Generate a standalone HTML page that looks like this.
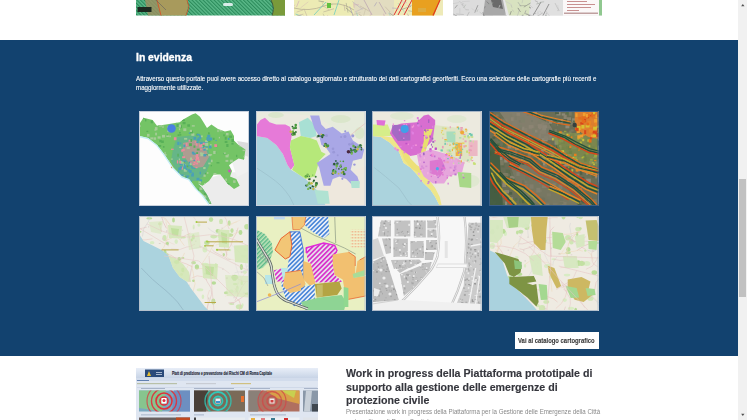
<!DOCTYPE html>
<html><head><meta charset="utf-8">
<style>
html,body{margin:0;padding:0;}
body{width:747px;height:420px;overflow:hidden;position:relative;background:#fff;font-family:"Liberation Sans",sans-serif;}
.abs{position:absolute;}
#blue{left:0;top:39.5px;width:738px;height:316px;background:#12426f;}
#sb{left:737.5px;top:0;width:9.5px;height:420px;background:#f1f1f1;}
#sbthumb{left:739px;top:178.5px;width:7px;height:118px;background:#c1c1c1;}
.t{white-space:nowrap;position:absolute;}
#h2{left:136px;top:50.7px;color:#fff;font-weight:bold;font-size:11.2px;-webkit-text-stroke:0.35px #fff;transform-origin:0 0;transform:scaleX(0.927);}
.p{left:136px;color:#fff;font-size:7.1px;-webkit-text-stroke:0.12px #fff;transform-origin:0 0;transform:scaleX(0.874);}
.thumb{position:absolute;width:109.6px;height:95px;background:#fff;overflow:hidden;}
.thumb svg{display:block;width:100%;height:100%;filter:blur(0.3px);}
#btn{left:514.5px;top:331.5px;width:84.5px;height:17.5px;background:#fff;}
#btntxt{left:518.2px;top:336.6px;color:#3a3a3a;font-weight:bold;font-size:6.6px;-webkit-text-stroke:0.1px #3a3a3a;transform-origin:0 0;transform:scaleX(0.894);}
#news h3{margin:0}
.nh{left:346px;color:#35363d;font-weight:bold;font-size:10.9px;-webkit-text-stroke:0.15px #35363d;transform-origin:0 0;transform:scaleX(0.977);}
.ns{left:346px;color:#888;font-size:6.8px;transform-origin:0 0;transform:scaleX(0.904);}
</style></head><body>
<!-- top images -->
<svg class="abs" style="left:136px;top:0" width="149" height="16" viewBox="0 0 149 16" preserveAspectRatio="none">
<defs><pattern id="tg" width="2.6" height="2.6" patternUnits="userSpaceOnUse" patternTransform="rotate(-45)"><rect width="2.6" height="2.6" fill="#5ab888"/><rect width="1.1" height="2.6" fill="#2a8a5a"/></pattern></defs>
<rect width="149" height="15.5" fill="url(#tg)"/>
<path d="M9,0 L22,0 L26,15.5 L12,15.5 Z" fill="#a09060" opacity="0.8"/>
<path d="M21,0 L51,0 L52,6 L50,15.5 L25,15.5 Z" fill="#a89a5c"/>
<path d="M21,0 L25,15.5 M51,0 L53,7 L50,15.5" stroke="#e04a20" stroke-width="0.8" fill="none"/>
<path d="M20,0 L30,10" stroke="#606060" stroke-width="0.6"/>
<path d="M135,0 L149,0 L149,15.5 L136,15.5 L138,8 Z" fill="#7a9a3a"/>
<path d="M135,0 Q139,8 136,15.5" stroke="#303030" stroke-width="0.6" fill="none"/>
<rect x="1.5" y="7" width="14" height="5" fill="#1c2a20"/>
<rect x="87" y="3" width="10" height="3" rx="1.5" fill="#d8ece8"/>
</svg>
<svg class="abs" style="left:294px;top:0" width="149" height="16" viewBox="0 0 149 16" preserveAspectRatio="none">
<rect width="149" height="15.5" fill="#eeeab8"/>
<path d="M0,0 L60,0 L60,15.5 L0,15.5 Z" fill="#ecebb4"/>
<path d="M60,0 L100,0 L100,15.5 L60,15.5 Z" fill="#e2dcc0"/>
<g fill="none" stroke-width="0.7">
<path d="M0,8 Q15,12 30,6 T60,10" stroke="#b0a890"/>
<path d="M20,15 L32,2 M40,15 L45,0" stroke="#60c8c0"/>
<path d="M70,0 L78,15 M85,2 L92,14" stroke="#b8a0b0"/>
<path d="M100,15 L108,0 M104,15 L112,0 M110,15 L118,0" stroke="#e03030" stroke-width="1"/>
</g>
<g opacity="0.9"><path d="M27.9,1.7 L29.6,6.9" stroke="#b8b098" stroke-width="0.4"/><path d="M64.8,4.6 L60.2,4.8" stroke="#d0a8b8" stroke-width="0.6"/><path d="M32.6,2.8 L38.5,4.8" stroke="#b8b098" stroke-width="0.7"/><path d="M95.2,12.8 L101.0,16.9" stroke="#9a9a88" stroke-width="0.7"/><path d="M113.4,13.6 L118.2,25.0" stroke="#c0b0a0" stroke-width="0.7"/><path d="M59.7,2.8 L60.1,7.7" stroke="#d0a8b8" stroke-width="0.7"/><path d="M0.9,4.7 L-3.4,10.4" stroke="#d0a8b8" stroke-width="0.5"/><path d="M50.0,4.6 L51.0,10.9" stroke="#c0b0a0" stroke-width="0.7"/><path d="M5.1,0.7 L2.5,7.0" stroke="#d0a8b8" stroke-width="0.7"/><path d="M82.7,2.3 L80.3,6.3" stroke="#a8a0b8" stroke-width="0.7"/><path d="M52.1,2.9 L54.0,12.6" stroke="#9a9a88" stroke-width="0.6"/><path d="M106.7,1.6 L112.9,2.8" stroke="#d0a8b8" stroke-width="0.6"/><path d="M28.0,5.3 L35.3,9.8" stroke="#b8b098" stroke-width="0.5"/><path d="M9.7,15.4 L16.5,23.8" stroke="#c0b0a0" stroke-width="0.4"/><path d="M34.1,15.5 L27.9,20.7" stroke="#d0a8b8" stroke-width="0.7"/><path d="M9.2,9.9 L2.6,12.1" stroke="#c0b0a0" stroke-width="0.6"/><path d="M113.5,5.3 L117.9,5.4" stroke="#a8a0b8" stroke-width="0.5"/><path d="M94.9,16.0 L93.0,24.1" stroke="#a8a0b8" stroke-width="0.6"/><path d="M24.5,0.9 L30.1,1.9" stroke="#9a9a88" stroke-width="0.8"/><path d="M71.6,8.7 L69.7,15.7" stroke="#b8b098" stroke-width="0.4"/><path d="M62.5,12.4 L66.4,25.7" stroke="#70c8c0" stroke-width="0.5"/><path d="M51.8,7.9 L58.3,13.2" stroke="#9a9a88" stroke-width="0.8"/><path d="M98.1,8.0 L104.6,8.6" stroke="#a8a0b8" stroke-width="0.6"/><path d="M91.1,6.7 L96.1,12.0" stroke="#c0b0a0" stroke-width="0.6"/><path d="M116.9,6.4 L106.9,9.7" stroke="#9a9a88" stroke-width="0.7"/><path d="M58.3,1.5 L68.4,9.3" stroke="#a8a0b8" stroke-width="0.5"/><path d="M77.5,12.8 L72.3,23.7" stroke="#d0a8b8" stroke-width="0.5"/><path d="M94.6,12.8 L98.4,19.7" stroke="#70c8c0" stroke-width="0.4"/><path d="M114.6,15.4 L112.3,19.2" stroke="#d0a8b8" stroke-width="0.5"/><path d="M114.3,10.7 L119.9,11.7" stroke="#9a9a88" stroke-width="0.6"/><path d="M55.7,6.5 L59.8,17.7" stroke="#a8a0b8" stroke-width="0.8"/><path d="M1.5,14.0 L12.9,18.3" stroke="#70c8c0" stroke-width="0.8"/><path d="M65.0,14.1 L73.6,20.4" stroke="#c0b0a0" stroke-width="0.7"/><path d="M66.4,12.5 L58.3,14.8" stroke="#b8b098" stroke-width="0.4"/><path d="M70.1,7.8 L61.0,12.0" stroke="#a8a0b8" stroke-width="0.4"/><path d="M9.4,14.1 L2.7,16.1" stroke="#c0b0a0" stroke-width="0.7"/><path d="M10.0,8.7 L14.4,19.7" stroke="#c0b0a0" stroke-width="0.6"/><path d="M89.5,13.7 L91.0,18.2" stroke="#d0a8b8" stroke-width="0.7"/><path d="M43.2,16.0 L46.1,26.7" stroke="#70c8c0" stroke-width="0.4"/><path d="M104.0,3.1 L111.2,13.2" stroke="#70c8c0" stroke-width="0.4"/><path d="M65.9,5.9 L75.5,11.4" stroke="#c0b0a0" stroke-width="0.6"/><path d="M40.0,8.7 L29.3,12.0" stroke="#b8b098" stroke-width="0.7"/><path d="M14.3,1.8 L6.4,8.0" stroke="#d0a8b8" stroke-width="0.4"/><path d="M29.0,13.6 L34.0,24.1" stroke="#9a9a88" stroke-width="0.4"/><path d="M6.2,14.5 L4.4,27.5" stroke="#d0a8b8" stroke-width="0.5"/></g><rect x="33" y="3" width="4" height="5" fill="#60c040"/>
<path d="M118,0 L146,0 L140,15.5 L118,15.5 Z" fill="#e8a020"/>
<path d="M146,0 L139,15.5" stroke="#e03a20" stroke-width="1.2"/>
<rect x="124" y="8" width="8" height="4" fill="#d8b050" opacity="0.7"/>
</svg>
<svg class="abs" style="left:453px;top:0" width="149" height="16" viewBox="0 0 149 16" preserveAspectRatio="none">
<rect width="149" height="15.5" fill="#e6e6e6"/>
<path d="M0,0 H40 V15.5 H0 Z" fill="#dcdcdc"/>
<path d="M32,0 L50,0 L53,15.5 L30,15.5 Z" fill="#a8a8a8"/>
<path d="M38,0 L48,0 L50,9 L40,7 Z" fill="#6a6a6a"/>
<path d="M52,0 L78,0 L76,15.5 L56,15.5 Z" fill="#d8e2c0"/>
<path d="M78,0 L110,0 L110,15.5 L76,15.5 Z" fill="#e0e0e0"/>
<path d="M80,15.5 L88,2 M90,15.5 L96,4" stroke="#707070" stroke-width="0.7"/><g opacity="0.8"><path d="M93.7,12.6 L92.1,17.0" stroke="#909090" stroke-width="0.5"/><path d="M64.5,15.8 L66.7,19.8" stroke="#a0a8a0" stroke-width="0.5"/><path d="M87.4,2.8 L83.3,4.1" stroke="#a0a8a0" stroke-width="0.8"/><path d="M72.9,14.1 L78.6,15.5" stroke="#909090" stroke-width="0.6"/><path d="M40.2,2.8 L34.9,4.8" stroke="#a0a8a0" stroke-width="0.9"/><path d="M89.6,12.8 L83.3,17.2" stroke="#909090" stroke-width="0.5"/><path d="M106.6,10.6 L104.1,10.6" stroke="#b0b0b0" stroke-width="0.5"/><path d="M51.7,14.2 L56.9,18.5" stroke="#c8c8c8" stroke-width="0.8"/><path d="M74.3,14.1 L77.9,17.4" stroke="#909090" stroke-width="0.6"/><path d="M24.9,5.2 L21.8,12.6" stroke="#707070" stroke-width="0.7"/><path d="M104.7,5.0 L105.8,10.4" stroke="#c8c8c8" stroke-width="0.5"/><path d="M58.3,11.1 L56.9,15.0" stroke="#707070" stroke-width="0.7"/><path d="M16.9,1.1 L9.0,1.7" stroke="#c8c8c8" stroke-width="0.7"/><path d="M33.7,1.5 L36.0,3.9" stroke="#707070" stroke-width="0.8"/><path d="M84.0,2.4 L86.8,5.0" stroke="#b0b0b0" stroke-width="0.5"/><path d="M85.4,10.9 L84.2,18.6" stroke="#c8c8c8" stroke-width="0.4"/><path d="M26.5,12.0 L32.6,16.7" stroke="#b0b0b0" stroke-width="0.5"/><path d="M6.6,15.9 L11.1,21.7" stroke="#909090" stroke-width="0.8"/><path d="M70.8,15.2 L64.9,17.6" stroke="#a0a8a0" stroke-width="0.6"/><path d="M0.3,14.1 L4.2,16.2" stroke="#909090" stroke-width="0.8"/><path d="M52.3,1.1 L58.6,4.7" stroke="#c8c8c8" stroke-width="0.7"/><path d="M58.0,4.8 L59.0,7.7" stroke="#b0b0b0" stroke-width="0.6"/><path d="M3.0,14.0 L10.8,14.5" stroke="#909090" stroke-width="0.4"/><path d="M12.5,9.7 L15.9,9.9" stroke="#b0b0b0" stroke-width="0.6"/><path d="M77.6,3.0 L70.8,7.1" stroke="#707070" stroke-width="0.6"/><path d="M18.6,8.5 L22.7,11.2" stroke="#c8c8c8" stroke-width="0.6"/><path d="M69.9,14.4 L69.2,16.5" stroke="#909090" stroke-width="0.5"/><path d="M92.7,10.6 L96.9,16.7" stroke="#c8c8c8" stroke-width="0.8"/><path d="M9.0,3.8 L10.4,6.0" stroke="#b0b0b0" stroke-width="0.7"/><path d="M56.9,15.8 L58.0,18.0" stroke="#b0b0b0" stroke-width="0.6"/><path d="M58.9,9.6 L61.2,11.8" stroke="#b0b0b0" stroke-width="0.6"/><path d="M65.0,2.2 L67.8,6.4" stroke="#a0a8a0" stroke-width="0.8"/><path d="M7.7,3.6 L12.8,9.5" stroke="#b0b0b0" stroke-width="0.4"/><path d="M75.3,3.4 L79.9,7.9" stroke="#c8c8c8" stroke-width="0.8"/><path d="M32.2,6.2 L31.5,8.3" stroke="#707070" stroke-width="0.6"/><path d="M6.9,8.2 L6.8,13.5" stroke="#c8c8c8" stroke-width="0.8"/><path d="M76.1,7.0 L77.9,8.1" stroke="#707070" stroke-width="0.9"/><path d="M29.8,12.1 L31.5,17.6" stroke="#707070" stroke-width="0.6"/><path d="M67.0,4.1 L66.9,6.3" stroke="#c8c8c8" stroke-width="0.7"/><path d="M73.0,10.3 L71.6,13.9" stroke="#909090" stroke-width="0.7"/><path d="M75.7,15.0 L78.0,17.3" stroke="#707070" stroke-width="0.8"/><path d="M69.7,0.1 L69.0,3.3" stroke="#b0b0b0" stroke-width="0.5"/><path d="M91.1,1.8 L87.3,2.2" stroke="#a0a8a0" stroke-width="0.7"/><path d="M16.3,11.9 L12.4,18.9" stroke="#b0b0b0" stroke-width="0.8"/><path d="M86.5,10.8 L90.3,14.9" stroke="#c8c8c8" stroke-width="0.8"/><path d="M83.2,13.5 L80.2,13.6" stroke="#909090" stroke-width="0.4"/><path d="M5.8,2.6 L-1.7,4.0" stroke="#c8c8c8" stroke-width="0.8"/><path d="M72.2,13.5 L75.2,14.5" stroke="#909090" stroke-width="0.6"/><path d="M64.9,7.9 L67.4,11.8" stroke="#707070" stroke-width="0.8"/><path d="M81.9,0.6 L84.9,2.1" stroke="#909090" stroke-width="0.6"/><path d="M93.4,15.0 L91.2,18.7" stroke="#a0a8a0" stroke-width="0.8"/><path d="M102.0,3.1 L105.6,10.1" stroke="#909090" stroke-width="0.4"/><path d="M12.7,4.7 L10.5,8.0" stroke="#a0a8a0" stroke-width="0.6"/><path d="M4.5,4.9 L1.7,8.3" stroke="#909090" stroke-width="0.9"/><path d="M66.7,5.6 L72.9,5.7" stroke="#707070" stroke-width="0.4"/><path d="M84.6,11.7 L85.3,14.3" stroke="#c8c8c8" stroke-width="0.7"/><path d="M5.9,1.3 L11.2,4.2" stroke="#b0b0b0" stroke-width="0.5"/><path d="M66.4,9.6 L64.5,15.6" stroke="#b0b0b0" stroke-width="0.6"/><path d="M25.0,9.4 L23.9,12.0" stroke="#a0a8a0" stroke-width="0.5"/><path d="M47.0,5.0 L45.8,7.8" stroke="#c8c8c8" stroke-width="0.9"/></g>
<rect x="110" y="0" width="37" height="15.5" fill="#fbf8f8"/>
<g fill="#c89090"><rect x="114" y="1" width="20" height="1"/><rect x="114" y="4" width="28" height="1"/><rect x="114" y="7" width="24" height="1"/><rect x="114" y="10" width="12" height="1"/></g>
<rect x="111" y="12.5" width="34" height="1.5" fill="#c0a0a0"/>
<rect x="146" y="0" width="3" height="15.5" fill="#90c890"/>
</svg>
<div id="blue" class="abs"></div>
<div id="h2" class="t">In evidenza</div>
<div class="t p" style="top:74.8px">Attraverso questo portale puoi avere accesso diretto al catalogo aggiornato e strutturato dei dati cartografici georiferiti. Ecco una selezione delle cartografie più recenti e</div>
<div class="t p" style="top:84.2px">maggiormente utilizzate.</div>

<div class="thumb" style="left:138.7px;top:110.7px;width:110px"><svg viewBox="0 0 110 95" preserveAspectRatio="none">
<defs><clipPath id="t1c"><path d="M0,13.6 L4.5,6.8 L13.6,9 L18,14.7 L27,13.6 L40.7,11.3 L45,7.9 L53,3.4 L56.6,2.3 L61,5.7 L64.5,11.3 L68,17 L72.4,13.6 L79,18 L86,20.4 L91.7,19.2 L95,25 L95,29.4 L99.6,34 L106.4,38.5 L105,48.7 L99.6,47.5 L94,51 L90,54.3 L93,60 L91,65.6 L97.3,68 L100.7,74.7 L95,78 L88.3,72.4 L81.5,63.4 L74.7,63.4 L70,70 L63.4,74.7 L58.8,72.4 L63.4,77 L68,83.7 L72.4,92.8 L70,93 L63.4,83.7 L56.6,77 L49.8,68 L43,65.6 L34,56.6 L29.4,49.8 L24.9,43 L18,34 L9,27 L0,24.9 Z"/><path d="M58.8,72.4 L63.4,77 L68,83.7 L72.4,92.8 L70,93 Z"/></clipPath></defs>
<rect width="110" height="95" fill="#fdfdfd"/>
<path d="M56,72 L86,62 L110,60 L110,95 L72,95 Z" fill="#ececec"/>
<path d="M92,48 L110,44 L110,60 L98,66 Z" fill="#f0f0f0"/>
<path d="M0,15 L6,16 L6,25 L0,25 Z" fill="#d8d2d8"/>
<path d="M98,30 L110,32 L110,46 L104,44 Z" fill="#dcdcdc"/>
<path d="M0,13.6 L4.5,6.8 L13.6,9 L18,14.7 L27,13.6 L40.7,11.3 L45,7.9 L53,3.4 L56.6,2.3 L61,5.7 L64.5,11.3 L68,17 L72.4,13.6 L79,18 L86,20.4 L91.7,19.2 L95,25 L95,29.4 L99.6,34 L106.4,38.5 L105,48.7 L99.6,47.5 L94,51 L90,54.3 L93,60 L91,65.6 L97.3,68 L100.7,74.7 L95,78 L88.3,72.4 L81.5,63.4 L74.7,63.4 L70,70 L63.4,74.7 L58.8,72.4 L63.4,77 L68,83.7 L72.4,92.8 L70,93 L63.4,83.7 L56.6,77 L49.8,68 L43,65.6 L34,56.6 L29.4,49.8 L24.9,43 L18,34 L9,27 L0,24.9 Z" fill="#74c466"/>
<path d="M58.8,72.4 L63.4,77 L68,83.7 L72.4,92.8 L70,93 Z" fill="#6ab872"/>
<g clip-path="url(#t1c)">
<path d="M38,26 L56,24 L68,32 L72,50 L66,64 L58,70 L50,70 L42,64 L36,57 L32,50 L34,38 Z" fill="#58a8a8" opacity="0.5"/>
<path d="M44,32 L56,29 L66,36 L70,46 L64,56 L56,57 L50,52 L44,44 Z" fill="#dc8c98" opacity="0.6"/>
<rect x="6.4" y="48.2" width="2.1" height="1.3" fill="#a6cc98"/><rect x="31.9" y="13.7" width="1.8" height="2.8" fill="#a6cc98"/><rect x="41.0" y="52.0" width="1.3" height="1.6" fill="#ec8a9c"/><rect x="74.8" y="40.6" width="2.4" height="2.1" fill="#58b058"/><rect x="52.2" y="63.1" width="2.6" height="2.5" fill="#4aa0b8"/><rect x="42.4" y="63.5" width="2.1" height="1.5" fill="#4aa0b8"/><rect x="43.2" y="37.9" width="2.5" height="1.3" fill="#ec8a9c"/><rect x="7.4" y="19.8" width="1.9" height="1.3" fill="#58b058"/><rect x="0.0" y="14.4" width="1.9" height="1.3" fill="#a6cc98"/><rect x="96.2" y="58.3" width="1.7" height="1.9" fill="#58b058"/><rect x="29.1" y="78.7" width="1.2" height="3.1" fill="#58b058"/><rect x="39.1" y="2.8" width="1.8" height="1.7" fill="#a6cc98"/><rect x="40.1" y="20.9" width="1.6" height="1.6" fill="#58b058"/><rect x="18.7" y="12.1" width="3.0" height="2.8" fill="#58b058"/><rect x="26.5" y="55.7" width="2.0" height="1.5" fill="#58b058"/><rect x="61.2" y="31.0" width="2.3" height="2.8" fill="#4aa0b8"/><rect x="48.8" y="58.2" width="2.2" height="2.6" fill="#4aa0b8"/><rect x="49.8" y="50.7" width="3.1" height="2.6" fill="#4aa0b8"/><rect x="8.0" y="22.9" width="2.5" height="2.8" fill="#a6cc98"/><rect x="56.7" y="32.2" width="1.8" height="2.6" fill="#ec8a9c"/><rect x="86.7" y="92.3" width="1.7" height="1.3" fill="#a6cc98"/><rect x="85.7" y="25.7" width="2.0" height="3.0" fill="#58b058"/><rect x="90.1" y="24.6" width="3.0" height="2.3" fill="#58b058"/><rect x="77.0" y="8.5" width="2.6" height="2.1" fill="#a6cc98"/><rect x="26.2" y="10.4" width="1.3" height="1.6" fill="#58b058"/><rect x="31.9" y="47.5" width="1.9" height="1.2" fill="#a6cc98"/><rect x="38.2" y="5.2" width="1.3" height="2.7" fill="#58b058"/><rect x="28.1" y="15.5" width="2.9" height="2.9" fill="#a6cc98"/><rect x="73.8" y="26.8" width="1.8" height="2.1" fill="#58b058"/><rect x="52.2" y="47.8" width="2.2" height="1.2" fill="#ec8a9c"/><rect x="67.9" y="61.1" width="1.5" height="1.7" fill="#a6cc98"/><rect x="49.6" y="28.7" width="1.9" height="1.8" fill="#ec8a9c"/><rect x="64.8" y="34.3" width="1.8" height="1.3" fill="#4aa0b8"/><rect x="60.4" y="68.4" width="2.7" height="2.1" fill="#4aa0b8"/><rect x="5.4" y="88.0" width="2.1" height="1.9" fill="#58b058"/><rect x="61.3" y="37.5" width="1.5" height="1.6" fill="#ec8a9c"/><rect x="15.4" y="18.3" width="1.9" height="1.4" fill="#a6cc98"/><rect x="45.5" y="49.8" width="1.9" height="1.3" fill="#4aa0b8"/><rect x="30.5" y="91.9" width="2.2" height="2.5" fill="#58b058"/><rect x="27.3" y="10.4" width="2.2" height="2.6" fill="#58b058"/><rect x="76.8" y="10.7" width="2.2" height="2.4" fill="#a6cc98"/><rect x="52.3" y="22.3" width="3.1" height="2.6" fill="#a6cc98"/><rect x="74.2" y="39.9" width="2.5" height="3.1" fill="#a6cc98"/><rect x="46.3" y="64.8" width="2.8" height="2.7" fill="#4aa0b8"/><rect x="104.7" y="47.1" width="1.6" height="2.0" fill="#58b058"/><rect x="73.2" y="90.1" width="2.0" height="1.6" fill="#58b058"/><rect x="107.2" y="13.5" width="1.3" height="2.0" fill="#a6cc98"/><rect x="41.1" y="31.5" width="1.2" height="1.8" fill="#4aa0b8"/><rect x="38.7" y="90.8" width="3.1" height="1.6" fill="#58b058"/><rect x="41.0" y="87.4" width="1.9" height="3.0" fill="#58b058"/><rect x="84.3" y="3.9" width="1.3" height="3.0" fill="#a6cc98"/><rect x="34.8" y="26.2" width="2.7" height="3.0" fill="#ec8a9c"/><rect x="69.7" y="89.6" width="1.7" height="2.2" fill="#a6cc98"/><rect x="66.8" y="31.1" width="1.9" height="2.8" fill="#4aa0b8"/><rect x="27.2" y="6.1" width="2.3" height="1.9" fill="#a6cc98"/><rect x="29.1" y="8.0" width="2.2" height="2.6" fill="#a6cc98"/><rect x="93.2" y="63.1" width="2.9" height="1.8" fill="#58b058"/><rect x="62.4" y="35.4" width="1.6" height="1.7" fill="#a6cc98"/><rect x="63.6" y="31.0" width="3.2" height="2.2" fill="#4aa0b8"/><rect x="4.4" y="27.9" width="1.6" height="3.1" fill="#a6cc98"/><rect x="85.6" y="89.8" width="2.4" height="2.4" fill="#a6cc98"/><rect x="23.9" y="35.0" width="1.6" height="1.7" fill="#58b058"/><rect x="65.9" y="61.9" width="1.2" height="1.9" fill="#58b058"/><rect x="60.5" y="60.7" width="1.5" height="2.6" fill="#4aa0b8"/><rect x="45.1" y="26.9" width="3.1" height="1.8" fill="#a6cc98"/><rect x="62.3" y="33.9" width="2.9" height="3.2" fill="#4aa0b8"/><rect x="97.1" y="43.8" width="1.2" height="2.3" fill="#58b058"/><rect x="70.5" y="86.4" width="2.4" height="1.9" fill="#a6cc98"/><rect x="57.3" y="87.9" width="2.2" height="2.8" fill="#a6cc98"/><rect x="106.4" y="18.7" width="3.1" height="3.2" fill="#58b058"/><rect x="44.0" y="49.2" width="1.4" height="1.7" fill="#4aa0b8"/><rect x="79.7" y="85.2" width="2.3" height="2.7" fill="#a6cc98"/><rect x="4.2" y="79.6" width="2.4" height="2.3" fill="#a6cc98"/><rect x="69.0" y="29.1" width="2.4" height="2.1" fill="#58b058"/><rect x="4.5" y="60.5" width="2.7" height="2.8" fill="#a6cc98"/><rect x="41.6" y="90.3" width="2.9" height="3.2" fill="#58b058"/><rect x="80.5" y="77.4" width="3.2" height="2.2" fill="#58b058"/><rect x="105.2" y="87.0" width="2.8" height="3.1" fill="#58b058"/><rect x="55.7" y="30.3" width="1.6" height="1.5" fill="#ec8a9c"/><rect x="18.6" y="74.6" width="2.3" height="2.5" fill="#a6cc98"/><rect x="63.8" y="83.8" width="3.2" height="2.5" fill="#a6cc98"/><rect x="84.1" y="42.0" width="2.7" height="1.3" fill="#58b058"/><rect x="34.4" y="0.2" width="1.5" height="2.4" fill="#a6cc98"/><rect x="64.2" y="56.0" width="2.4" height="2.1" fill="#a6cc98"/><rect x="61.9" y="33.3" width="2.1" height="3.1" fill="#a6cc98"/><rect x="49.8" y="21.5" width="1.7" height="1.3" fill="#4aa0b8"/><rect x="60.9" y="41.4" width="2.2" height="1.7" fill="#a6cc98"/><rect x="23.3" y="59.1" width="3.0" height="1.5" fill="#a6cc98"/><rect x="37.9" y="13.5" width="1.3" height="2.6" fill="#a6cc98"/><rect x="69.5" y="27.3" width="1.4" height="2.7" fill="#4aa0b8"/><rect x="77.5" y="51.1" width="2.9" height="1.4" fill="#58b058"/><rect x="90.2" y="16.2" width="1.6" height="2.7" fill="#a6cc98"/><rect x="54.1" y="75.7" width="2.2" height="1.9" fill="#58b058"/><rect x="9.5" y="84.4" width="1.6" height="1.7" fill="#a6cc98"/><rect x="71.1" y="33.1" width="1.5" height="2.9" fill="#a6cc98"/><rect x="72.8" y="70.5" width="2.1" height="2.7" fill="#58b058"/><rect x="97.4" y="22.6" width="1.8" height="2.6" fill="#58b058"/><rect x="92.8" y="14.7" width="1.7" height="1.9" fill="#58b058"/><rect x="11.2" y="91.4" width="2.0" height="3.2" fill="#a6cc98"/><rect x="21.6" y="60.6" width="1.6" height="2.0" fill="#a6cc98"/><rect x="47.3" y="54.5" width="2.0" height="1.7" fill="#58b058"/><rect x="70.6" y="43.1" width="2.5" height="1.4" fill="#a6cc98"/><rect x="50.1" y="59.0" width="2.6" height="3.1" fill="#4aa0b8"/><rect x="4.2" y="51.6" width="2.8" height="3.1" fill="#58b058"/><rect x="76.8" y="33.5" width="1.6" height="2.7" fill="#58b058"/><rect x="51.5" y="28.0" width="1.5" height="2.9" fill="#58b058"/><rect x="52.8" y="40.7" width="2.5" height="1.9" fill="#4aa0b8"/><rect x="102.2" y="81.2" width="2.9" height="3.0" fill="#a6cc98"/><rect x="69.6" y="1.4" width="3.1" height="2.5" fill="#a6cc98"/><rect x="27.5" y="9.6" width="1.7" height="2.8" fill="#58b058"/><rect x="61.1" y="25.1" width="1.5" height="2.2" fill="#4aa0b8"/><rect x="6.4" y="44.4" width="2.2" height="2.2" fill="#58b058"/><rect x="59.3" y="82.0" width="2.9" height="2.1" fill="#a6cc98"/><rect x="69.8" y="74.5" width="2.6" height="3.0" fill="#a6cc98"/><rect x="50.4" y="72.5" width="1.6" height="1.3" fill="#a6cc98"/><rect x="61.8" y="24.5" width="2.0" height="1.8" fill="#a6cc98"/><rect x="6.0" y="53.9" width="1.4" height="2.8" fill="#a6cc98"/><rect x="23.4" y="14.4" width="1.2" height="2.6" fill="#a6cc98"/><rect x="13.4" y="91.8" width="2.9" height="1.5" fill="#a6cc98"/><rect x="80.7" y="17.8" width="2.7" height="2.6" fill="#a6cc98"/><rect x="94.1" y="69.3" width="2.5" height="2.6" fill="#a6cc98"/><rect x="106.1" y="68.1" width="1.2" height="2.5" fill="#a6cc98"/><rect x="63.2" y="41.7" width="1.5" height="2.8" fill="#a6cc98"/><rect x="66.1" y="29.3" width="3.0" height="2.0" fill="#a6cc98"/><rect x="88.8" y="26.9" width="1.7" height="2.0" fill="#4aa0b8"/><rect x="100.5" y="33.0" width="2.3" height="2.8" fill="#a6cc98"/><rect x="51.2" y="19.6" width="2.7" height="2.8" fill="#58b058"/><rect x="52.4" y="56.0" width="1.6" height="1.6" fill="#4aa0b8"/><rect x="44.3" y="49.1" width="1.3" height="3.2" fill="#ec8a9c"/><rect x="37.9" y="49.3" width="1.3" height="3.2" fill="#ec8a9c"/><rect x="106.0" y="24.1" width="1.6" height="1.6" fill="#a6cc98"/><rect x="109.1" y="21.1" width="1.7" height="1.9" fill="#a6cc98"/><rect x="71.1" y="93.6" width="1.5" height="2.7" fill="#a6cc98"/><rect x="65.1" y="72.0" width="1.8" height="1.7" fill="#a6cc98"/><rect x="13.7" y="45.7" width="1.7" height="1.5" fill="#58b058"/><rect x="69.1" y="43.0" width="2.8" height="2.2" fill="#a6cc98"/><rect x="92.4" y="31.8" width="2.2" height="1.8" fill="#58b058"/><rect x="37.5" y="13.3" width="2.9" height="2.3" fill="#4aa0b8"/><rect x="24.0" y="54.3" width="1.6" height="2.7" fill="#a6cc98"/><rect x="78.3" y="18.7" width="1.4" height="2.4" fill="#a6cc98"/><rect x="54.5" y="26.0" width="2.4" height="2.6" fill="#4aa0b8"/><rect x="54.4" y="48.8" width="2.3" height="1.2" fill="#4aa0b8"/><rect x="106.4" y="21.3" width="1.4" height="1.7" fill="#58b058"/><rect x="89.9" y="2.9" width="2.6" height="1.6" fill="#a6cc98"/><rect x="57.5" y="66.8" width="2.9" height="2.6" fill="#4aa0b8"/><rect x="55.1" y="26.6" width="2.0" height="1.5" fill="#4aa0b8"/><rect x="65.1" y="81.8" width="2.3" height="2.7" fill="#58b058"/><rect x="57.8" y="37.6" width="2.8" height="1.9" fill="#58b058"/><rect x="89.7" y="80.5" width="2.2" height="3.1" fill="#a6cc98"/><rect x="57.2" y="41.2" width="1.8" height="1.8" fill="#58b058"/><rect x="51.3" y="50.7" width="1.4" height="1.5" fill="#ec8a9c"/><rect x="50.7" y="52.1" width="2.1" height="1.8" fill="#a6cc98"/><rect x="42.1" y="55.6" width="1.9" height="2.9" fill="#ec8a9c"/><rect x="84.9" y="15.1" width="2.9" height="2.1" fill="#a6cc98"/><rect x="105.5" y="70.2" width="1.9" height="1.9" fill="#58b058"/><rect x="14.0" y="82.7" width="2.7" height="2.4" fill="#a6cc98"/><rect x="66.8" y="36.1" width="2.1" height="2.6" fill="#a6cc98"/><rect x="20.3" y="28.9" width="2.4" height="2.4" fill="#58b058"/><rect x="39.3" y="56.5" width="3.1" height="2.6" fill="#4aa0b8"/><rect x="44.1" y="53.3" width="3.0" height="3.1" fill="#a6cc98"/><rect x="53.5" y="41.8" width="3.2" height="1.9" fill="#4aa0b8"/><rect x="58.3" y="77.5" width="1.8" height="3.2" fill="#58b058"/><rect x="90.9" y="48.7" width="3.0" height="2.6" fill="#a6cc98"/><rect x="56.3" y="48.0" width="1.6" height="2.5" fill="#ec8a9c"/><rect x="64.5" y="63.5" width="2.2" height="2.3" fill="#a6cc98"/><rect x="11.7" y="9.5" width="2.2" height="2.8" fill="#58b058"/><rect x="67.4" y="76.6" width="1.2" height="2.7" fill="#a6cc98"/><rect x="18.6" y="25.3" width="3.0" height="2.4" fill="#a6cc98"/><rect x="38.4" y="42.7" width="1.3" height="3.0" fill="#58b058"/><rect x="68.2" y="23.7" width="3.1" height="2.9" fill="#4aa0b8"/><rect x="42.9" y="68.3" width="1.8" height="3.0" fill="#a6cc98"/><rect x="19.1" y="34.0" width="3.1" height="1.8" fill="#58b058"/><rect x="42.4" y="38.3" width="1.4" height="2.9" fill="#ec8a9c"/><rect x="38.6" y="23.3" width="1.8" height="1.7" fill="#58b058"/><rect x="17.1" y="67.1" width="1.7" height="2.9" fill="#a6cc98"/><rect x="25.0" y="43.0" width="2.6" height="1.7" fill="#a6cc98"/><rect x="27.1" y="57.8" width="2.9" height="1.4" fill="#58b058"/><rect x="56.4" y="51.5" width="2.7" height="2.0" fill="#ec8a9c"/><rect x="42.9" y="8.2" width="2.9" height="1.8" fill="#58b058"/><rect x="39.8" y="47.5" width="1.3" height="1.8" fill="#a6cc98"/><rect x="14.5" y="26.3" width="2.6" height="2.5" fill="#a6cc98"/><rect x="38.7" y="59.7" width="1.4" height="3.0" fill="#4aa0b8"/><rect x="80.7" y="67.7" width="1.3" height="1.5" fill="#a6cc98"/><rect x="75.3" y="33.2" width="2.9" height="2.8" fill="#ec8a9c"/><rect x="100.6" y="71.2" width="2.6" height="2.0" fill="#a6cc98"/><rect x="56.3" y="88.2" width="2.7" height="1.3" fill="#58b058"/><rect x="59.8" y="23.7" width="1.9" height="2.0" fill="#4aa0b8"/><rect x="22.2" y="29.5" width="2.6" height="2.5" fill="#58b058"/><rect x="32.9" y="84.0" width="2.3" height="1.9" fill="#58b058"/><rect x="39.9" y="16.0" width="1.2" height="3.2" fill="#a6cc98"/><rect x="107.8" y="53.5" width="2.2" height="2.1" fill="#a6cc98"/><rect x="20.9" y="51.6" width="3.0" height="2.5" fill="#4aa0b8"/><rect x="27.7" y="23.4" width="1.3" height="2.7" fill="#58b058"/><rect x="92.4" y="28.1" width="2.5" height="2.9" fill="#58b058"/><rect x="40.5" y="52.4" width="2.9" height="1.7" fill="#4aa0b8"/><rect x="8.8" y="65.4" width="2.1" height="3.1" fill="#58b058"/><rect x="21.0" y="68.7" width="2.9" height="2.9" fill="#4aa0b8"/><rect x="90.9" y="85.9" width="1.8" height="2.1" fill="#58b058"/><rect x="62.0" y="33.1" width="1.4" height="1.8" fill="#ec8a9c"/><rect x="68.2" y="77.1" width="2.6" height="2.4" fill="#a6cc98"/><rect x="52.9" y="61.5" width="1.9" height="3.0" fill="#4aa0b8"/><rect x="40.9" y="55.2" width="2.3" height="2.3" fill="#4aa0b8"/><rect x="43.6" y="10.9" width="3.0" height="2.3" fill="#58b058"/><rect x="53.8" y="52.6" width="2.3" height="1.4" fill="#ec8a9c"/><rect x="56.5" y="55.9" width="2.0" height="1.3" fill="#ec8a9c"/><rect x="78.6" y="71.9" width="3.2" height="2.6" fill="#a6cc98"/><rect x="104.3" y="68.6" width="2.4" height="1.4" fill="#a6cc98"/><rect x="60.4" y="76.3" width="3.1" height="2.6" fill="#a6cc98"/><rect x="92.2" y="55.2" width="1.2" height="1.4" fill="#a6cc98"/><rect x="1.5" y="32.5" width="2.2" height="2.9" fill="#58b058"/><rect x="88.0" y="3.4" width="2.8" height="2.6" fill="#58b058"/><rect x="43.2" y="45.2" width="2.9" height="2.0" fill="#ec8a9c"/><rect x="96.0" y="58.0" width="1.9" height="1.6" fill="#a6cc98"/><rect x="98.3" y="56.0" width="1.5" height="1.9" fill="#a6cc98"/><rect x="51.5" y="54.8" width="1.9" height="1.2" fill="#4aa0b8"/><rect x="63.7" y="31.7" width="2.1" height="3.2" fill="#ec8a9c"/><rect x="105.3" y="94.3" width="2.3" height="2.7" fill="#a6cc98"/><rect x="69.8" y="34.5" width="2.8" height="2.9" fill="#4aa0b8"/><rect x="40.4" y="23.1" width="1.9" height="1.5" fill="#58b058"/><rect x="49.0" y="54.0" width="1.5" height="1.3" fill="#4aa0b8"/><rect x="101.3" y="55.4" width="1.6" height="2.4" fill="#a6cc98"/><rect x="47.1" y="82.5" width="2.2" height="3.0" fill="#a6cc98"/><rect x="30.3" y="24.5" width="1.5" height="1.7" fill="#a6cc98"/><rect x="105.9" y="57.1" width="2.8" height="3.0" fill="#a6cc98"/><rect x="37.5" y="13.0" width="2.3" height="3.0" fill="#58b058"/><rect x="44.6" y="64.5" width="1.3" height="2.0" fill="#a6cc98"/><rect x="54.4" y="56.8" width="2.1" height="1.2" fill="#4aa0b8"/><rect x="36.2" y="8.9" width="1.5" height="2.7" fill="#58b058"/><rect x="9.9" y="2.7" width="1.3" height="2.2" fill="#58b058"/><rect x="40.2" y="14.2" width="2.7" height="3.0" fill="#58b058"/><rect x="11.9" y="69.7" width="2.5" height="2.0" fill="#a6cc98"/><rect x="69.0" y="21.3" width="1.7" height="2.1" fill="#58b058"/><rect x="23.8" y="54.1" width="2.9" height="2.9" fill="#a6cc98"/><rect x="65.7" y="43.0" width="3.0" height="1.6" fill="#58b058"/><rect x="109.4" y="28.3" width="1.4" height="3.1" fill="#a6cc98"/><rect x="1.0" y="86.6" width="2.7" height="1.4" fill="#58b058"/><rect x="18.6" y="64.9" width="1.9" height="3.0" fill="#a6cc98"/><rect x="25.5" y="40.9" width="1.2" height="3.2" fill="#a6cc98"/><rect x="34.8" y="83.5" width="2.2" height="1.5" fill="#58b058"/><rect x="44.9" y="52.9" width="1.2" height="2.6" fill="#4aa0b8"/><rect x="42.4" y="38.9" width="3.2" height="1.2" fill="#ec8a9c"/><rect x="67.2" y="35.8" width="1.6" height="1.4" fill="#4aa0b8"/><rect x="43.3" y="50.0" width="2.6" height="1.8" fill="#58b058"/><rect x="69.2" y="51.6" width="2.4" height="1.7" fill="#a6cc98"/><rect x="57.4" y="45.3" width="1.5" height="3.1" fill="#ec8a9c"/><rect x="58.2" y="49.8" width="2.8" height="1.7" fill="#a6cc98"/><rect x="91.5" y="77.7" width="1.5" height="1.7" fill="#58b058"/><rect x="57.3" y="43.0" width="2.0" height="3.2" fill="#ec8a9c"/><rect x="87.8" y="72.1" width="2.6" height="1.9" fill="#58b058"/><rect x="57.3" y="22.6" width="1.9" height="2.0" fill="#58b058"/><rect x="41.0" y="63.2" width="1.3" height="2.7" fill="#4aa0b8"/><rect x="41.7" y="50.0" width="3.0" height="2.7" fill="#a6cc98"/><rect x="84.6" y="73.1" width="1.6" height="1.4" fill="#a6cc98"/><rect x="89.9" y="9.7" width="2.7" height="2.3" fill="#a6cc98"/><rect x="89.9" y="82.8" width="1.9" height="2.2" fill="#58b058"/><rect x="28.3" y="19.2" width="2.3" height="1.9" fill="#a6cc98"/><rect x="51.1" y="46.5" width="1.9" height="2.8" fill="#a6cc98"/><rect x="45.0" y="53.7" width="1.7" height="2.8" fill="#4aa0b8"/><rect x="48.9" y="83.4" width="2.1" height="2.5" fill="#a6cc98"/><rect x="5.4" y="81.9" width="2.4" height="1.6" fill="#a6cc98"/><rect x="35.7" y="79.9" width="2.8" height="3.2" fill="#58b058"/><rect x="47.3" y="64.5" width="2.9" height="1.4" fill="#4aa0b8"/><rect x="57.9" y="27.6" width="2.7" height="2.2" fill="#4aa0b8"/><rect x="7.6" y="53.1" width="2.3" height="2.8" fill="#a6cc98"/><rect x="65.5" y="43.8" width="2.2" height="1.4" fill="#ec8a9c"/><rect x="52.8" y="14.2" width="3.0" height="1.4" fill="#a6cc98"/><rect x="54.6" y="50.9" width="2.1" height="1.5" fill="#ec8a9c"/><rect x="58.9" y="48.1" width="1.6" height="2.0" fill="#ec8a9c"/><rect x="25.2" y="71.3" width="1.7" height="1.3" fill="#58b058"/><rect x="43.3" y="49.2" width="3.0" height="1.4" fill="#4aa0b8"/><rect x="86.2" y="67.5" width="1.7" height="2.4" fill="#a6cc98"/><rect x="80.7" y="64.5" width="1.9" height="1.5" fill="#58b058"/><rect x="74.0" y="70.8" width="2.9" height="3.1" fill="#58b058"/><rect x="46.1" y="57.5" width="1.9" height="1.6" fill="#4aa0b8"/><rect x="4.6" y="78.2" width="1.7" height="3.1" fill="#58b058"/><rect x="17.8" y="50.1" width="1.6" height="3.1" fill="#ec8a9c"/><rect x="40.0" y="92.7" width="2.9" height="2.6" fill="#a6cc98"/><rect x="61.3" y="42.5" width="3.0" height="2.7" fill="#a6cc98"/><rect x="87.3" y="33.0" width="2.2" height="3.0" fill="#58b058"/><rect x="17.8" y="70.1" width="1.8" height="1.3" fill="#58b058"/><rect x="85.7" y="29.9" width="2.7" height="2.1" fill="#58b058"/><rect x="28.6" y="73.3" width="2.9" height="2.3" fill="#a6cc98"/><rect x="14.7" y="32.2" width="2.0" height="2.2" fill="#a6cc98"/><rect x="44.4" y="54.5" width="2.9" height="2.8" fill="#4aa0b8"/><rect x="71.4" y="83.5" width="2.6" height="2.6" fill="#58b058"/><rect x="67.4" y="26.1" width="2.4" height="2.8" fill="#4aa0b8"/><rect x="0.4" y="59.8" width="1.8" height="1.3" fill="#58b058"/><rect x="4.4" y="78.6" width="1.6" height="2.5" fill="#a6cc98"/><rect x="3.4" y="73.9" width="2.2" height="2.0" fill="#a6cc98"/><rect x="64.3" y="38.0" width="2.4" height="1.7" fill="#4aa0b8"/><rect x="7.9" y="45.4" width="2.1" height="2.6" fill="#58b058"/><rect x="33.6" y="4.2" width="1.9" height="3.0" fill="#58b058"/><rect x="88.5" y="43.2" width="1.4" height="1.5" fill="#a6cc98"/><rect x="90.4" y="12.2" width="2.3" height="2.2" fill="#a6cc98"/><rect x="23.0" y="23.9" width="3.0" height="2.6" fill="#a6cc98"/><rect x="92.6" y="12.7" width="1.6" height="2.4" fill="#a6cc98"/><rect x="86.5" y="44.1" width="3.0" height="2.3" fill="#a6cc98"/><rect x="88.3" y="3.6" width="1.7" height="3.1" fill="#a6cc98"/><rect x="20.6" y="76.7" width="2.2" height="1.4" fill="#58b058"/><rect x="65.4" y="76.0" width="1.3" height="2.3" fill="#a6cc98"/><rect x="32.0" y="37.7" width="2.7" height="1.2" fill="#ec8a9c"/><rect x="60.1" y="33.5" width="2.7" height="2.9" fill="#ec8a9c"/><rect x="33.3" y="72.4" width="2.4" height="3.2" fill="#58b058"/><rect x="84.6" y="0.7" width="1.4" height="2.6" fill="#a6cc98"/><rect x="44.8" y="58.0" width="3.0" height="2.7" fill="#a6cc98"/><rect x="38.3" y="30.8" width="2.1" height="3.2" fill="#4aa0b8"/><rect x="34.5" y="59.6" width="2.3" height="3.1" fill="#a6cc98"/><rect x="78.7" y="94.0" width="2.1" height="2.6" fill="#58b058"/><rect x="27.3" y="24.4" width="2.6" height="1.6" fill="#a6cc98"/><rect x="76.4" y="28.9" width="1.3" height="1.2" fill="#4aa0b8"/><rect x="39.8" y="13.5" width="2.2" height="3.1" fill="#a6cc98"/><rect x="45.0" y="65.5" width="2.7" height="1.4" fill="#58b058"/><rect x="30.5" y="0.9" width="3.0" height="1.5" fill="#58b058"/><rect x="19.9" y="13.6" width="3.2" height="2.0" fill="#a6cc98"/><rect x="71.7" y="54.1" width="1.3" height="1.2" fill="#58b058"/><rect x="40.0" y="68.7" width="2.8" height="1.7" fill="#a6cc98"/><rect x="40.3" y="49.7" width="1.7" height="2.8" fill="#ec8a9c"/><rect x="51.9" y="82.6" width="2.5" height="2.9" fill="#a6cc98"/><rect x="57.7" y="22.8" width="2.9" height="1.6" fill="#4aa0b8"/><rect x="50.7" y="69.5" width="2.1" height="1.8" fill="#4aa0b8"/><rect x="65.8" y="85.7" width="1.6" height="1.3" fill="#a6cc98"/><rect x="48.3" y="13.3" width="2.7" height="2.4" fill="#58b058"/><rect x="37.7" y="63.5" width="1.9" height="1.5" fill="#4aa0b8"/><rect x="13.3" y="91.2" width="1.5" height="2.2" fill="#58b058"/><rect x="64.0" y="84.2" width="1.7" height="1.5" fill="#a6cc98"/><rect x="64.4" y="43.0" width="3.0" height="2.5" fill="#4aa0b8"/><rect x="103.6" y="38.7" width="3.0" height="1.4" fill="#a6cc98"/><rect x="71.9" y="48.7" width="1.7" height="2.5" fill="#a6cc98"/><rect x="105.9" y="18.3" width="3.0" height="2.3" fill="#a6cc98"/><rect x="29.3" y="3.4" width="2.0" height="2.0" fill="#58b058"/><rect x="63.5" y="33.8" width="2.1" height="1.6" fill="#58b058"/><rect x="79.8" y="25.9" width="1.2" height="1.5" fill="#a6cc98"/><rect x="57.5" y="30.4" width="2.2" height="1.7" fill="#4aa0b8"/><rect x="6.0" y="8.0" width="1.4" height="2.4" fill="#58b058"/><rect x="42.4" y="68.1" width="2.8" height="2.8" fill="#a6cc98"/><rect x="10.4" y="55.7" width="2.6" height="2.8" fill="#58b058"/><rect x="87.0" y="22.0" width="2.5" height="2.3" fill="#a6cc98"/><rect x="34.7" y="68.5" width="2.4" height="1.4" fill="#4aa0b8"/><rect x="5.4" y="48.8" width="3.1" height="3.0" fill="#58b058"/><rect x="50.8" y="18.8" width="2.2" height="2.2" fill="#a6cc98"/><rect x="85.3" y="10.1" width="2.0" height="2.2" fill="#a6cc98"/><rect x="27.8" y="63.5" width="1.8" height="2.2" fill="#58b058"/><rect x="70.0" y="26.5" width="3.2" height="3.0" fill="#4aa0b8"/><rect x="84.8" y="41.5" width="2.0" height="1.4" fill="#a6cc98"/><rect x="84.5" y="12.8" width="1.3" height="1.5" fill="#a6cc98"/><rect x="58.5" y="79.1" width="1.5" height="2.7" fill="#58b058"/><rect x="46.8" y="32.1" width="1.7" height="3.1" fill="#ec8a9c"/><rect x="40.2" y="35.6" width="2.0" height="1.4" fill="#a6cc98"/><rect x="41.9" y="79.8" width="2.3" height="1.9" fill="#58b058"/><rect x="93.3" y="83.5" width="3.1" height="2.7" fill="#58b058"/><rect x="74.5" y="62.0" width="2.9" height="2.3" fill="#a6cc98"/><rect x="50.1" y="32.2" width="2.8" height="2.9" fill="#58b058"/><rect x="11.0" y="31.1" width="2.8" height="1.7" fill="#a6cc98"/><rect x="96.1" y="54.5" width="2.4" height="2.9" fill="#a6cc98"/><rect x="57.0" y="46.0" width="3.0" height="2.5" fill="#ec8a9c"/><rect x="105.5" y="66.1" width="3.0" height="1.3" fill="#58b058"/><rect x="47.7" y="36.2" width="3.1" height="1.6" fill="#a6cc98"/><rect x="101.6" y="19.7" width="2.2" height="3.0" fill="#a6cc98"/><rect x="102.6" y="53.2" width="2.5" height="2.8" fill="#58b058"/><rect x="46.6" y="57.2" width="1.8" height="2.0" fill="#4aa0b8"/><rect x="56.5" y="44.5" width="1.2" height="1.9" fill="#ec8a9c"/><rect x="28.1" y="49.1" width="2.4" height="3.0" fill="#a6cc98"/><rect x="84.3" y="23.3" width="1.5" height="2.0" fill="#58b058"/><rect x="68.0" y="28.8" width="1.6" height="1.4" fill="#4aa0b8"/><rect x="15.9" y="16.1" width="2.6" height="3.1" fill="#a6cc98"/><rect x="44.4" y="33.6" width="1.9" height="2.6" fill="#4aa0b8"/><rect x="80.9" y="90.2" width="1.9" height="2.9" fill="#58b058"/><rect x="44.3" y="17.3" width="3.0" height="2.8" fill="#a6cc98"/><rect x="54.5" y="34.5" width="1.9" height="2.3" fill="#58b058"/><rect x="59.3" y="26.2" width="2.8" height="1.5" fill="#4aa0b8"/><rect x="75.9" y="2.1" width="1.3" height="2.8" fill="#58b058"/><rect x="16.2" y="21.7" width="1.7" height="2.7" fill="#a6cc98"/><rect x="60.6" y="87.6" width="3.1" height="2.1" fill="#a6cc98"/><rect x="4.2" y="5.3" width="1.2" height="2.6" fill="#58b058"/><rect x="69.3" y="10.7" width="1.6" height="2.4" fill="#58b058"/><rect x="109.4" y="67.1" width="1.6" height="1.5" fill="#58b058"/><rect x="38.6" y="70.0" width="2.3" height="2.6" fill="#4aa0b8"/><rect x="66.1" y="32.0" width="3.1" height="2.9" fill="#a6cc98"/><rect x="100.6" y="53.3" width="1.6" height="2.0" fill="#58b058"/><rect x="86.5" y="48.9" width="2.8" height="2.0" fill="#a6cc98"/><rect x="30.3" y="87.7" width="3.1" height="2.7" fill="#a6cc98"/><rect x="11.3" y="26.3" width="2.9" height="2.1" fill="#a6cc98"/><rect x="104.5" y="44.9" width="2.7" height="1.5" fill="#a6cc98"/><rect x="59.5" y="70.3" width="2.5" height="2.0" fill="#a6cc98"/><rect x="27.4" y="77.4" width="2.2" height="1.4" fill="#a6cc98"/><rect x="93.7" y="84.9" width="2.1" height="2.1" fill="#a6cc98"/><rect x="102.6" y="17.6" width="2.8" height="1.4" fill="#58b058"/>
</g>
<circle cx="32.5" cy="17.5" r="4.3" fill="#4a80e0"/>
<circle cx="90.5" cy="60" r="1.4" fill="#d050c0"/>
<circle cx="33" cy="56" r="1.2" fill="#d88a30"/>
<path d="M0,25.5 L9,27.6 L18,34.6 L24.9,43.6 L29.4,50.4 L34,57.2 L43,66.2 L49.8,68.6 L56.6,77.6 L63.4,84.3 L70,93.5" fill="none" stroke="#c4eef8" stroke-width="1.3"/>
<rect x="0.5" y="0.5" width="109" height="94" fill="none" stroke="#c8d0dc" stroke-width="1"/>
</svg></div>
<div class="thumb" style="left:256px;top:110.7px"><svg viewBox="0 0 110 95" preserveAspectRatio="none">
<rect width="110" height="95" fill="#ebeadf"/>
<path d="M0,0 H110 V30 L80,18 L60,5 Z" fill="#e6ebdc"/>
<path d="M70,70 L110,55 V95 H60 Z" fill="#eee8dd"/>
<g fill="#d8e6c8" opacity="0.8"><ellipse cx="20" cy="4" rx="8" ry="3"/><ellipse cx="85" cy="8" rx="10" ry="4"/><ellipse cx="104" cy="22" rx="5" ry="6"/></g>
<path d="M90,28 L110,12" stroke="#e8b0b0" stroke-width="0.5"/>
<path d="M0,25 L11.3,27 L20.4,34 L27,43 L31.7,54.3 L35,58.8 L43,63.4 L49.8,68 L56.6,74.7 L63.4,81.5 L68,90.5 L70,95 L0,95 Z" fill="#abd3dd"/>
<path d="M0,56.6 Q7,61 13.6,65.6 Q20,70 25,74.7 Q30,80 34,86 L38.5,95" fill="none" stroke="#98bcc8" stroke-width="0.6"/>
<path d="M0,14.7 L4.5,9 L9,6.8 L13.6,11.3 L20.4,13.6 L29.4,13.6 L34,15.8 L36.2,22.6 L35,29.4 L34,36.2 L36.2,45 L38.5,54.3 L35,58.8 L31.7,54.3 L27,43 L20.4,34 L11.3,27 L0,25 Z" fill="#e67ad8"/>
<path d="M43,11.3 L52,6.8 L58.8,13.6 L61,25 L54.3,27 L45,25 Z" fill="#a8e0d4"/>
<path d="M35,29.4 L45,25 L54.3,27 L61,29.4 L65.6,40.7 L70,43 L63.4,49.8 L61,58.8 L58.8,65.6 L49.8,68 L43,63.4 L36.2,58.8 L38.5,54.3 L36.2,45 L34,36.2 Z" fill="#b6e87a"/>
<path d="M54.3,4.5 L63.4,4.5 L65.6,13.6 L70,18 L77,15.8 L86,22.6 L92.8,20.4 L97.3,29.4 L104,34 L108.6,38.5 L106.4,47.5 L97.3,49.8 L95,58.8 L101.8,65.6 L104,72.4 L97.3,74.7 L90.5,68 L83.7,65.6 L77,68 L74.7,74.7 L68,74.7 L65.6,65.6 L63.4,56.6 L61,52 L68,47.5 L74.7,43 L70,36.2 L65.6,34 L63.4,25 L58.8,18 Z" fill="#a9a7e6"/>
<circle cx="96.8" cy="32.8" r="1.5" fill="#9a98d8"/><circle cx="78.0" cy="41.2" r="1.4" fill="#9a98d8"/><circle cx="70.7" cy="24.6" r="1.5" fill="#9a98d8"/><circle cx="77.3" cy="37.8" r="1.3" fill="#9a98d8"/><circle cx="89.6" cy="20.3" r="1.1" fill="#9a98d8"/><circle cx="82.0" cy="44.3" r="1.0" fill="#9a98d8"/><circle cx="86.7" cy="67.8" r="1.1" fill="#9a98d8"/><circle cx="85.4" cy="26.0" r="1.0" fill="#9a98d8"/><circle cx="89.3" cy="25.6" r="1.5" fill="#9a98d8"/><circle cx="97.1" cy="24.8" r="1.6" fill="#9a98d8"/><circle cx="80.0" cy="58.6" r="1.4" fill="#9a98d8"/><circle cx="77.5" cy="53.8" r="1.3" fill="#9a98d8"/><circle cx="93.8" cy="33.3" r="1.4" fill="#9a98d8"/><circle cx="98.8" cy="53.6" r="1.2" fill="#9a98d8"/>
<path d="M58.8,79 L72.4,80 L74,92.8 L62,92.8 Z" fill="#b0e2d2"/>
<path d="M95,70 L104,70 L104,77 L96,77 Z" fill="#b0e2d2"/>
<circle cx="62.7" cy="25.0" r="1.3" fill="#2a5a30"/><circle cx="64.3" cy="25.2" r="0.7" fill="#3a6a58"/><circle cx="66.9" cy="23.7" r="0.8" fill="#4a9a40"/><circle cx="66.0" cy="25.0" r="1.0" fill="#3a6a58"/><circle cx="65.5" cy="23.3" r="0.8" fill="#c8b848"/><circle cx="67.5" cy="24.3" r="1.2" fill="#3a7a38"/><circle cx="61.4" cy="25.9" r="0.7" fill="#3a6a58"/><circle cx="66.5" cy="26.2" r="1.0" fill="#2a5a30"/><circle cx="70.5" cy="35.7" r="1.3" fill="#c8b848"/><circle cx="68.5" cy="35.0" r="1.0" fill="#3a6a58"/><circle cx="72.0" cy="35.7" r="0.7" fill="#3a7a38"/><circle cx="69.0" cy="32.9" r="1.0" fill="#c8b848"/><circle cx="69.9" cy="33.1" r="1.3" fill="#3a6a58"/><circle cx="69.5" cy="34.1" r="1.1" fill="#68b048"/><circle cx="71.7" cy="34.8" r="1.3" fill="#3a7a38"/><circle cx="72.3" cy="34.7" r="1.2" fill="#4a9a40"/><circle cx="98.6" cy="38.9" r="1.1" fill="#3a6a58"/><circle cx="102.9" cy="35.9" r="1.4" fill="#7ab858"/><circle cx="97.9" cy="35.1" r="1.3" fill="#68b048"/><circle cx="105.9" cy="34.8" r="0.7" fill="#7ab858"/><circle cx="104.9" cy="34.2" r="1.2" fill="#68b048"/><circle cx="104.6" cy="34.4" r="1.2" fill="#3a6a58"/><circle cx="99.2" cy="39.3" r="1.3" fill="#3a6a58"/><circle cx="105.8" cy="38.5" r="0.9" fill="#3a7a38"/><circle cx="95.8" cy="39.4" r="1.4" fill="#3a7a38"/><circle cx="105.7" cy="36.6" r="0.8" fill="#2a5a30"/><circle cx="95.5" cy="41.8" r="1.0" fill="#2a5a30"/><circle cx="96.5" cy="41.8" r="1.0" fill="#68b048"/><circle cx="100.7" cy="39.8" r="1.2" fill="#3a6a58"/><circle cx="96.1" cy="42.8" r="1.1" fill="#7ab858"/><circle cx="99.7" cy="40.5" r="1.4" fill="#4a9a40"/><circle cx="99.8" cy="36.3" r="1.1" fill="#2a5a30"/><circle cx="95.1" cy="37.7" r="0.9" fill="#3a6a58"/><circle cx="99.1" cy="39.3" r="0.7" fill="#4a9a40"/><circle cx="101.9" cy="38.2" r="1.3" fill="#c8b848"/><circle cx="85.2" cy="53.6" r="0.7" fill="#68b048"/><circle cx="77.8" cy="59.0" r="0.9" fill="#2a5a30"/><circle cx="83.2" cy="57.9" r="0.8" fill="#2a5a30"/><circle cx="79.5" cy="60.1" r="1.1" fill="#7ab858"/><circle cx="81.1" cy="54.9" r="1.3" fill="#7ab858"/><circle cx="90.1" cy="59.1" r="0.9" fill="#4a9a40"/><circle cx="80.0" cy="60.7" r="0.9" fill="#4a9a40"/><circle cx="86.2" cy="58.6" r="0.8" fill="#3a7a38"/><circle cx="81.3" cy="54.3" r="0.9" fill="#7ab858"/><circle cx="87.9" cy="62.9" r="0.9" fill="#3a7a38"/><circle cx="85.8" cy="61.8" r="0.9" fill="#68b048"/><circle cx="87.6" cy="50.3" r="0.9" fill="#4a9a40"/><circle cx="88.3" cy="57.6" r="0.9" fill="#7ab858"/><circle cx="87.9" cy="58.5" r="1.1" fill="#7ab858"/><circle cx="85.0" cy="55.5" r="1.3" fill="#3a6a58"/><circle cx="80.7" cy="54.5" r="0.9" fill="#68b048"/><circle cx="84.7" cy="50.3" r="0.8" fill="#68b048"/><circle cx="77.1" cy="62.6" r="1.4" fill="#3a6a58"/><circle cx="82.9" cy="62.7" r="0.9" fill="#c8b848"/><circle cx="87.1" cy="61.2" r="1.2" fill="#c8b848"/><circle cx="90.0" cy="57.2" r="1.3" fill="#4a9a40"/><circle cx="88.6" cy="63.0" r="1.3" fill="#3a7a38"/><circle cx="77.6" cy="62.1" r="1.1" fill="#c8b848"/><circle cx="79.7" cy="61.8" r="1.1" fill="#68b048"/><circle cx="77.2" cy="59.9" r="1.1" fill="#4a9a40"/><circle cx="80.2" cy="50.1" r="1.0" fill="#3a6a58"/><circle cx="89.7" cy="58.1" r="0.8" fill="#2a5a30"/><circle cx="90.1" cy="57.2" r="1.2" fill="#7ab858"/><circle cx="81.7" cy="52.5" r="1.3" fill="#3a6a58"/><circle cx="78.6" cy="53.1" r="1.3" fill="#2a5a30"/><circle cx="87.9" cy="61.0" r="1.0" fill="#3a7a38"/><circle cx="84.7" cy="55.2" r="0.9" fill="#7ab858"/><circle cx="80.6" cy="57.0" r="0.7" fill="#68b048"/><circle cx="53.4" cy="76.2" r="0.7" fill="#7ab858"/><circle cx="51.2" cy="65.3" r="1.0" fill="#3a7a38"/><circle cx="50.2" cy="74.5" r="1.1" fill="#3a6a58"/><circle cx="53.3" cy="68.3" r="1.0" fill="#2a5a30"/><circle cx="54.2" cy="68.1" r="0.8" fill="#2a5a30"/><circle cx="53.5" cy="65.3" r="0.7" fill="#3a6a58"/><circle cx="57.9" cy="75.8" r="0.8" fill="#3a6a58"/><circle cx="54.0" cy="72.8" r="1.1" fill="#7ab858"/><circle cx="56.9" cy="64.1" r="0.7" fill="#68b048"/><circle cx="56.8" cy="75.3" r="1.0" fill="#2a5a30"/><circle cx="57.6" cy="70.6" r="0.9" fill="#4a9a40"/><circle cx="52.8" cy="72.6" r="1.0" fill="#7ab858"/><circle cx="54.6" cy="77.1" r="1.0" fill="#2a5a30"/><circle cx="59.9" cy="75.7" r="0.8" fill="#2a5a30"/><circle cx="57.5" cy="78.0" r="1.2" fill="#c8b848"/><circle cx="59.7" cy="75.8" r="0.8" fill="#c8b848"/><circle cx="53.4" cy="71.7" r="1.1" fill="#7ab858"/><circle cx="49.9" cy="65.6" r="1.0" fill="#7ab858"/><circle cx="55.7" cy="72.2" r="1.3" fill="#c8b848"/><circle cx="51.8" cy="63.8" r="1.3" fill="#7ab858"/><circle cx="50.1" cy="65.2" r="1.3" fill="#68b048"/><circle cx="60.5" cy="72.4" r="0.8" fill="#7ab858"/><circle cx="61.0" cy="72.2" r="1.2" fill="#3a6a58"/><circle cx="51.0" cy="75.1" r="0.7" fill="#3a6a58"/><circle cx="53.4" cy="72.2" r="0.8" fill="#7ab858"/><circle cx="61.0" cy="73.5" r="1.1" fill="#68b048"/><circle cx="58.2" cy="69.5" r="1.1" fill="#2a5a30"/><circle cx="60.3" cy="72.1" r="1.0" fill="#3a7a38"/><circle cx="52.4" cy="77.9" r="1.2" fill="#7ab858"/><circle cx="51.6" cy="74.2" r="1.1" fill="#7ab858"/><circle cx="60.1" cy="74.1" r="1.2" fill="#4a9a40"/><circle cx="59.9" cy="65.7" r="1.0" fill="#3a7a38"/><circle cx="37.2" cy="21.6" r="1.1" fill="#68b048"/><circle cx="39.7" cy="15.2" r="0.8" fill="#7ab858"/><circle cx="37.9" cy="17.2" r="1.3" fill="#4a9a40"/><circle cx="37.6" cy="22.5" r="1.2" fill="#c8b848"/><circle cx="36.8" cy="23.3" r="1.4" fill="#3a6a58"/><circle cx="40.0" cy="17.1" r="1.0" fill="#2a5a30"/><circle cx="36.6" cy="15.6" r="0.9" fill="#2a5a30"/><circle cx="37.2" cy="23.4" r="1.4" fill="#68b048"/><circle cx="37.2" cy="20.4" r="1.1" fill="#68b048"/><circle cx="40.0" cy="21.0" r="1.0" fill="#3a7a38"/><circle cx="38.8" cy="23.4" r="1.2" fill="#68b048"/><circle cx="39.9" cy="14.1" r="1.3" fill="#4a9a40"/><circle cx="38.3" cy="22.5" r="1.4" fill="#3a7a38"/><circle cx="39.7" cy="16.4" r="1.2" fill="#4a9a40"/><circle cx="34.9" cy="20.7" r="1.3" fill="#c8b848"/>
<circle cx="92.8" cy="40.7" r="1.8" fill="#4a2840"/>
<rect x="0.5" y="0.5" width="109" height="94" fill="none" stroke="#c8d0dc" stroke-width="1"/>
</svg></div>
<div class="thumb" style="left:372.2px;top:110.7px"><svg viewBox="0 0 110 95" preserveAspectRatio="none">
<rect width="110" height="95" fill="#eceadf"/>
<g fill="#dce8cc" opacity="0.7"><ellipse cx="30" cy="5" rx="12" ry="4"/><ellipse cx="85" cy="8" rx="10" ry="4"/><ellipse cx="100" cy="70" rx="8" ry="6"/></g>
<path d="M0,25 L9,26 L18,31.7 L27,40.7 L31.7,52 L38.5,56.6 L45,63.4 L52,72.4 L58.8,79 L63.4,86 L68,95 L0,95 Z" fill="#abd3dd"/>
<path d="M2.3,56.6 Q8,61 13.6,65.6 Q20,71 27,77 Q32,84 36.2,90.5 L40.7,95" fill="none" stroke="#98bcc8" stroke-width="0.6"/>
<path d="M0,25 L9,26 L18,31.7 L27,40.7 L31.7,52 L38.5,56.6 L45,63.4 L52,72.4 L58.8,79 L63.4,86 L68,95 L70,95 L68,86 L63.4,77 L56.6,67.9 L52,58.8 L45,54.3 L38.5,47.5 L34,36.2 L22.6,27 L11.3,25 Z" fill="#eee68a"/>
<path d="M22.6,27 L34,36.2 L38.5,47.5 L45,54.3 L52,58.8 L48,62 L40,58 L32,48 L28,36 Z" fill="#ece078"/>
<path d="M0,13.6 L15.8,13.6 L20.4,25 L11.3,25 L0,25 Z" fill="#d6ee8a"/>
<path d="M4.5,9 L13.6,9.5 L12.5,14.7 L5,14 Z" fill="#e070d8"/>
<path d="M20.4,15.8 L29.4,12.4 L45,11.3 L52,4.5 L56.6,3.4 L63.4,9 L63.4,18 L68,22.6 L61,29.4 L54.3,36.2 L49.8,43 L38.5,45 L29.4,38.5 L22.6,29.4 L18,22.6 Z" fill="#d86ed0"/>
<path d="M20.4,14 L38.5,13.6 L38.5,29.4 L26,30 L20,22 Z" fill="#a46ac4"/>
<path d="M52,18 L61,18 L57,30 L53,43 L49,42 L52,30 Z" fill="#e8e070"/>
<path d="M63,14 L95,18 L102,40 L98,52 L86,47.5 L74.7,43 L60,36 Z" fill="#dfe4c4"/>
<path d="M45,43 L58.8,38.5 L74.7,43 L86,47.5 L92.8,52 L90.5,61 L77,65.6 L72.4,72.4 L61,72.4 L52,65.6 L47.5,56.6 Z" fill="#e6a6dc"/>
<path d="M58,50 L70,48 L74,58 L68,66 L58,62 Z" fill="#dc78d0"/>
<path d="M83.7,31.7 L90.5,31.7 L90.5,45 L84,45 Z" fill="#f0b048"/>
<path d="M74.7,20.4 L83.7,20.4 L83.7,31.7 L75,31 Z" fill="#a8dcbc"/>
<path d="M97,29.4 L106,29.4 L106,45 L97,45 Z" fill="#ecb8c4"/>
<path d="M86,61 L99.6,62 L99.6,77 L88,76 Z" fill="#a8d888"/>
<rect x="83.4" y="35.7" width="2.5" height="1.7" fill="#70c8b0"/><rect x="97.1" y="22.0" width="2.3" height="1.8" fill="#70c8b0"/><rect x="95.0" y="18.5" width="1.5" height="1.1" fill="#d0e0a0"/><rect x="98.3" y="38.5" width="2.0" height="1.6" fill="#e8a0b8"/><rect x="90.2" y="37.8" width="1.3" height="1.0" fill="#70c8b0"/><rect x="70.1" y="16.3" width="2.4" height="2.0" fill="#d0e0a0"/><rect x="83.8" y="31.3" width="2.3" height="1.8" fill="#e8d060"/><rect x="78.0" y="15.2" width="1.1" height="2.0" fill="#e8a0b8"/><rect x="101.9" y="51.8" width="2.3" height="2.1" fill="#c8e078"/><rect x="93.8" y="34.0" width="1.0" height="1.9" fill="#f0b040"/><rect x="81.6" y="46.3" width="1.6" height="2.5" fill="#d0e0a0"/><rect x="91.3" y="22.9" width="2.5" height="1.1" fill="#e8a0b8"/><rect x="101.3" y="29.7" width="1.1" height="2.0" fill="#d0e0a0"/><rect x="90.9" y="27.5" width="1.5" height="1.0" fill="#e8a0b8"/><rect x="93.8" y="19.4" width="1.4" height="1.2" fill="#f0b040"/><rect x="83.8" y="33.0" width="2.1" height="1.3" fill="#70c8b0"/><rect x="74.5" y="42.1" width="1.2" height="2.0" fill="#f0b040"/><rect x="81.4" y="51.6" width="1.0" height="2.4" fill="#d0e0a0"/><rect x="88.2" y="51.9" width="1.0" height="1.3" fill="#d0e0a0"/><rect x="88.5" y="36.3" width="1.1" height="1.2" fill="#e8a0b8"/><rect x="76.8" y="43.6" width="1.5" height="1.5" fill="#f0b040"/><rect x="70.5" y="22.7" width="2.0" height="1.0" fill="#c8e078"/><rect x="80.6" y="31.8" width="2.5" height="1.8" fill="#70c8b0"/><rect x="72.6" y="29.3" width="2.0" height="1.5" fill="#98d8a8"/><rect x="95.8" y="24.2" width="1.3" height="2.2" fill="#70c8b0"/><rect x="74.7" y="50.2" width="2.4" height="2.0" fill="#e8a0b8"/><rect x="69.6" y="19.0" width="1.8" height="1.4" fill="#e8d060"/><rect x="92.0" y="24.5" width="2.3" height="2.0" fill="#c8e078"/><rect x="85.7" y="49.4" width="2.6" height="1.2" fill="#e8a0b8"/><rect x="87.0" y="46.5" width="2.0" height="1.4" fill="#98d8a8"/><rect x="93.5" y="17.6" width="1.7" height="1.4" fill="#f0b040"/><rect x="74.0" y="28.6" width="1.9" height="1.2" fill="#c8e078"/><rect x="72.7" y="31.7" width="1.5" height="2.2" fill="#70c8b0"/><rect x="87.9" y="20.2" width="1.1" height="1.0" fill="#c8e078"/><rect x="91.8" y="50.6" width="1.0" height="2.0" fill="#e8a0b8"/><rect x="70.3" y="26.5" width="1.2" height="1.1" fill="#e8a0b8"/><rect x="86.6" y="42.3" width="2.4" height="2.2" fill="#e8d060"/><rect x="72.4" y="50.6" width="1.5" height="1.1" fill="#e8a0b8"/><rect x="98.6" y="47.2" width="1.7" height="2.3" fill="#d0e0a0"/><rect x="85.0" y="15.5" width="2.1" height="1.6" fill="#f0b040"/><rect x="88.7" y="18.0" width="2.0" height="2.6" fill="#e8a0b8"/><rect x="92.8" y="29.4" width="2.2" height="1.9" fill="#e8a0b8"/><rect x="83.7" y="35.0" width="1.8" height="1.8" fill="#c8e078"/><rect x="88.4" y="32.8" width="1.4" height="2.1" fill="#e8a0b8"/><rect x="94.5" y="39.4" width="1.8" height="2.4" fill="#c8e078"/><rect x="78.2" y="40.1" width="1.3" height="1.3" fill="#c8e078"/><rect x="90.4" y="31.4" width="2.4" height="1.5" fill="#e8d060"/><rect x="76.5" y="38.5" width="2.3" height="2.2" fill="#98d8a8"/><rect x="97.9" y="29.2" width="1.9" height="1.5" fill="#98d8a8"/><rect x="72.6" y="28.0" width="2.4" height="1.1" fill="#f0b040"/><rect x="100.3" y="25.2" width="1.3" height="1.7" fill="#c8e078"/><rect x="99.5" y="45.7" width="1.6" height="1.8" fill="#e8d060"/><rect x="78.7" y="46.0" width="2.6" height="1.7" fill="#f0b040"/><rect x="96.2" y="25.3" width="2.0" height="2.1" fill="#c8e078"/><rect x="87.4" y="26.4" width="2.3" height="1.0" fill="#98d8a8"/><rect x="81.8" y="22.0" width="2.2" height="1.4" fill="#d0e0a0"/><rect x="72.8" y="16.7" width="2.0" height="1.7" fill="#e8d060"/><rect x="86.2" y="38.7" width="1.6" height="1.1" fill="#98d8a8"/><rect x="74.8" y="32.6" width="1.3" height="1.0" fill="#e8a0b8"/><rect x="86.2" y="16.3" width="1.4" height="2.2" fill="#70c8b0"/><rect x="91.7" y="34.3" width="2.0" height="2.2" fill="#e8a0b8"/><rect x="96.9" y="40.9" width="1.4" height="1.7" fill="#e8d060"/><rect x="81.2" y="31.7" width="1.3" height="2.4" fill="#f0b040"/><rect x="80.8" y="36.0" width="2.4" height="2.3" fill="#c8e078"/><rect x="83.8" y="39.1" width="1.3" height="2.2" fill="#d0e0a0"/><rect x="95.1" y="49.2" width="1.2" height="1.4" fill="#e8a0b8"/><rect x="101.3" y="51.2" width="1.9" height="2.3" fill="#c8e078"/><rect x="76.9" y="41.6" width="1.0" height="1.8" fill="#f0b040"/><rect x="83.0" y="35.4" width="2.2" height="1.8" fill="#f0b040"/><rect x="75.4" y="47.1" width="1.7" height="1.1" fill="#70c8b0"/><rect x="79.4" y="44.2" width="1.2" height="1.2" fill="#70c8b0"/><rect x="98.6" y="34.2" width="2.1" height="1.7" fill="#e8a0b8"/><rect x="87.7" y="40.5" width="2.2" height="1.7" fill="#70c8b0"/><rect x="77.9" y="42.0" width="2.0" height="1.8" fill="#d0e0a0"/><rect x="98.8" y="24.5" width="2.1" height="2.5" fill="#d0e0a0"/><rect x="98.6" y="22.7" width="2.4" height="2.5" fill="#70c8b0"/><rect x="77.3" y="33.4" width="1.7" height="1.2" fill="#f0b040"/><rect x="88.6" y="16.0" width="2.6" height="1.8" fill="#e8a0b8"/><rect x="86.5" y="51.6" width="1.2" height="1.1" fill="#98d8a8"/><rect x="70.2" y="34.9" width="1.7" height="2.5" fill="#e8a0b8"/><rect x="77.2" y="32.5" width="1.2" height="1.7" fill="#d0e0a0"/><rect x="99.8" y="49.0" width="1.8" height="1.2" fill="#e8a0b8"/><rect x="89.0" y="49.2" width="1.2" height="2.2" fill="#f0b040"/><rect x="69.2" y="20.8" width="1.0" height="1.5" fill="#e8d060"/><rect x="80.1" y="37.9" width="1.2" height="2.2" fill="#f0b040"/><rect x="97.0" y="38.1" width="2.1" height="2.1" fill="#e8a0b8"/><rect x="68.8" y="38.4" width="2.3" height="2.0" fill="#70c8b0"/><rect x="74.9" y="38.4" width="2.0" height="1.8" fill="#d0e0a0"/><rect x="86.5" y="36.7" width="1.2" height="2.5" fill="#e8d060"/><rect x="95.6" y="48.4" width="1.5" height="1.5" fill="#98d8a8"/><rect x="55.3" y="71.9" width="2.2" height="1.2" fill="#d890d8"/><rect x="51.2" y="42.8" width="1.5" height="1.6" fill="#c070d0"/><rect x="70.5" y="62.6" width="1.3" height="1.9" fill="#e070d0"/><rect x="49.5" y="58.2" width="1.5" height="2.1" fill="#f0b0e0"/><rect x="50.4" y="56.2" width="2.1" height="1.7" fill="#d890d8"/><rect x="82.7" y="55.4" width="1.0" height="2.1" fill="#c070d0"/><rect x="51.9" y="45.9" width="1.3" height="2.2" fill="#f0b0e0"/><rect x="88.6" y="43.0" width="1.1" height="2.3" fill="#c070d0"/><rect x="48.6" y="43.1" width="1.5" height="1.6" fill="#f0b0e0"/><rect x="65.2" y="59.2" width="1.0" height="2.0" fill="#d890d8"/><rect x="53.5" y="54.5" width="2.0" height="1.6" fill="#d890d8"/><rect x="73.4" y="43.0" width="2.1" height="1.5" fill="#e070d0"/><rect x="82.7" y="62.5" width="2.2" height="1.9" fill="#c070d0"/><rect x="71.8" y="46.1" width="1.8" height="1.5" fill="#f0b0e0"/><rect x="58.1" y="43.7" width="2.0" height="1.2" fill="#c070d0"/><rect x="51.3" y="50.6" width="1.8" height="1.5" fill="#c070d0"/><rect x="81.0" y="53.0" width="2.0" height="1.1" fill="#f0b0e0"/><rect x="59.2" y="43.2" width="2.2" height="2.4" fill="#e070d0"/><rect x="55.9" y="70.2" width="1.9" height="1.5" fill="#c070d0"/><rect x="71.8" y="57.1" width="1.5" height="2.4" fill="#d890d8"/><rect x="78.0" y="64.4" width="2.4" height="1.0" fill="#e070d0"/><rect x="79.7" y="48.2" width="1.6" height="1.1" fill="#d890d8"/><rect x="75.5" y="40.3" width="1.4" height="1.4" fill="#f0b0e0"/><rect x="70.9" y="56.3" width="2.4" height="1.8" fill="#e070d0"/><rect x="75.0" y="65.9" width="1.1" height="1.8" fill="#e070d0"/><rect x="63.2" y="70.0" width="1.5" height="2.4" fill="#c070d0"/><rect x="70.5" y="59.1" width="1.6" height="1.7" fill="#f0b0e0"/><rect x="69.8" y="59.1" width="1.5" height="1.4" fill="#f0b0e0"/><rect x="71.4" y="49.1" width="2.0" height="1.4" fill="#e070d0"/><rect x="81.3" y="58.7" width="1.9" height="1.6" fill="#c070d0"/><rect x="47.5" y="50.1" width="1.6" height="1.8" fill="#f0b0e0"/><rect x="48.5" y="69.0" width="1.6" height="1.7" fill="#d890d8"/><rect x="47.1" y="43.2" width="2.1" height="2.3" fill="#d890d8"/><rect x="91.0" y="66.1" width="1.8" height="1.2" fill="#c070d0"/><rect x="66.4" y="46.5" width="1.1" height="1.7" fill="#e070d0"/><rect x="62.1" y="44.5" width="1.6" height="1.8" fill="#c070d0"/><rect x="62.1" y="63.8" width="2.1" height="1.2" fill="#f0b0e0"/><rect x="79.5" y="47.6" width="1.2" height="2.2" fill="#f0b0e0"/><rect x="57.9" y="59.5" width="2.0" height="2.0" fill="#d890d8"/><rect x="74.8" y="64.1" width="1.3" height="1.3" fill="#d890d8"/><rect x="86.3" y="41.3" width="1.1" height="1.4" fill="#c070d0"/><rect x="46.3" y="41.2" width="1.3" height="1.4" fill="#e070d0"/><rect x="87.9" y="45.1" width="1.3" height="2.4" fill="#c070d0"/><rect x="67.5" y="46.7" width="1.5" height="2.0" fill="#e070d0"/><rect x="82.7" y="54.3" width="2.2" height="2.2" fill="#d890d8"/><rect x="65.9" y="63.9" width="1.5" height="1.2" fill="#d890d8"/><rect x="75.7" y="71.7" width="1.5" height="1.8" fill="#d890d8"/><rect x="65.1" y="51.8" width="1.1" height="2.2" fill="#e070d0"/><rect x="70.6" y="53.8" width="1.8" height="2.1" fill="#c070d0"/><rect x="59.0" y="64.8" width="1.1" height="1.3" fill="#e070d0"/><rect x="77.7" y="55.8" width="2.1" height="1.5" fill="#d890d8"/><rect x="55.3" y="61.0" width="1.5" height="2.3" fill="#f0b0e0"/><rect x="78.3" y="58.2" width="2.3" height="2.3" fill="#f0b0e0"/><rect x="65.6" y="65.7" width="1.4" height="1.4" fill="#c070d0"/><rect x="90.5" y="63.4" width="1.7" height="1.1" fill="#f0b0e0"/><rect x="46.1" y="61.7" width="1.8" height="2.1" fill="#f0b0e0"/><rect x="82.5" y="57.3" width="2.2" height="1.8" fill="#d890d8"/><rect x="49.2" y="54.5" width="2.2" height="2.1" fill="#d890d8"/><rect x="69.2" y="57.4" width="1.8" height="2.4" fill="#c070d0"/><rect x="48.0" y="57.5" width="2.1" height="1.1" fill="#e070d0"/><rect x="32.0" y="9.2" width="1.4" height="1.0" fill="#e080e0"/><rect x="24.3" y="37.7" width="1.6" height="2.0" fill="#f090d8"/><rect x="53.7" y="25.9" width="2.1" height="1.6" fill="#a068c0"/><rect x="55.5" y="18.3" width="1.2" height="1.7" fill="#c050c8"/><rect x="51.2" y="41.6" width="1.6" height="2.2" fill="#a068c0"/><rect x="57.6" y="37.2" width="2.2" height="2.2" fill="#c050c8"/><rect x="43.0" y="33.4" width="2.1" height="1.6" fill="#f090d8"/><rect x="60.3" y="14.8" width="1.2" height="1.9" fill="#e080e0"/><rect x="34.1" y="20.6" width="1.7" height="1.4" fill="#c050c8"/><rect x="40.7" y="34.2" width="1.4" height="1.2" fill="#e080e0"/><rect x="60.1" y="35.1" width="1.0" height="1.7" fill="#c050c8"/><rect x="33.8" y="12.9" width="1.5" height="1.8" fill="#f090d8"/><rect x="46.2" y="14.0" width="1.3" height="1.4" fill="#e080e0"/><rect x="60.1" y="42.5" width="1.9" height="2.3" fill="#f090d8"/><rect x="57.5" y="24.4" width="1.6" height="2.3" fill="#c050c8"/><rect x="41.2" y="13.8" width="1.1" height="2.3" fill="#f090d8"/><rect x="62.9" y="36.8" width="2.1" height="2.1" fill="#c050c8"/><rect x="48.9" y="14.5" width="1.0" height="1.7" fill="#a068c0"/><rect x="39.8" y="14.9" width="1.6" height="2.2" fill="#f090d8"/><rect x="26.9" y="17.9" width="1.4" height="2.2" fill="#e080e0"/><rect x="48.0" y="44.7" width="1.4" height="1.7" fill="#e080e0"/><rect x="45.2" y="12.1" width="1.3" height="2.3" fill="#e080e0"/><rect x="56.2" y="8.3" width="1.4" height="2.0" fill="#c050c8"/><rect x="59.1" y="32.7" width="1.1" height="2.0" fill="#a068c0"/><rect x="20.8" y="12.5" width="1.3" height="2.0" fill="#f090d8"/><rect x="29.2" y="26.7" width="1.7" height="1.2" fill="#a068c0"/><rect x="33.9" y="21.2" width="1.8" height="2.4" fill="#c050c8"/><rect x="35.8" y="32.5" width="1.1" height="1.6" fill="#f090d8"/><rect x="52.9" y="36.4" width="1.2" height="1.6" fill="#f090d8"/><rect x="51.3" y="24.0" width="1.4" height="1.2" fill="#c050c8"/><rect x="57.7" y="38.8" width="2.0" height="2.3" fill="#e080e0"/><rect x="32.8" y="20.0" width="1.8" height="1.4" fill="#a068c0"/><rect x="53.2" y="27.2" width="1.1" height="1.3" fill="#f090d8"/><rect x="52.2" y="18.2" width="2.3" height="1.8" fill="#a068c0"/><rect x="39.7" y="20.3" width="1.1" height="1.9" fill="#e080e0"/><rect x="49.8" y="33.3" width="1.3" height="1.6" fill="#f090d8"/><rect x="46.1" y="8.6" width="1.3" height="1.2" fill="#c050c8"/><rect x="39.1" y="35.8" width="1.5" height="2.2" fill="#e080e0"/><rect x="48.5" y="35.7" width="2.1" height="1.5" fill="#a068c0"/><rect x="60.5" y="29.9" width="2.0" height="1.9" fill="#a068c0"/><rect x="63.2" y="36.6" width="1.9" height="1.9" fill="#c050c8"/><rect x="31.5" y="12.6" width="1.4" height="1.6" fill="#f090d8"/><rect x="29.0" y="18.3" width="1.4" height="1.1" fill="#e080e0"/><rect x="31.2" y="26.6" width="1.4" height="1.3" fill="#e080e0"/><rect x="45.3" y="12.9" width="2.3" height="2.4" fill="#e080e0"/><rect x="45.0" y="6.1" width="1.9" height="2.1" fill="#e080e0"/><rect x="30.8" y="28.1" width="2.0" height="1.5" fill="#a068c0"/><rect x="31.7" y="40.3" width="1.6" height="2.0" fill="#e080e0"/><rect x="59.8" y="26.7" width="1.8" height="1.8" fill="#a068c0"/><rect x="27.4" y="34.8" width="2.3" height="1.5" fill="#e080e0"/><rect x="25.4" y="38.0" width="1.4" height="2.3" fill="#e080e0"/><rect x="53.4" y="19.5" width="1.2" height="1.8" fill="#c050c8"/><rect x="40.0" y="21.1" width="2.1" height="2.3" fill="#e080e0"/><rect x="33.5" y="31.8" width="2.0" height="1.5" fill="#c050c8"/><rect x="27.0" y="21.5" width="1.0" height="1.7" fill="#c050c8"/><rect x="45.1" y="11.9" width="1.7" height="1.4" fill="#a068c0"/><rect x="22.4" y="36.4" width="2.0" height="2.1" fill="#f090d8"/><rect x="62.2" y="29.0" width="1.7" height="1.6" fill="#f090d8"/><rect x="53.1" y="24.4" width="2.4" height="2.2" fill="#f090d8"/><rect x="56.3" y="9.7" width="1.2" height="2.3" fill="#a068c0"/>
<circle cx="90.5" cy="21.5" r="2" fill="#f0a838"/>
<circle cx="32.8" cy="18.1" r="4" fill="#40a0e8"/>
<circle cx="65.6" cy="57.7" r="1.6" fill="#50a8e8"/>
<rect x="0.5" y="0.5" width="109" height="94" fill="none" stroke="#a8b6c6" stroke-width="1"/>
</svg></div>
<div class="thumb" style="left:489px;top:110.7px"><svg viewBox="0 0 110 95" preserveAspectRatio="none">
<rect width="110" height="95" fill="#6a6e56"/>
<rect x="68.5" y="70.5" width="4.1" height="4.5" fill="#58704c"/><rect x="71.7" y="50.4" width="3.4" height="4.8" fill="#58704c"/><rect x="71.4" y="85.6" width="3.1" height="4.6" fill="#5e6a4e"/><rect x="41.9" y="9.7" width="2.0" height="2.7" fill="#7a7a62"/><rect x="30.7" y="87.1" width="3.2" height="4.3" fill="#58704c"/><rect x="7.9" y="58.7" width="2.4" height="2.0" fill="#4e6048"/><rect x="95.9" y="19.9" width="4.9" height="2.5" fill="#7a7a62"/><rect x="18.3" y="29.8" width="3.6" height="4.0" fill="#7a7a62"/><rect x="22.5" y="89.4" width="2.6" height="4.9" fill="#8c8a78"/><rect x="42.2" y="2.0" width="2.5" height="2.4" fill="#4e6048"/><rect x="7.2" y="28.6" width="3.8" height="3.8" fill="#6a725a"/><rect x="77.8" y="6.3" width="4.5" height="3.4" fill="#8a8470"/><rect x="34.7" y="45.7" width="2.5" height="2.8" fill="#8c8a78"/><rect x="103.3" y="90.2" width="4.5" height="2.1" fill="#8a8470"/><rect x="86.7" y="34.8" width="4.5" height="3.4" fill="#6a725a"/><rect x="77.9" y="59.3" width="2.4" height="2.7" fill="#7a7a62"/><rect x="90.1" y="43.9" width="3.1" height="3.6" fill="#6a725a"/><rect x="85.3" y="10.3" width="4.3" height="3.1" fill="#8c8a78"/><rect x="32.5" y="41.1" width="2.6" height="3.5" fill="#5e6a4e"/><rect x="39.9" y="14.1" width="4.8" height="3.6" fill="#8a8470"/><rect x="34.4" y="30.1" width="4.4" height="3.9" fill="#7a7a62"/><rect x="79.3" y="29.4" width="2.5" height="2.1" fill="#4e6048"/><rect x="108.5" y="50.7" width="2.1" height="4.2" fill="#4e6048"/><rect x="37.8" y="23.8" width="3.3" height="2.2" fill="#8c8a78"/><rect x="100.8" y="3.1" width="3.0" height="2.6" fill="#4e6048"/><rect x="107.9" y="53.6" width="3.9" height="4.4" fill="#7a7a62"/><rect x="11.7" y="41.3" width="2.2" height="3.3" fill="#7a7a62"/><rect x="15.5" y="87.6" width="4.6" height="4.9" fill="#6a725a"/><rect x="49.9" y="46.4" width="3.0" height="2.8" fill="#8c8a78"/><rect x="51.7" y="85.7" width="3.1" height="5.0" fill="#5e6a4e"/><rect x="105.6" y="59.6" width="4.6" height="2.5" fill="#4e6048"/><rect x="54.1" y="48.9" width="4.6" height="3.1" fill="#6a725a"/><rect x="86.5" y="73.6" width="3.8" height="2.1" fill="#8c8a78"/><rect x="33.6" y="53.1" width="2.8" height="3.5" fill="#8c8a78"/><rect x="84.7" y="65.6" width="4.9" height="3.0" fill="#8a8470"/><rect x="19.7" y="80.9" width="3.6" height="2.8" fill="#4e6048"/><rect x="73.9" y="44.0" width="3.5" height="4.0" fill="#58704c"/><rect x="39.2" y="26.0" width="4.2" height="4.5" fill="#8a8470"/><rect x="38.5" y="80.1" width="4.6" height="3.3" fill="#58704c"/><rect x="40.1" y="31.8" width="3.6" height="2.5" fill="#7a7a62"/><rect x="92.0" y="89.1" width="2.8" height="2.2" fill="#4e6048"/><rect x="73.8" y="39.6" width="4.3" height="3.7" fill="#6a725a"/><rect x="73.2" y="40.0" width="3.7" height="4.6" fill="#6a725a"/><rect x="29.8" y="94.6" width="2.5" height="3.3" fill="#7a7a62"/><rect x="71.5" y="20.8" width="2.5" height="4.2" fill="#8c8a78"/><rect x="108.5" y="93.1" width="2.2" height="2.4" fill="#7a7a62"/><rect x="34.9" y="17.2" width="3.6" height="3.2" fill="#7a7a62"/><rect x="38.6" y="62.9" width="3.8" height="2.7" fill="#5e6a4e"/><rect x="99.4" y="0.1" width="4.9" height="4.6" fill="#4e6048"/><rect x="95.3" y="65.4" width="3.1" height="2.1" fill="#6a725a"/><rect x="67.5" y="9.0" width="3.5" height="4.9" fill="#6a725a"/><rect x="32.3" y="33.4" width="3.3" height="4.4" fill="#7a7a62"/><rect x="70.7" y="35.1" width="2.5" height="3.1" fill="#7a7a62"/><rect x="52.5" y="18.9" width="3.8" height="3.1" fill="#7a7a62"/><rect x="98.3" y="0.1" width="3.0" height="4.7" fill="#5e6a4e"/><rect x="59.3" y="30.9" width="3.1" height="3.3" fill="#6a725a"/><rect x="24.9" y="27.7" width="3.1" height="4.9" fill="#8c8a78"/><rect x="100.5" y="56.6" width="4.2" height="2.9" fill="#8a8470"/><rect x="27.6" y="1.9" width="3.5" height="2.9" fill="#8a8470"/><rect x="52.5" y="11.6" width="4.9" height="2.7" fill="#6a725a"/><rect x="4.4" y="13.0" width="2.0" height="3.6" fill="#4e6048"/><rect x="30.1" y="88.8" width="2.1" height="3.5" fill="#58704c"/><rect x="92.8" y="68.5" width="2.9" height="3.8" fill="#8a8470"/><rect x="52.2" y="61.3" width="4.6" height="4.7" fill="#6a725a"/><rect x="1.8" y="12.0" width="3.6" height="3.0" fill="#8a8470"/><rect x="32.7" y="50.3" width="3.0" height="4.0" fill="#4e6048"/><rect x="89.4" y="12.6" width="2.8" height="3.4" fill="#5e6a4e"/><rect x="100.8" y="84.4" width="2.6" height="3.3" fill="#6a725a"/><rect x="88.8" y="56.5" width="4.1" height="3.9" fill="#8c8a78"/><rect x="53.0" y="86.6" width="3.4" height="4.0" fill="#4e6048"/><rect x="79.2" y="85.4" width="4.5" height="2.2" fill="#4e6048"/><rect x="92.0" y="66.0" width="3.7" height="3.9" fill="#4e6048"/><rect x="52.0" y="29.5" width="3.4" height="3.6" fill="#7a7a62"/><rect x="54.7" y="31.4" width="3.3" height="3.6" fill="#7a7a62"/><rect x="5.3" y="69.6" width="4.5" height="4.4" fill="#8a8470"/><rect x="73.0" y="2.4" width="3.3" height="2.2" fill="#8c8a78"/><rect x="44.6" y="46.2" width="4.5" height="2.7" fill="#5e6a4e"/><rect x="71.0" y="90.5" width="4.7" height="5.0" fill="#8c8a78"/><rect x="77.6" y="41.6" width="3.8" height="3.2" fill="#7a7a62"/><rect x="17.7" y="59.1" width="3.7" height="4.0" fill="#5e6a4e"/><rect x="82.0" y="26.6" width="3.7" height="4.2" fill="#6a725a"/><rect x="96.6" y="12.8" width="2.3" height="4.1" fill="#4e6048"/><rect x="53.8" y="33.6" width="3.1" height="2.2" fill="#8c8a78"/><rect x="76.7" y="14.4" width="4.0" height="2.9" fill="#8c8a78"/><rect x="103.6" y="52.2" width="2.8" height="3.7" fill="#7a7a62"/><rect x="28.0" y="71.3" width="4.9" height="4.4" fill="#6a725a"/><rect x="95.0" y="43.1" width="2.5" height="4.1" fill="#4e6048"/><rect x="72.1" y="8.1" width="2.1" height="4.6" fill="#8c8a78"/><rect x="55.7" y="43.1" width="4.6" height="3.4" fill="#4e6048"/><rect x="35.6" y="75.7" width="3.6" height="3.2" fill="#5e6a4e"/><rect x="93.3" y="89.7" width="4.0" height="2.7" fill="#4e6048"/><rect x="12.8" y="92.4" width="3.5" height="2.6" fill="#8c8a78"/><rect x="77.2" y="35.7" width="2.7" height="3.0" fill="#58704c"/><rect x="67.5" y="33.1" width="3.1" height="4.2" fill="#4e6048"/><rect x="39.4" y="28.1" width="3.3" height="4.6" fill="#8c8a78"/><rect x="56.9" y="56.3" width="2.6" height="2.5" fill="#6a725a"/><rect x="7.0" y="3.5" width="2.6" height="2.1" fill="#7a7a62"/><rect x="97.8" y="45.7" width="3.0" height="3.3" fill="#58704c"/><rect x="33.1" y="88.8" width="3.0" height="3.4" fill="#4e6048"/><rect x="21.1" y="62.1" width="3.1" height="3.2" fill="#5e6a4e"/><rect x="96.8" y="14.5" width="2.3" height="4.5" fill="#8a8470"/><rect x="82.5" y="63.8" width="3.4" height="2.1" fill="#5e6a4e"/><rect x="101.7" y="35.1" width="4.1" height="4.0" fill="#5e6a4e"/><rect x="51.9" y="89.8" width="4.4" height="3.0" fill="#5e6a4e"/><rect x="49.9" y="22.8" width="2.1" height="4.1" fill="#7a7a62"/><rect x="63.2" y="62.4" width="3.2" height="4.9" fill="#6a725a"/><rect x="40.1" y="29.6" width="3.1" height="2.2" fill="#4e6048"/><rect x="109.3" y="44.5" width="2.7" height="4.0" fill="#58704c"/><rect x="103.5" y="61.4" width="4.2" height="2.8" fill="#4e6048"/><rect x="50.8" y="43.0" width="3.2" height="2.1" fill="#8c8a78"/><rect x="60.3" y="94.0" width="3.7" height="4.8" fill="#6a725a"/><rect x="78.8" y="22.5" width="3.5" height="4.8" fill="#58704c"/><rect x="5.9" y="23.1" width="3.5" height="4.3" fill="#5e6a4e"/><rect x="5.3" y="79.2" width="2.9" height="2.2" fill="#4e6048"/><rect x="4.1" y="92.3" width="4.1" height="3.9" fill="#7a7a62"/><rect x="20.7" y="22.2" width="4.4" height="2.3" fill="#8a8470"/><rect x="108.4" y="15.4" width="4.6" height="2.6" fill="#5e6a4e"/><rect x="1.9" y="51.3" width="3.3" height="4.3" fill="#4e6048"/><rect x="57.5" y="12.6" width="4.7" height="2.9" fill="#5e6a4e"/><rect x="49.4" y="78.5" width="3.7" height="2.4" fill="#7a7a62"/><rect x="53.2" y="74.1" width="4.5" height="2.9" fill="#8a8470"/><rect x="14.3" y="7.8" width="4.1" height="4.4" fill="#7a7a62"/><rect x="106.5" y="63.3" width="2.2" height="4.1" fill="#8a8470"/><rect x="5.3" y="19.0" width="4.6" height="4.7" fill="#8a8470"/><rect x="7.9" y="73.1" width="4.3" height="3.7" fill="#4e6048"/><rect x="98.6" y="62.1" width="2.4" height="2.1" fill="#58704c"/><rect x="15.8" y="65.3" width="4.9" height="4.2" fill="#58704c"/><rect x="77.1" y="25.4" width="4.4" height="3.7" fill="#58704c"/><rect x="35.3" y="29.1" width="2.8" height="4.0" fill="#7a7a62"/><rect x="31.4" y="6.0" width="4.2" height="2.1" fill="#58704c"/><rect x="13.4" y="92.1" width="3.1" height="4.6" fill="#58704c"/><rect x="104.4" y="58.1" width="3.6" height="2.4" fill="#7a7a62"/><rect x="22.1" y="34.0" width="3.8" height="4.5" fill="#7a7a62"/><rect x="80.0" y="9.1" width="3.8" height="3.9" fill="#6a725a"/><rect x="15.8" y="72.6" width="4.4" height="2.4" fill="#4e6048"/><rect x="34.9" y="86.9" width="3.8" height="2.5" fill="#4e6048"/><rect x="5.3" y="63.5" width="3.6" height="4.9" fill="#7a7a62"/><rect x="65.6" y="9.8" width="4.6" height="4.1" fill="#58704c"/><rect x="22.8" y="0.1" width="2.7" height="4.1" fill="#6a725a"/><rect x="39.0" y="44.1" width="2.8" height="2.6" fill="#7a7a62"/><rect x="61.9" y="33.9" width="4.4" height="3.1" fill="#58704c"/><rect x="89.0" y="77.4" width="4.5" height="4.5" fill="#8c8a78"/><rect x="68.0" y="38.1" width="2.4" height="2.7" fill="#7a7a62"/><rect x="42.0" y="8.9" width="2.3" height="4.2" fill="#4e6048"/><rect x="99.0" y="18.9" width="4.3" height="3.4" fill="#58704c"/><rect x="51.7" y="50.7" width="4.4" height="3.1" fill="#5e6a4e"/><rect x="1.1" y="48.6" width="3.9" height="4.4" fill="#6a725a"/><rect x="2.4" y="64.4" width="2.9" height="3.1" fill="#6a725a"/><rect x="52.4" y="66.8" width="3.3" height="4.4" fill="#4e6048"/><rect x="63.7" y="88.8" width="4.0" height="3.6" fill="#6a725a"/><rect x="87.9" y="34.5" width="2.1" height="4.3" fill="#6a725a"/><rect x="22.7" y="27.2" width="2.3" height="3.1" fill="#5e6a4e"/><rect x="63.8" y="72.2" width="3.2" height="4.9" fill="#8c8a78"/><rect x="1.6" y="88.3" width="2.2" height="4.3" fill="#7a7a62"/><rect x="73.7" y="90.9" width="4.1" height="4.5" fill="#8a8470"/><rect x="81.2" y="58.0" width="3.4" height="2.3" fill="#7a7a62"/><rect x="13.3" y="32.5" width="3.6" height="3.2" fill="#58704c"/><rect x="0.3" y="37.1" width="4.3" height="3.6" fill="#7a7a62"/><rect x="22.8" y="64.4" width="3.2" height="2.3" fill="#8a8470"/><rect x="75.8" y="52.6" width="5.0" height="2.7" fill="#8c8a78"/><rect x="11.0" y="27.9" width="2.8" height="3.9" fill="#58704c"/><rect x="98.7" y="15.9" width="3.2" height="2.6" fill="#8c8a78"/><rect x="72.1" y="54.1" width="4.5" height="4.6" fill="#8c8a78"/><rect x="80.1" y="39.6" width="3.4" height="3.8" fill="#4e6048"/><rect x="26.9" y="39.7" width="3.8" height="4.9" fill="#5e6a4e"/><rect x="20.6" y="2.9" width="2.9" height="3.7" fill="#5e6a4e"/><rect x="62.0" y="41.2" width="3.8" height="3.9" fill="#8a8470"/><rect x="75.9" y="69.2" width="4.9" height="2.4" fill="#5e6a4e"/><rect x="57.1" y="6.9" width="4.6" height="3.9" fill="#7a7a62"/><rect x="101.9" y="21.8" width="3.8" height="4.4" fill="#8c8a78"/><rect x="92.4" y="0.2" width="2.5" height="2.3" fill="#8c8a78"/><rect x="16.7" y="58.5" width="3.7" height="3.3" fill="#5e6a4e"/><rect x="35.5" y="73.1" width="4.1" height="4.8" fill="#7a7a62"/><rect x="105.3" y="59.4" width="2.3" height="2.3" fill="#58704c"/><rect x="7.1" y="19.6" width="2.5" height="4.7" fill="#8a8470"/><rect x="108.7" y="72.7" width="3.2" height="3.6" fill="#7a7a62"/><rect x="41.3" y="11.2" width="4.9" height="2.4" fill="#6a725a"/><rect x="0.4" y="36.2" width="4.8" height="2.2" fill="#8a8470"/><rect x="83.6" y="68.5" width="2.0" height="4.4" fill="#8a8470"/><rect x="109.9" y="71.3" width="4.8" height="3.1" fill="#7a7a62"/><rect x="32.0" y="47.4" width="4.3" height="2.3" fill="#8c8a78"/><rect x="12.1" y="38.8" width="2.2" height="3.3" fill="#58704c"/><rect x="24.2" y="93.7" width="4.0" height="2.2" fill="#8a8470"/><rect x="29.8" y="9.1" width="3.3" height="2.5" fill="#4e6048"/><rect x="92.8" y="81.3" width="2.3" height="3.1" fill="#7a7a62"/><rect x="89.2" y="0.5" width="2.4" height="4.4" fill="#58704c"/><rect x="2.3" y="53.4" width="4.6" height="2.2" fill="#4e6048"/><rect x="106.9" y="18.4" width="3.3" height="3.4" fill="#58704c"/><rect x="9.4" y="26.5" width="4.1" height="3.5" fill="#58704c"/><rect x="5.8" y="37.3" width="3.5" height="4.6" fill="#58704c"/><rect x="103.4" y="62.8" width="3.9" height="2.1" fill="#6a725a"/><rect x="2.6" y="73.1" width="4.4" height="4.5" fill="#4e6048"/><rect x="47.6" y="85.3" width="5.0" height="4.3" fill="#5e6a4e"/><rect x="98.1" y="14.1" width="2.6" height="4.5" fill="#58704c"/><rect x="8.4" y="35.1" width="3.3" height="2.8" fill="#4e6048"/><rect x="51.7" y="27.2" width="3.9" height="4.3" fill="#8c8a78"/><rect x="83.4" y="7.3" width="3.1" height="4.7" fill="#8c8a78"/><rect x="97.4" y="18.7" width="4.2" height="3.5" fill="#5e6a4e"/><rect x="34.9" y="43.5" width="2.7" height="4.8" fill="#4e6048"/><rect x="103.1" y="3.0" width="4.4" height="2.3" fill="#7a7a62"/><rect x="14.4" y="62.1" width="4.3" height="2.5" fill="#8a8470"/><rect x="57.0" y="92.6" width="3.7" height="2.9" fill="#8c8a78"/><rect x="11.6" y="37.9" width="3.1" height="3.4" fill="#8a8470"/><rect x="64.0" y="91.8" width="4.9" height="2.4" fill="#7a7a62"/><rect x="1.9" y="1.2" width="2.4" height="3.4" fill="#4e6048"/><rect x="77.6" y="0.8" width="2.6" height="2.7" fill="#58704c"/><rect x="78.8" y="22.4" width="2.2" height="3.5" fill="#8a8470"/><rect x="4.2" y="36.6" width="4.3" height="3.7" fill="#8a8470"/><rect x="48.4" y="9.7" width="4.8" height="3.1" fill="#5e6a4e"/><rect x="58.3" y="67.8" width="4.8" height="5.0" fill="#6a725a"/><rect x="33.2" y="15.8" width="2.2" height="3.3" fill="#8c8a78"/><rect x="81.0" y="50.2" width="2.3" height="3.5" fill="#4e6048"/><rect x="89.9" y="35.4" width="2.4" height="3.1" fill="#4e6048"/><rect x="54.4" y="53.8" width="3.7" height="2.1" fill="#7a7a62"/><rect x="81.6" y="11.1" width="3.1" height="3.0" fill="#7a7a62"/><rect x="89.7" y="46.0" width="4.2" height="2.8" fill="#7a7a62"/><rect x="91.2" y="59.4" width="2.5" height="4.4" fill="#4e6048"/><rect x="77.2" y="56.2" width="4.7" height="4.5" fill="#4e6048"/><rect x="65.3" y="53.7" width="3.1" height="2.4" fill="#8c8a78"/><rect x="50.1" y="65.9" width="3.5" height="4.6" fill="#6a725a"/><rect x="4.4" y="55.9" width="3.2" height="3.6" fill="#5e6a4e"/><rect x="48.7" y="54.8" width="4.8" height="2.3" fill="#6a725a"/><rect x="7.0" y="65.0" width="2.1" height="4.1" fill="#5e6a4e"/><rect x="33.4" y="49.8" width="4.2" height="2.2" fill="#6a725a"/><rect x="70.7" y="80.1" width="3.2" height="2.9" fill="#5e6a4e"/><rect x="49.9" y="28.4" width="3.0" height="4.0" fill="#58704c"/><rect x="54.8" y="36.2" width="2.6" height="2.8" fill="#8c8a78"/><rect x="104.1" y="19.5" width="2.5" height="5.0" fill="#5e6a4e"/><rect x="70.4" y="41.6" width="4.0" height="2.5" fill="#6a725a"/><rect x="15.3" y="46.7" width="3.5" height="4.8" fill="#8c8a78"/><rect x="37.8" y="1.6" width="2.8" height="3.5" fill="#4e6048"/><rect x="59.0" y="85.5" width="2.7" height="2.5" fill="#6a725a"/><rect x="60.7" y="23.9" width="2.9" height="2.3" fill="#8a8470"/><rect x="28.5" y="34.0" width="2.8" height="3.9" fill="#6a725a"/><rect x="70.5" y="90.8" width="4.1" height="2.3" fill="#5e6a4e"/><rect x="10.6" y="82.7" width="4.5" height="3.7" fill="#8a8470"/><rect x="5.5" y="92.4" width="2.5" height="3.0" fill="#4e6048"/><rect x="84.2" y="9.5" width="3.0" height="2.3" fill="#58704c"/><rect x="7.1" y="68.1" width="5.0" height="3.2" fill="#4e6048"/><rect x="7.3" y="6.5" width="4.8" height="4.4" fill="#5e6a4e"/><rect x="98.6" y="48.1" width="3.4" height="2.2" fill="#5e6a4e"/><rect x="46.4" y="89.2" width="2.9" height="2.3" fill="#6a725a"/><rect x="56.3" y="88.7" width="3.4" height="2.3" fill="#5e6a4e"/><rect x="84.6" y="10.9" width="2.3" height="4.0" fill="#6a725a"/><rect x="73.0" y="36.2" width="2.8" height="3.7" fill="#5e6a4e"/><rect x="107.0" y="40.6" width="4.6" height="4.9" fill="#7a7a62"/><rect x="14.7" y="62.3" width="4.8" height="3.0" fill="#7a7a62"/><rect x="89.2" y="50.3" width="2.9" height="4.6" fill="#7a7a62"/><rect x="70.5" y="29.1" width="4.8" height="3.7" fill="#6a725a"/><rect x="55.0" y="27.0" width="3.9" height="3.4" fill="#8c8a78"/><rect x="44.4" y="67.5" width="2.4" height="2.6" fill="#5e6a4e"/><rect x="76.4" y="69.3" width="3.3" height="2.7" fill="#5e6a4e"/><rect x="27.5" y="61.0" width="3.3" height="3.9" fill="#8c8a78"/><rect x="94.3" y="15.5" width="3.4" height="2.9" fill="#8c8a78"/><rect x="97.4" y="59.6" width="2.2" height="4.2" fill="#8c8a78"/><rect x="13.5" y="72.6" width="3.7" height="3.4" fill="#8a8470"/><rect x="92.7" y="83.1" width="4.8" height="2.8" fill="#6a725a"/><rect x="36.7" y="83.3" width="3.6" height="2.9" fill="#7a7a62"/><rect x="40.7" y="73.4" width="4.0" height="4.3" fill="#8a8470"/><rect x="80.1" y="0.1" width="2.9" height="4.6" fill="#7a7a62"/><rect x="72.7" y="40.0" width="3.8" height="3.4" fill="#58704c"/><rect x="100.6" y="49.8" width="4.1" height="3.8" fill="#8a8470"/><rect x="87.6" y="15.1" width="4.0" height="3.6" fill="#4e6048"/><rect x="53.1" y="44.2" width="2.1" height="3.6" fill="#8a8470"/><rect x="52.6" y="11.4" width="2.5" height="2.5" fill="#7a7a62"/><rect x="55.8" y="63.3" width="4.0" height="3.2" fill="#4e6048"/><rect x="70.9" y="21.8" width="4.8" height="2.6" fill="#8a8470"/><rect x="25.9" y="6.4" width="3.1" height="3.7" fill="#6a725a"/><rect x="24.5" y="8.9" width="3.8" height="4.3" fill="#6a725a"/><rect x="48.9" y="65.2" width="4.7" height="3.6" fill="#5e6a4e"/><rect x="0.3" y="40.4" width="2.0" height="4.3" fill="#4e6048"/><rect x="11.7" y="43.5" width="4.7" height="3.4" fill="#4e6048"/><rect x="31.8" y="7.1" width="4.4" height="4.3" fill="#58704c"/><rect x="68.6" y="79.3" width="3.8" height="4.7" fill="#6a725a"/><rect x="93.7" y="19.4" width="4.7" height="5.0" fill="#8c8a78"/><rect x="22.1" y="6.3" width="2.6" height="3.6" fill="#8a8470"/><rect x="97.6" y="16.4" width="2.0" height="3.3" fill="#4e6048"/><rect x="33.0" y="69.2" width="3.2" height="4.3" fill="#4e6048"/><rect x="12.6" y="36.5" width="2.7" height="3.2" fill="#7a7a62"/><rect x="49.6" y="38.8" width="2.8" height="3.6" fill="#5e6a4e"/><rect x="22.1" y="65.3" width="4.0" height="4.3" fill="#58704c"/><rect x="95.8" y="87.1" width="4.4" height="4.5" fill="#58704c"/><rect x="99.0" y="53.3" width="4.1" height="3.3" fill="#58704c"/><rect x="21.0" y="31.1" width="4.1" height="4.6" fill="#8a8470"/><rect x="5.1" y="78.0" width="2.5" height="3.9" fill="#58704c"/><rect x="77.9" y="41.1" width="2.4" height="2.9" fill="#58704c"/><rect x="0.8" y="14.1" width="4.8" height="4.2" fill="#4e6048"/><rect x="77.1" y="44.3" width="4.5" height="3.0" fill="#58704c"/><rect x="101.7" y="7.6" width="3.1" height="5.0" fill="#7a7a62"/><rect x="79.5" y="35.1" width="2.8" height="3.7" fill="#4e6048"/><rect x="97.5" y="31.3" width="3.2" height="3.2" fill="#6a725a"/><rect x="61.5" y="92.9" width="2.7" height="2.9" fill="#5e6a4e"/><rect x="89.8" y="6.7" width="3.5" height="2.2" fill="#6a725a"/><rect x="72.0" y="29.8" width="4.2" height="3.2" fill="#5e6a4e"/><rect x="35.3" y="81.4" width="2.1" height="3.9" fill="#58704c"/><rect x="85.7" y="88.1" width="4.3" height="4.6" fill="#5e6a4e"/><rect x="75.0" y="8.1" width="3.5" height="3.4" fill="#4e6048"/><rect x="48.7" y="14.4" width="3.8" height="3.7" fill="#8a8470"/><rect x="106.7" y="49.1" width="4.5" height="3.8" fill="#8a8470"/><rect x="8.0" y="35.8" width="2.3" height="3.0" fill="#4e6048"/><rect x="104.0" y="8.4" width="4.6" height="3.1" fill="#8a8470"/><rect x="11.4" y="30.9" width="4.6" height="3.0" fill="#58704c"/><rect x="75.5" y="43.0" width="4.8" height="3.8" fill="#58704c"/><rect x="97.8" y="29.4" width="4.5" height="3.5" fill="#4e6048"/><rect x="38.1" y="48.2" width="3.5" height="4.6" fill="#58704c"/><rect x="45.4" y="18.7" width="3.2" height="3.3" fill="#8c8a78"/><rect x="14.5" y="41.7" width="2.9" height="3.1" fill="#5e6a4e"/><rect x="66.4" y="56.1" width="2.0" height="2.4" fill="#7a7a62"/><rect x="33.6" y="53.9" width="4.3" height="4.7" fill="#6a725a"/><rect x="7.4" y="7.7" width="2.9" height="3.3" fill="#8c8a78"/><rect x="25.5" y="41.2" width="2.5" height="3.0" fill="#8a8470"/><rect x="76.3" y="48.5" width="3.2" height="3.4" fill="#58704c"/><rect x="50.9" y="3.7" width="3.4" height="3.0" fill="#8a8470"/><rect x="68.7" y="10.6" width="3.1" height="4.4" fill="#8a8470"/><rect x="103.7" y="89.3" width="3.2" height="3.3" fill="#4e6048"/><rect x="29.1" y="13.7" width="4.2" height="3.4" fill="#58704c"/><rect x="30.6" y="16.5" width="2.0" height="4.1" fill="#4e6048"/><rect x="34.7" y="18.5" width="3.3" height="3.8" fill="#7a7a62"/><rect x="50.0" y="27.2" width="2.6" height="2.6" fill="#5e6a4e"/><rect x="44.6" y="65.7" width="4.0" height="2.1" fill="#6a725a"/><rect x="12.5" y="52.7" width="3.0" height="3.8" fill="#5e6a4e"/><rect x="17.9" y="88.7" width="2.6" height="2.1" fill="#5e6a4e"/><rect x="52.3" y="19.5" width="5.0" height="3.0" fill="#7a7a62"/><rect x="34.6" y="35.0" width="2.1" height="2.4" fill="#5e6a4e"/><rect x="21.1" y="93.5" width="2.4" height="4.7" fill="#8a8470"/><rect x="69.8" y="73.4" width="3.8" height="4.8" fill="#8c8a78"/><rect x="38.6" y="32.0" width="2.5" height="2.8" fill="#4e6048"/><rect x="7.2" y="16.7" width="4.9" height="4.5" fill="#8c8a78"/><rect x="84.4" y="44.6" width="4.6" height="4.2" fill="#7a7a62"/><rect x="80.5" y="86.6" width="2.7" height="4.0" fill="#6a725a"/><rect x="10.7" y="46.0" width="2.8" height="3.4" fill="#8c8a78"/><rect x="13.2" y="7.7" width="3.0" height="2.7" fill="#7a7a62"/><rect x="67.6" y="0.6" width="4.2" height="3.8" fill="#8c8a78"/><rect x="35.4" y="37.3" width="2.8" height="2.6" fill="#8a8470"/><rect x="92.5" y="55.5" width="2.4" height="2.0" fill="#4e6048"/><rect x="64.3" y="21.7" width="3.7" height="2.3" fill="#5e6a4e"/><rect x="26.1" y="36.4" width="3.8" height="2.8" fill="#8c8a78"/><rect x="80.4" y="19.6" width="2.4" height="3.8" fill="#7a7a62"/><rect x="77.5" y="69.6" width="2.7" height="3.3" fill="#4e6048"/><rect x="33.7" y="24.1" width="2.6" height="3.4" fill="#6a725a"/><rect x="60.0" y="9.0" width="3.9" height="3.7" fill="#8c8a78"/><rect x="103.9" y="94.2" width="2.9" height="3.7" fill="#5e6a4e"/><rect x="66.6" y="62.3" width="3.1" height="4.5" fill="#8a8470"/><rect x="93.7" y="57.5" width="2.4" height="3.3" fill="#8a8470"/><rect x="61.6" y="18.5" width="3.8" height="4.5" fill="#5e6a4e"/><rect x="100.5" y="17.2" width="2.1" height="2.8" fill="#6a725a"/><rect x="17.8" y="38.0" width="2.2" height="3.1" fill="#8a8470"/><rect x="76.4" y="59.4" width="3.8" height="4.8" fill="#5e6a4e"/><rect x="88.7" y="36.0" width="2.8" height="3.4" fill="#58704c"/><rect x="53.4" y="14.2" width="4.7" height="5.0" fill="#8c8a78"/><rect x="103.3" y="5.9" width="3.8" height="2.1" fill="#4e6048"/><rect x="55.6" y="62.9" width="3.5" height="2.5" fill="#8a8470"/><rect x="47.5" y="76.8" width="4.0" height="4.8" fill="#8c8a78"/><rect x="77.9" y="67.4" width="4.8" height="3.7" fill="#8c8a78"/><rect x="86.4" y="62.7" width="4.3" height="2.7" fill="#8a8470"/><rect x="54.1" y="49.8" width="2.5" height="4.4" fill="#8c8a78"/><rect x="52.9" y="46.6" width="3.7" height="5.0" fill="#8c8a78"/><rect x="35.6" y="67.8" width="2.3" height="4.3" fill="#7a7a62"/><rect x="71.7" y="51.3" width="2.0" height="4.0" fill="#58704c"/><rect x="1.5" y="66.3" width="4.1" height="4.9" fill="#8c8a78"/><rect x="88.3" y="78.7" width="4.5" height="3.3" fill="#5e6a4e"/><rect x="20.2" y="11.3" width="3.0" height="4.3" fill="#5e6a4e"/><rect x="58.5" y="63.4" width="4.3" height="3.0" fill="#8c8a78"/><rect x="24.6" y="15.6" width="3.5" height="4.0" fill="#6a725a"/><rect x="61.8" y="4.7" width="3.0" height="3.5" fill="#6a725a"/><rect x="4.7" y="18.1" width="2.8" height="2.9" fill="#8a8470"/><rect x="89.3" y="22.9" width="2.2" height="3.5" fill="#8c8a78"/><rect x="101.3" y="22.2" width="2.8" height="3.1" fill="#4e6048"/><rect x="0.0" y="11.4" width="2.7" height="2.9" fill="#7a7a62"/><rect x="25.8" y="86.9" width="2.7" height="2.9" fill="#58704c"/><rect x="69.2" y="45.5" width="3.6" height="3.9" fill="#5e6a4e"/><rect x="4.8" y="63.4" width="2.3" height="3.3" fill="#58704c"/><rect x="84.3" y="51.6" width="2.7" height="3.0" fill="#58704c"/><rect x="20.3" y="41.0" width="3.3" height="2.0" fill="#8c8a78"/><rect x="28.5" y="93.9" width="3.2" height="2.3" fill="#8c8a78"/><rect x="10.6" y="29.8" width="3.4" height="4.7" fill="#6a725a"/><rect x="99.9" y="14.2" width="4.6" height="2.8" fill="#6a725a"/><rect x="48.1" y="91.5" width="3.4" height="2.9" fill="#5e6a4e"/><rect x="104.3" y="45.2" width="3.6" height="2.2" fill="#8a8470"/><rect x="109.1" y="10.4" width="2.7" height="5.0" fill="#6a725a"/><rect x="68.3" y="49.7" width="4.0" height="3.4" fill="#8c8a78"/><rect x="57.3" y="19.2" width="2.1" height="2.4" fill="#8c8a78"/><rect x="44.6" y="1.0" width="3.4" height="3.7" fill="#8c8a78"/><rect x="98.7" y="86.1" width="2.6" height="4.6" fill="#8a8470"/><rect x="53.1" y="6.5" width="3.8" height="4.9" fill="#5e6a4e"/><rect x="60.3" y="93.8" width="2.1" height="4.7" fill="#4e6048"/><rect x="103.0" y="63.1" width="2.7" height="3.6" fill="#5e6a4e"/><rect x="95.8" y="14.3" width="2.7" height="2.2" fill="#8a8470"/><rect x="57.4" y="17.2" width="4.8" height="4.9" fill="#4e6048"/><rect x="71.2" y="54.5" width="2.4" height="4.8" fill="#58704c"/><rect x="95.2" y="45.9" width="2.9" height="4.9" fill="#4e6048"/><rect x="35.5" y="87.8" width="3.8" height="4.9" fill="#58704c"/><rect x="26.8" y="49.0" width="4.0" height="4.7" fill="#8c8a78"/><rect x="74.9" y="3.7" width="3.1" height="4.4" fill="#8a8470"/><rect x="93.5" y="36.2" width="3.1" height="2.8" fill="#4e6048"/><rect x="45.3" y="90.0" width="2.5" height="4.1" fill="#6a725a"/><rect x="100.9" y="32.5" width="2.3" height="2.6" fill="#5e6a4e"/><rect x="81.3" y="71.5" width="4.7" height="4.0" fill="#6a725a"/><rect x="12.5" y="94.8" width="2.7" height="2.3" fill="#8a8470"/><rect x="4.0" y="90.4" width="3.0" height="3.2" fill="#7a7a62"/><rect x="30.7" y="74.2" width="3.0" height="2.7" fill="#4e6048"/><rect x="98.4" y="84.9" width="3.4" height="2.7" fill="#58704c"/><rect x="70.3" y="34.1" width="2.3" height="2.4" fill="#8a8470"/><rect x="36.1" y="66.3" width="4.0" height="3.4" fill="#58704c"/><rect x="104.2" y="41.7" width="2.8" height="3.9" fill="#58704c"/><rect x="99.2" y="2.5" width="4.1" height="2.6" fill="#58704c"/><rect x="45.8" y="14.9" width="4.1" height="3.7" fill="#5e6a4e"/><rect x="76.9" y="73.2" width="2.1" height="4.0" fill="#58704c"/><rect x="39.4" y="41.4" width="4.7" height="2.3" fill="#8c8a78"/><rect x="57.8" y="63.3" width="2.6" height="3.7" fill="#58704c"/><rect x="70.8" y="27.3" width="3.8" height="4.1" fill="#7a7a62"/><rect x="15.2" y="79.1" width="5.0" height="3.2" fill="#8a8470"/><rect x="50.0" y="68.2" width="3.0" height="4.9" fill="#8a8470"/><rect x="72.3" y="44.8" width="4.3" height="2.7" fill="#6a725a"/><rect x="86.3" y="75.8" width="3.7" height="3.8" fill="#5e6a4e"/><rect x="107.6" y="59.0" width="3.1" height="2.4" fill="#58704c"/><rect x="96.6" y="3.5" width="3.1" height="4.3" fill="#6a725a"/><rect x="63.3" y="11.6" width="4.4" height="3.9" fill="#6a725a"/><rect x="21.5" y="90.0" width="2.3" height="2.4" fill="#8c8a78"/><rect x="80.4" y="33.2" width="3.9" height="3.8" fill="#7a7a62"/><rect x="25.8" y="4.9" width="2.4" height="4.3" fill="#5e6a4e"/><rect x="23.7" y="63.5" width="2.2" height="4.2" fill="#8c8a78"/><rect x="11.0" y="49.3" width="3.8" height="5.0" fill="#7a7a62"/><rect x="25.1" y="69.5" width="3.5" height="3.5" fill="#4e6048"/><rect x="12.0" y="13.3" width="3.8" height="4.7" fill="#4e6048"/><rect x="66.4" y="47.5" width="2.4" height="4.6" fill="#8c8a78"/><rect x="69.4" y="12.7" width="3.2" height="2.1" fill="#5e6a4e"/><rect x="18.7" y="34.1" width="3.4" height="3.4" fill="#8c8a78"/><rect x="46.3" y="21.5" width="3.1" height="4.3" fill="#58704c"/><rect x="74.7" y="40.5" width="2.1" height="3.6" fill="#8c8a78"/><rect x="94.4" y="83.5" width="4.0" height="4.2" fill="#7a7a62"/><rect x="49.1" y="13.2" width="4.0" height="3.9" fill="#8a8470"/><rect x="109.0" y="32.2" width="2.2" height="2.2" fill="#4e6048"/><rect x="8.0" y="63.8" width="2.4" height="2.6" fill="#6a725a"/><rect x="104.5" y="47.4" width="4.5" height="3.1" fill="#58704c"/><rect x="65.9" y="18.1" width="2.3" height="4.0" fill="#7a7a62"/><rect x="107.3" y="29.5" width="4.2" height="4.7" fill="#5e6a4e"/><rect x="65.2" y="20.9" width="3.0" height="2.4" fill="#6a725a"/><rect x="66.3" y="1.1" width="3.9" height="2.1" fill="#4e6048"/><rect x="0.1" y="35.5" width="3.5" height="3.5" fill="#8a8470"/><rect x="49.7" y="7.4" width="3.0" height="3.7" fill="#58704c"/><rect x="58.0" y="75.0" width="2.2" height="2.1" fill="#6a725a"/><rect x="35.9" y="93.5" width="2.3" height="4.6" fill="#58704c"/><rect x="91.8" y="0.8" width="3.8" height="4.6" fill="#7a7a62"/><rect x="77.1" y="35.7" width="2.1" height="2.3" fill="#5e6a4e"/><rect x="21.5" y="30.4" width="3.1" height="4.8" fill="#7a7a62"/><rect x="51.0" y="20.0" width="4.9" height="2.5" fill="#7a7a62"/><rect x="21.7" y="69.3" width="3.9" height="2.0" fill="#4e6048"/><rect x="96.5" y="88.5" width="2.6" height="2.7" fill="#4e6048"/><rect x="60.0" y="40.6" width="2.4" height="4.7" fill="#7a7a62"/><rect x="28.8" y="32.6" width="4.1" height="2.8" fill="#5e6a4e"/><rect x="22.1" y="61.8" width="4.9" height="4.1" fill="#6a725a"/><rect x="20.3" y="41.0" width="3.5" height="4.4" fill="#7a7a62"/><rect x="6.0" y="92.2" width="3.6" height="5.0" fill="#6a725a"/><rect x="88.0" y="92.4" width="4.9" height="2.4" fill="#4e6048"/><rect x="13.8" y="70.1" width="2.8" height="4.6" fill="#8a8470"/><rect x="104.0" y="88.3" width="4.0" height="4.6" fill="#7a7a62"/><rect x="85.8" y="22.2" width="3.6" height="2.8" fill="#7a7a62"/><rect x="83.3" y="34.9" width="4.1" height="3.3" fill="#7a7a62"/><rect x="3.4" y="25.5" width="2.7" height="2.3" fill="#4e6048"/><rect x="97.5" y="67.7" width="4.7" height="4.9" fill="#8c8a78"/><rect x="75.8" y="65.2" width="2.4" height="3.0" fill="#6a725a"/><rect x="86.4" y="67.1" width="4.8" height="3.7" fill="#4e6048"/><rect x="65.8" y="29.2" width="3.8" height="4.5" fill="#8c8a78"/><rect x="23.4" y="40.5" width="4.9" height="2.1" fill="#8a8470"/><rect x="8.0" y="32.2" width="3.1" height="5.0" fill="#58704c"/><rect x="21.6" y="91.7" width="2.4" height="2.4" fill="#58704c"/><rect x="81.9" y="18.4" width="3.1" height="2.2" fill="#7a7a62"/><rect x="101.2" y="52.9" width="4.6" height="4.2" fill="#6a725a"/><rect x="80.4" y="25.4" width="2.4" height="2.9" fill="#4e6048"/><rect x="108.7" y="42.0" width="4.4" height="3.9" fill="#7a7a62"/><rect x="9.1" y="20.0" width="3.1" height="4.5" fill="#6a725a"/><rect x="55.4" y="25.3" width="3.4" height="3.3" fill="#7a7a62"/><rect x="101.7" y="57.8" width="4.1" height="2.2" fill="#8a8470"/><rect x="36.6" y="63.3" width="2.2" height="4.0" fill="#58704c"/><rect x="95.4" y="85.4" width="3.8" height="2.3" fill="#6a725a"/><rect x="97.0" y="28.1" width="3.6" height="3.5" fill="#5e6a4e"/><rect x="21.7" y="42.1" width="2.2" height="3.0" fill="#58704c"/><rect x="17.2" y="87.6" width="3.7" height="2.9" fill="#4e6048"/><rect x="51.8" y="38.6" width="3.0" height="3.9" fill="#8c8a78"/><rect x="97.6" y="14.2" width="2.8" height="3.9" fill="#8c8a78"/><rect x="20.0" y="86.2" width="4.0" height="2.8" fill="#8c8a78"/><rect x="54.0" y="42.9" width="4.9" height="3.2" fill="#7a7a62"/><rect x="58.0" y="82.3" width="4.2" height="3.1" fill="#7a7a62"/><rect x="21.5" y="73.8" width="4.6" height="4.9" fill="#7a7a62"/><rect x="68.6" y="92.9" width="4.7" height="4.0" fill="#6a725a"/><rect x="14.5" y="42.0" width="4.5" height="4.7" fill="#8c8a78"/><rect x="78.9" y="43.2" width="4.0" height="2.2" fill="#8a8470"/><rect x="77.1" y="93.9" width="4.5" height="4.8" fill="#58704c"/><rect x="21.2" y="64.9" width="3.5" height="2.2" fill="#8a8470"/><rect x="16.0" y="90.5" width="2.2" height="4.4" fill="#8c8a78"/><rect x="9.8" y="7.8" width="3.3" height="3.4" fill="#8a8470"/><rect x="25.6" y="72.5" width="4.0" height="3.4" fill="#58704c"/><rect x="89.8" y="6.6" width="3.4" height="3.0" fill="#58704c"/><rect x="51.6" y="91.4" width="4.4" height="2.1" fill="#58704c"/><rect x="93.0" y="26.0" width="4.8" height="2.2" fill="#6a725a"/><rect x="68.8" y="36.2" width="2.3" height="3.7" fill="#4e6048"/><rect x="66.2" y="78.0" width="2.7" height="4.4" fill="#4e6048"/><rect x="43.1" y="17.3" width="3.0" height="4.6" fill="#58704c"/><rect x="101.1" y="19.1" width="4.0" height="5.0" fill="#6a725a"/>
<path d="M10,0 L34,0 L60,12 L70,30 L50,28 L20,14 Z" fill="#8c8474" opacity="0.75"/>
<path d="M20,50 L50,58 L75,72 L90,95 L50,95 L30,80 Z" fill="#7e7a68" opacity="0.7"/>
<path d="M62,20 L110,24 L110,56 L90,52 L70,40 Z" fill="#8a9a48" opacity="0.55"/>
<path d="M0,30 L10,34 L14,95 L0,95 Z" fill="#3e5a3e" opacity="0.85"/>
<rect x="91.1" y="30.5" width="2.0" height="2.3" fill="#b8b838"/><rect x="92.2" y="19.4" width="1.8" height="1.9" fill="#8a9a3a"/><rect x="75.2" y="19.8" width="2.5" height="1.1" fill="#98a840"/><rect x="83.4" y="45.8" width="2.6" height="1.9" fill="#c8c040"/><rect x="63.2" y="27.0" width="1.8" height="2.4" fill="#c8c040"/><rect x="99.0" y="54.3" width="2.8" height="2.3" fill="#b8b838"/><rect x="97.1" y="41.9" width="2.7" height="1.9" fill="#8a9a3a"/><rect x="61.3" y="35.4" width="2.3" height="2.1" fill="#c8c040"/><rect x="69.2" y="55.4" width="1.7" height="1.4" fill="#b8b838"/><rect x="94.0" y="55.0" width="1.7" height="1.5" fill="#c8c040"/><rect x="79.8" y="28.7" width="2.1" height="1.0" fill="#b8b838"/><rect x="90.0" y="53.6" width="2.0" height="1.2" fill="#c8c040"/><rect x="70.1" y="28.8" width="2.1" height="1.9" fill="#8a9a3a"/><rect x="87.0" y="58.3" width="2.6" height="2.3" fill="#e8801e"/><rect x="76.6" y="43.5" width="2.1" height="2.1" fill="#c8c040"/><rect x="103.9" y="23.0" width="2.0" height="2.1" fill="#e8801e"/><rect x="88.6" y="27.0" width="2.1" height="2.0" fill="#98a840"/><rect x="79.2" y="55.6" width="1.6" height="1.7" fill="#8a9a3a"/><rect x="101.9" y="60.0" width="2.3" height="1.9" fill="#8a9a3a"/><rect x="85.3" y="42.7" width="2.6" height="2.3" fill="#e8801e"/><rect x="85.7" y="45.7" width="2.5" height="2.5" fill="#98a840"/><rect x="72.6" y="54.6" width="1.5" height="2.4" fill="#e8801e"/><rect x="78.1" y="23.5" width="2.8" height="1.6" fill="#e8801e"/><rect x="90.1" y="36.6" width="2.6" height="1.6" fill="#e8801e"/><rect x="91.9" y="27.0" width="1.9" height="1.6" fill="#98a840"/><rect x="61.5" y="49.4" width="1.8" height="2.0" fill="#c8c040"/><rect x="73.0" y="23.6" width="2.8" height="2.3" fill="#98a840"/><rect x="93.7" y="45.0" width="2.0" height="1.8" fill="#98a840"/><rect x="96.9" y="54.9" width="2.9" height="2.4" fill="#c8c040"/><rect x="61.3" y="47.8" width="1.5" height="2.0" fill="#b8b838"/><rect x="77.7" y="22.7" width="1.8" height="1.5" fill="#c8c040"/><rect x="80.8" y="34.8" width="1.8" height="2.3" fill="#e8801e"/><rect x="92.9" y="46.0" width="1.8" height="1.4" fill="#b8b838"/><rect x="92.0" y="52.4" width="1.7" height="2.4" fill="#98a840"/><rect x="89.4" y="38.6" width="1.7" height="1.0" fill="#e8801e"/><rect x="62.8" y="45.3" width="1.5" height="1.0" fill="#c8c040"/><rect x="61.8" y="48.5" width="2.0" height="1.2" fill="#b8b838"/><rect x="93.6" y="36.9" width="2.9" height="2.1" fill="#8a9a3a"/><rect x="86.9" y="58.0" width="1.8" height="1.2" fill="#98a840"/><rect x="67.3" y="22.4" width="2.5" height="1.7" fill="#8a9a3a"/><rect x="86.8" y="48.2" width="2.2" height="2.3" fill="#b8b838"/><rect x="104.6" y="52.5" width="1.6" height="1.5" fill="#c8c040"/><rect x="108.3" y="52.6" width="1.8" height="1.8" fill="#8a9a3a"/><rect x="73.2" y="51.5" width="2.2" height="1.4" fill="#98a840"/><rect x="70.2" y="20.3" width="2.8" height="2.0" fill="#e8801e"/><rect x="72.6" y="39.2" width="2.8" height="2.3" fill="#c8c040"/><rect x="106.2" y="43.3" width="2.5" height="1.8" fill="#b8b838"/><rect x="105.5" y="48.9" width="2.2" height="1.2" fill="#e8801e"/><rect x="101.5" y="47.8" width="2.6" height="1.8" fill="#98a840"/><rect x="76.3" y="25.3" width="2.6" height="1.4" fill="#98a840"/><rect x="103.3" y="55.9" width="2.4" height="1.2" fill="#8a9a3a"/><rect x="92.8" y="56.1" width="2.7" height="1.8" fill="#e8801e"/><rect x="70.6" y="50.7" width="2.2" height="2.3" fill="#c8c040"/><rect x="99.9" y="34.3" width="1.8" height="1.6" fill="#b8b838"/><rect x="69.9" y="21.4" width="1.9" height="1.6" fill="#b8b838"/><rect x="93.6" y="57.2" width="2.8" height="1.0" fill="#b8b838"/><rect x="93.5" y="27.8" width="2.1" height="2.4" fill="#c8c040"/><rect x="87.3" y="53.7" width="2.1" height="2.5" fill="#8a9a3a"/><rect x="106.7" y="36.5" width="1.8" height="2.2" fill="#8a9a3a"/><rect x="80.6" y="47.3" width="2.2" height="1.9" fill="#b8b838"/><rect x="105.4" y="44.1" width="2.8" height="2.1" fill="#98a840"/><rect x="82.9" y="58.2" width="1.6" height="2.4" fill="#b8b838"/><rect x="61.4" y="58.7" width="2.7" height="1.5" fill="#8a9a3a"/><rect x="74.3" y="25.4" width="1.8" height="1.2" fill="#b8b838"/><rect x="98.7" y="28.3" width="2.8" height="2.5" fill="#b8b838"/><rect x="82.0" y="25.4" width="1.7" height="1.8" fill="#e8801e"/><rect x="102.2" y="23.2" width="2.6" height="2.2" fill="#c8c040"/><rect x="74.3" y="25.2" width="2.3" height="2.2" fill="#b8b838"/><rect x="67.0" y="53.6" width="2.0" height="2.1" fill="#e8801e"/><rect x="103.2" y="51.2" width="2.5" height="1.1" fill="#b8b838"/>
<polyline points="1.4,1.8 15.3,10.9 32.9,20.3 51.2,28.8 64.4,35.6 76.3,42.7 92.0,51.9 110.6,58.0" fill="none" stroke="#e46c1c" stroke-width="1.0836912507188157" stroke-linejoin="round" stroke-linecap="round" opacity="1"/>
<polyline points="1.0,3.4 14.4,12.4 32.2,21.3 50.4,31.0 64.3,37.5 75.4,44.3 91.2,53.4 110.4,59.8" fill="none" stroke="#24503a" stroke-width="1.3979879615967299" stroke-linejoin="round" stroke-linecap="round" opacity="1"/>
<polyline points="-0.7,4.7 13.6,14.2 31.2,23.4 49.3,32.5 62.6,39.0 74.8,46.0 90.3,54.8 110.1,61.3" fill="none" stroke="#d8461a" stroke-width="1.566249827933858" stroke-linejoin="round" stroke-linecap="round" opacity="1"/>
<polyline points="-1.0,6.2 12.0,15.7 30.3,24.4 48.8,33.8 62.2,40.4 73.6,47.2 89.8,56.7 109.0,63.6" fill="none" stroke="#c4a82c" stroke-width="1.0996569851170737" stroke-linejoin="round" stroke-linecap="round" opacity="1"/>
<polyline points="-2.4,8.2 11.4,16.9 29.6,26.4 47.6,35.3 61.5,42.4 72.6,49.1 89.1,58.5 108.3,65.3" fill="none" stroke="#e88426" stroke-width="1.108473589105987" stroke-linejoin="round" stroke-linecap="round" opacity="1"/>
<polyline points="1.7,11.2 19.6,22.1 37.8,31.4 56.0,42.9 69.6,52.0 82.8,61.1 101.3,72.3 110.9,76.4" fill="none" stroke="#d8461a" stroke-width="1.5055294496270468" stroke-linejoin="round" stroke-linecap="round" opacity="1"/>
<polyline points="0.9,12.4 18.6,24.2 36.8,32.8 54.7,44.5 68.3,53.4 81.9,62.5 99.7,73.5 110.3,77.7" fill="none" stroke="#24503a" stroke-width="1.3857307443923021" stroke-linejoin="round" stroke-linecap="round" opacity="1"/>
<polyline points="-0.7,13.7 17.4,25.2 35.7,34.7 54.3,45.4 67.8,54.6 80.9,63.6 99.2,75.1 109.5,79.3" fill="none" stroke="#c4a82c" stroke-width="1.3775985077985575" stroke-linejoin="round" stroke-linecap="round" opacity="1"/>
<polyline points="-1.1,15.5 16.8,26.8 35.1,36.3 53.0,47.6 66.5,56.1 80.3,65.5 98.1,76.9 109.2,81.0" fill="none" stroke="#24503a" stroke-width="1.5412355178692212" stroke-linejoin="round" stroke-linecap="round" opacity="1"/>
<polyline points="-2.5,17.5 15.7,28.5 34.4,37.5 51.8,48.7 65.7,57.4 78.9,67.0 97.3,78.3 108.1,82.9" fill="none" stroke="#e88426" stroke-width="1.4632354406535009" stroke-linejoin="round" stroke-linecap="round" opacity="1"/>
<polyline points="7.8,35.3 23.6,40.0 42.1,47.0 53.2,56.2 69.1,62.7 87.6,74.2 103.4,88.7 107.8,93.3" fill="none" stroke="#e46c1c" stroke-width="1.2518539248337044" stroke-linejoin="round" stroke-linecap="round" opacity="1"/>
<polyline points="6.8,37.3 23.0,41.5 41.3,48.3 52.4,57.9 68.7,64.3 86.6,76.3 102.5,89.3 106.7,94.5" fill="none" stroke="#24503a" stroke-width="1.2068422279791702" stroke-linejoin="round" stroke-linecap="round" opacity="1"/>
<polyline points="6.8,39.4 22.5,43.3 40.4,50.2 51.7,59.4 68.0,66.3 85.7,77.6 101.4,90.7 105.7,95.2" fill="none" stroke="#24503a" stroke-width="1.127353661389748" stroke-linejoin="round" stroke-linecap="round" opacity="1"/>
<polyline points="6.1,40.8 21.5,45.2 39.9,51.9 50.7,60.8 66.9,67.7 84.5,78.9 100.0,92.4 104.2,96.8" fill="none" stroke="#e88426" stroke-width="1.2088863114522996" stroke-linejoin="round" stroke-linecap="round" opacity="1"/>
<polyline points="5.8,42.3 21.3,47.0 38.3,53.2 49.9,62.6 66.2,69.6 83.8,80.7 98.7,93.3 102.6,98.1" fill="none" stroke="#d8461a" stroke-width="1.1137828126009623" stroke-linejoin="round" stroke-linecap="round" opacity="1"/>
<polyline points="1.9,52.0 9.0,59.0 15.0,65.5 23.8,69.7 35.5,74.6 47.4,84.0 56.3,92.5" fill="none" stroke="#e46c1c" stroke-width="1.2823855039555645" stroke-linejoin="round" stroke-linecap="round" opacity="1"/>
<polyline points="0.5,53.6 7.6,60.3 14.6,67.1 23.2,71.2 34.7,76.0 45.8,85.4 55.1,94.2" fill="none" stroke="#24503a" stroke-width="1.1185638197973355" stroke-linejoin="round" stroke-linecap="round" opacity="1"/>
<polyline points="-0.2,54.7 6.6,61.7 13.3,68.5 22.3,72.7 33.8,77.8 44.4,86.1 53.9,95.1" fill="none" stroke="#c4a82c" stroke-width="1.2631241237730408" stroke-linejoin="round" stroke-linecap="round" opacity="1"/>
<polyline points="2.8,62.3 6.8,70.7 13.7,79.7 20.1,85.8 26.9,92.9" fill="none" stroke="#c4a82c" stroke-width="1.5803765875715814" stroke-linejoin="round" stroke-linecap="round" opacity="1"/>
<polyline points="1.2,63.0 5.8,71.7 12.2,80.9 19.0,87.3 25.5,94.3" fill="none" stroke="#24503a" stroke-width="1.1754667673843258" stroke-linejoin="round" stroke-linecap="round" opacity="1"/>
<polyline points="-0.7,63.4 4.1,72.8 11.2,81.9 17.6,88.9 24.2,95.5" fill="none" stroke="#d8461a" stroke-width="1.5924095389001875" stroke-linejoin="round" stroke-linecap="round" opacity="1"/>
<polyline points="11.2,61.3 19.7,70.4 31.7,79.5 40.8,88.1 45.2,93.3" fill="none" stroke="#24503a" stroke-width="1.5192939233258258" stroke-linejoin="round" stroke-linecap="round" opacity="1"/>
<polyline points="10.2,62.6 18.6,71.7 30.2,80.9 39.4,89.5 44.1,94.1" fill="none" stroke="#24503a" stroke-width="1.419240605363223" stroke-linejoin="round" stroke-linecap="round" opacity="1"/>
<polyline points="8.2,63.4 17.6,73.2 28.7,81.7 37.9,91.1 42.8,95.5" fill="none" stroke="#c4a82c" stroke-width="1.5407147265579553" stroke-linejoin="round" stroke-linecap="round" opacity="1"/>
<polyline points="35.2,-2.4 52.6,4.2 68.9,8.0 81.8,10.9" fill="none" stroke="#e88426" stroke-width="1.0232927623606956" stroke-linejoin="round" stroke-linecap="round" opacity="1"/>
<polyline points="34.7,-1.2 52.3,5.9 68.2,9.8 81.4,12.3" fill="none" stroke="#24503a" stroke-width="1.1361235599891428" stroke-linejoin="round" stroke-linecap="round" opacity="1"/>
<polyline points="33.5,0.6 52.2,7.1 68.0,12.2 80.9,14.1" fill="none" stroke="#e46c1c" stroke-width="1.0667443614199286" stroke-linejoin="round" stroke-linecap="round" opacity="1"/>
<polyline points="60.8,19.4 76.4,25.2 87.6,31.0 100.8,37.7 110.9,40.3" fill="none" stroke="#24503a" stroke-width="1.332764985258432" stroke-linejoin="round" stroke-linecap="round" opacity="1"/>
<polyline points="60.5,21.0 75.9,26.5 86.3,33.3 100.2,39.7 110.0,42.2" fill="none" stroke="#24503a" stroke-width="1.4526722145893687" stroke-linejoin="round" stroke-linecap="round" opacity="1"/>
<polyline points="60.1,22.3 74.9,28.3 86.1,34.3 99.5,41.2 109.8,43.6" fill="none" stroke="#d8461a" stroke-width="1.5173316610514616" stroke-linejoin="round" stroke-linecap="round" opacity="1"/>
<polyline points="58.5,44.3 75.7,48.0 90.6,55.0 110.8,59.9" fill="none" stroke="#c4a82c" stroke-width="1.07251383092197" stroke-linejoin="round" stroke-linecap="round" opacity="1"/>
<polyline points="58.6,45.7 75.2,49.8 90.7,57.1 110.6,61.9" fill="none" stroke="#24503a" stroke-width="1.2008348593930556" stroke-linejoin="round" stroke-linecap="round" opacity="1"/>
<polyline points="57.9,47.2 75.0,51.8 90.1,58.8 110.0,63.8" fill="none" stroke="#e88426" stroke-width="1.1748619653405383" stroke-linejoin="round" stroke-linecap="round" opacity="1"/>
<polyline points="7.5,21.8 21.3,31.8 34.9,37.5 50.6,41.1" fill="none" stroke="#c4a82c" stroke-width="1.4266953555243043" stroke-linejoin="round" stroke-linecap="round" opacity="1"/>
<polyline points="7.1,23.1 20.5,32.8 34.2,38.8 50.6,43.1" fill="none" stroke="#24503a" stroke-width="1.157577517245996" stroke-linejoin="round" stroke-linecap="round" opacity="1"/>
<polyline points="5.3,24.1 19.9,34.4 33.8,40.3 49.6,44.7" fill="none" stroke="#e88426" stroke-width="1.195065128609793" stroke-linejoin="round" stroke-linecap="round" opacity="1"/>
<polyline points="21.2,52.6 36.0,59.6 51.6,67.6 66.5,75.5 81.9,85.3" fill="none" stroke="#e88426" stroke-width="1.11001358752671" stroke-linejoin="round" stroke-linecap="round" opacity="1"/>
<polyline points="20.7,54.2 35.3,61.0 50.6,68.8 65.9,76.8 80.9,86.9" fill="none" stroke="#24503a" stroke-width="1.087904599381474" stroke-linejoin="round" stroke-linecap="round" opacity="1"/>
<polyline points="20.1,55.3 34.4,62.2 49.6,70.2 64.4,78.9 79.5,88.7" fill="none" stroke="#d8461a" stroke-width="1.1280236803404051" stroke-linejoin="round" stroke-linecap="round" opacity="1"/>
<polyline points="2.0,28.1 12.0,39.7 22.0,47.4 31.4,52.6" fill="none" stroke="#24503a" stroke-width="1.5670068564020723" stroke-linejoin="round" stroke-linecap="round" opacity="1"/>
<polyline points="1.1,28.9 10.8,40.9 20.8,49.3 30.7,54.1" fill="none" stroke="#24503a" stroke-width="1.1036695754845691" stroke-linejoin="round" stroke-linecap="round" opacity="1"/>
<polyline points="-0.6,30.5 9.9,42.5 19.9,50.4 29.6,55.8" fill="none" stroke="#d8461a" stroke-width="1.328998878636994" stroke-linejoin="round" stroke-linecap="round" opacity="1"/>
<polyline points="61.3,75.2 75.9,81.4 91.5,89.0" fill="none" stroke="#e88426" stroke-width="1.414296377051031" stroke-linejoin="round" stroke-linecap="round" opacity="1"/>
<polyline points="60.5,77.2 75.7,83.2 90.9,90.9" fill="none" stroke="#24503a" stroke-width="1.3806462590512187" stroke-linejoin="round" stroke-linecap="round" opacity="1"/>
<polyline points="60.0,78.2 74.4,84.4 89.9,92.2" fill="none" stroke="#c4a82c" stroke-width="1.2672652208878767" stroke-linejoin="round" stroke-linecap="round" opacity="1"/>
<path d="M86,0 L110,0 L110,28 L100,26 L90,20 L86,10 Z" fill="#e8802a" opacity="0.9"/>
<rect x="100.4" y="3.0" width="3.7" height="2.4" fill="#d8461a"/><rect x="104.5" y="15.7" width="4.0" height="3.1" fill="#d8c030"/><rect x="92.8" y="5.3" width="3.8" height="3.7" fill="#e46c1c"/><rect x="97.1" y="4.0" width="3.4" height="3.3" fill="#d8461a"/><rect x="108.3" y="17.4" width="2.7" height="3.5" fill="#d8461a"/><rect x="109.4" y="15.2" width="3.7" height="2.6" fill="#e88426"/><rect x="100.1" y="28.2" width="2.8" height="3.4" fill="#e46c1c"/><rect x="86.2" y="16.7" width="2.9" height="2.3" fill="#e46c1c"/><rect x="93.1" y="22.8" width="3.0" height="2.0" fill="#e88426"/><rect x="91.2" y="23.7" width="3.4" height="2.8" fill="#f0a030"/><rect x="103.4" y="20.0" width="2.8" height="2.2" fill="#d8461a"/><rect x="101.4" y="26.1" width="2.2" height="2.2" fill="#d8461a"/><rect x="100.4" y="1.4" width="2.0" height="2.4" fill="#e88426"/><rect x="99.3" y="3.1" width="2.4" height="3.1" fill="#e46c1c"/><rect x="89.7" y="5.9" width="3.0" height="2.6" fill="#e46c1c"/><rect x="103.7" y="2.1" width="3.3" height="2.2" fill="#d8461a"/><rect x="107.9" y="14.2" width="3.4" height="2.5" fill="#d8c030"/><rect x="87.9" y="18.9" width="3.3" height="3.2" fill="#f0a030"/><rect x="97.0" y="13.7" width="4.0" height="2.8" fill="#d8c030"/><rect x="98.9" y="9.9" width="3.5" height="3.8" fill="#e88426"/><rect x="106.9" y="3.4" width="2.4" height="3.9" fill="#f0a030"/><rect x="97.9" y="11.7" width="2.4" height="2.7" fill="#e46c1c"/><rect x="102.5" y="2.7" width="2.1" height="3.6" fill="#e46c1c"/><rect x="109.3" y="17.9" width="4.0" height="3.6" fill="#d8c030"/><rect x="95.5" y="7.9" width="2.0" height="3.2" fill="#d8461a"/><rect x="91.6" y="11.2" width="3.2" height="2.3" fill="#d8461a"/><rect x="93.1" y="9.0" width="3.8" height="3.0" fill="#e46c1c"/><rect x="90.9" y="15.8" width="2.4" height="3.6" fill="#e88426"/><rect x="92.7" y="14.0" width="3.1" height="3.6" fill="#d8c030"/><rect x="88.2" y="15.0" width="3.7" height="4.0" fill="#d8c030"/><rect x="86.8" y="2.2" width="2.1" height="3.7" fill="#f0a030"/><rect x="101.2" y="14.3" width="2.6" height="2.2" fill="#e88426"/><rect x="102.5" y="23.9" width="3.5" height="2.3" fill="#f0a030"/><rect x="100.2" y="17.9" width="4.0" height="3.8" fill="#e88426"/><rect x="85.4" y="12.6" width="3.4" height="2.6" fill="#e88426"/><rect x="105.5" y="7.9" width="3.3" height="3.9" fill="#f0a030"/><rect x="106.6" y="22.0" width="3.3" height="3.9" fill="#d8461a"/><rect x="108.6" y="3.4" width="2.8" height="2.9" fill="#e46c1c"/><rect x="106.0" y="11.6" width="3.8" height="3.0" fill="#e88426"/><rect x="104.3" y="1.0" width="2.4" height="2.5" fill="#d8c030"/><rect x="104.4" y="23.5" width="3.2" height="2.5" fill="#d8c030"/><rect x="104.5" y="20.2" width="3.8" height="2.2" fill="#d8461a"/><rect x="95.5" y="19.2" width="2.1" height="3.9" fill="#d8461a"/><rect x="94.3" y="1.8" width="2.6" height="3.4" fill="#f0a030"/><rect x="86.9" y="16.8" width="3.1" height="3.4" fill="#d8461a"/><rect x="88.6" y="24.3" width="3.2" height="3.4" fill="#f0a030"/><rect x="97.2" y="3.0" width="2.1" height="3.6" fill="#f0a030"/>
<circle cx="86" cy="14" r="2.2" fill="#34403e"/>
<rect x="0.5" y="0.5" width="109" height="94" fill="none" stroke="#3c5e86" stroke-width="1"/>
</svg></div>
<div class="thumb" style="left:138.7px;top:215.7px;width:110px"><svg viewBox="0 0 110 95" preserveAspectRatio="none">
<rect width="110" height="95" fill="#efede6"/>
<ellipse cx="18.1" cy="65.5" rx="2.2" ry="1.4" fill="#d8ecc4"/><ellipse cx="87.2" cy="76.7" rx="2.3" ry="1.5" fill="#c2e0a2"/><ellipse cx="0.3" cy="35.2" rx="1.2" ry="2.6" fill="#b8dc98"/><ellipse cx="25.5" cy="22.1" rx="2.1" ry="3.0" fill="#cfe6b4"/><ellipse cx="84.8" cy="38.6" rx="1.1" ry="1.7" fill="#b8dc98"/><ellipse cx="54.7" cy="11.0" rx="1.1" ry="2.5" fill="#d8ecc4"/><ellipse cx="9.7" cy="76.8" rx="2.1" ry="2.1" fill="#cfe6b4"/><ellipse cx="37.7" cy="46.0" rx="2.7" ry="1.9" fill="#c2e0a2"/><ellipse cx="90.2" cy="7.1" rx="1.5" ry="2.9" fill="#c2e0a2"/><ellipse cx="98.3" cy="71.7" rx="1.3" ry="2.0" fill="#cfe6b4"/><ellipse cx="91.0" cy="19.1" rx="3.2" ry="1.8" fill="#c2e0a2"/><ellipse cx="40.2" cy="42.9" rx="1.8" ry="2.0" fill="#b8dc98"/><ellipse cx="29.2" cy="79.2" rx="2.8" ry="3.0" fill="#c2e0a2"/><ellipse cx="54.6" cy="46.7" rx="2.4" ry="1.6" fill="#c2e0a2"/><ellipse cx="107.8" cy="10.7" rx="2.6" ry="2.7" fill="#c2e0a2"/><ellipse cx="36.6" cy="72.4" rx="1.6" ry="1.3" fill="#d8ecc4"/><ellipse cx="101.5" cy="16.5" rx="1.9" ry="2.4" fill="#b8dc98"/><ellipse cx="74.3" cy="85.4" rx="2.0" ry="3.0" fill="#c2e0a2"/><ellipse cx="105.8" cy="56.1" rx="2.2" ry="1.8" fill="#d8ecc4"/><ellipse cx="27.2" cy="83.2" rx="2.4" ry="1.9" fill="#c2e0a2"/><ellipse cx="44.8" cy="70.4" rx="3.1" ry="1.1" fill="#cfe6b4"/><ellipse cx="28.4" cy="27.5" rx="1.6" ry="1.8" fill="#b8dc98"/><ellipse cx="95.7" cy="61.3" rx="3.5" ry="2.5" fill="#c2e0a2"/><ellipse cx="52.7" cy="24.0" rx="1.1" ry="1.4" fill="#b8dc98"/><ellipse cx="92.2" cy="75.5" rx="2.5" ry="1.9" fill="#d8ecc4"/><ellipse cx="63.9" cy="80.7" rx="1.3" ry="2.2" fill="#d8ecc4"/><ellipse cx="15.3" cy="68.5" rx="2.7" ry="2.9" fill="#b8dc98"/><ellipse cx="2.6" cy="56.4" rx="3.1" ry="2.2" fill="#c2e0a2"/><ellipse cx="28.3" cy="38.5" rx="1.3" ry="1.2" fill="#c2e0a2"/><ellipse cx="10.3" cy="2.4" rx="3.0" ry="1.1" fill="#b8dc98"/><ellipse cx="13.1" cy="26.7" rx="2.3" ry="1.6" fill="#d8ecc4"/><ellipse cx="54.3" cy="20.9" rx="1.5" ry="2.7" fill="#c2e0a2"/><ellipse cx="22.2" cy="70.7" rx="2.5" ry="2.0" fill="#cfe6b4"/><ellipse cx="82.0" cy="5.4" rx="2.0" ry="2.7" fill="#cfe6b4"/><ellipse cx="43.8" cy="53.9" rx="1.6" ry="2.4" fill="#c2e0a2"/><ellipse cx="34.5" cy="4.0" rx="1.4" ry="2.5" fill="#b8dc98"/><ellipse cx="109.0" cy="77.7" rx="3.4" ry="1.2" fill="#b8dc98"/><ellipse cx="66.1" cy="48.3" rx="3.4" ry="1.6" fill="#d8ecc4"/><ellipse cx="76.9" cy="49.9" rx="1.2" ry="2.6" fill="#c2e0a2"/><ellipse cx="107.5" cy="33.7" rx="2.6" ry="1.8" fill="#d8ecc4"/><ellipse cx="95.5" cy="61.9" rx="2.3" ry="2.9" fill="#b8dc98"/><ellipse cx="74.8" cy="67.0" rx="2.3" ry="1.8" fill="#b8dc98"/><ellipse cx="44.2" cy="21.4" rx="2.7" ry="1.1" fill="#cfe6b4"/><ellipse cx="30.3" cy="56.0" rx="2.8" ry="1.9" fill="#b8dc98"/><ellipse cx="26.0" cy="36.6" rx="1.6" ry="2.8" fill="#b8dc98"/><ellipse cx="72.0" cy="3.6" rx="2.2" ry="2.4" fill="#c2e0a2"/><ellipse cx="98.0" cy="74.1" rx="1.6" ry="2.8" fill="#d8ecc4"/><ellipse cx="42.5" cy="58.4" rx="1.4" ry="1.4" fill="#cfe6b4"/><ellipse cx="96.3" cy="68.1" rx="2.4" ry="1.2" fill="#cfe6b4"/><ellipse cx="33.3" cy="89.6" rx="3.5" ry="3.0" fill="#b8dc98"/><ellipse cx="18.3" cy="41.2" rx="1.9" ry="2.2" fill="#d8ecc4"/><ellipse cx="20.8" cy="7.8" rx="1.8" ry="1.5" fill="#cfe6b4"/><ellipse cx="93.0" cy="14.6" rx="1.6" ry="2.4" fill="#c2e0a2"/><ellipse cx="78.8" cy="14.9" rx="2.2" ry="1.9" fill="#b8dc98"/><ellipse cx="67.9" cy="26.7" rx="2.7" ry="2.2" fill="#c2e0a2"/><ellipse cx="10.9" cy="92.6" rx="1.1" ry="2.6" fill="#c2e0a2"/><ellipse cx="102.8" cy="66.9" rx="1.2" ry="2.2" fill="#cfe6b4"/><ellipse cx="43.8" cy="41.9" rx="1.6" ry="1.0" fill="#b8dc98"/><ellipse cx="59.9" cy="9.0" rx="1.5" ry="1.7" fill="#d8ecc4"/><ellipse cx="0.3" cy="15.8" rx="2.3" ry="1.1" fill="#b8dc98"/><ellipse cx="20.6" cy="38.3" rx="1.6" ry="2.6" fill="#c2e0a2"/><ellipse cx="92.8" cy="87.9" rx="2.6" ry="1.1" fill="#cfe6b4"/><ellipse cx="47.9" cy="79.1" rx="1.4" ry="2.0" fill="#c2e0a2"/><ellipse cx="57.9" cy="50.9" rx="2.2" ry="2.6" fill="#b8dc98"/><ellipse cx="37.2" cy="25.6" rx="1.7" ry="2.3" fill="#d8ecc4"/><ellipse cx="1.0" cy="76.7" rx="1.5" ry="1.2" fill="#cfe6b4"/><ellipse cx="91.1" cy="34.2" rx="1.1" ry="1.1" fill="#d8ecc4"/><ellipse cx="54.5" cy="64.7" rx="1.4" ry="1.2" fill="#b8dc98"/><ellipse cx="102.4" cy="51.2" rx="1.5" ry="1.4" fill="#b8dc98"/><ellipse cx="104.9" cy="40.2" rx="3.1" ry="1.4" fill="#d8ecc4"/><ellipse cx="4.5" cy="33.5" rx="1.1" ry="1.7" fill="#c2e0a2"/><ellipse cx="52.6" cy="82.1" rx="3.0" ry="2.8" fill="#b8dc98"/><ellipse cx="74.7" cy="20.6" rx="3.4" ry="1.8" fill="#cfe6b4"/><ellipse cx="103.6" cy="89.0" rx="1.0" ry="1.7" fill="#d8ecc4"/><ellipse cx="67.5" cy="57.7" rx="2.6" ry="1.3" fill="#b8dc98"/><ellipse cx="102.4" cy="50.9" rx="1.5" ry="3.0" fill="#b8dc98"/><ellipse cx="61.0" cy="73.7" rx="3.3" ry="1.5" fill="#d8ecc4"/><ellipse cx="65.9" cy="33.4" rx="2.4" ry="3.0" fill="#d8ecc4"/><ellipse cx="100.3" cy="90.7" rx="3.5" ry="2.5" fill="#cfe6b4"/><ellipse cx="81.6" cy="20.2" rx="3.2" ry="2.0" fill="#d8ecc4"/><polyline points="13.5,22.8 6.1,23.9 1.6,23.8 -3.7,24.1 -8.3,24.4 -14.0,24.5" fill="none" stroke="#e8c4bc" stroke-width="0.5"/><polyline points="37.0,41.8 31.9,49.2 29.5,54.0 30.5,60.9" fill="none" stroke="#d4d4d4" stroke-width="0.4"/><polyline points="91.6,43.5 88.4,43.1 85.3,40.9 80.7,38.8 75.7,36.1 73.2,33.8" fill="none" stroke="#e0bcbc" stroke-width="0.5"/><polyline points="41.2,23.8 44.0,20.6 51.5,17.1" fill="none" stroke="#e8c4bc" stroke-width="0.5"/><polyline points="27.4,12.3 24.4,6.3 22.6,0.5 17.5,-5.2 15.4,-7.5" fill="none" stroke="#e0bcbc" stroke-width="0.6"/><polyline points="57.5,0.9 57.9,-6.3 57.7,-10.0 60.4,-16.4 59.2,-23.6" fill="none" stroke="#d4d4d4" stroke-width="0.5"/><polyline points="53.7,51.1 47.6,48.0 42.8,46.4 37.2,42.5 32.0,39.3 24.5,37.5" fill="none" stroke="#e8c4bc" stroke-width="0.6"/><polyline points="98.7,80.1 98.6,76.2 96.0,72.4" fill="none" stroke="#e0bcbc" stroke-width="0.4"/><polyline points="106.1,43.4 107.3,51.4 109.1,54.6" fill="none" stroke="#d4d4d4" stroke-width="0.5"/><polyline points="69.1,11.6 71.5,14.2 77.3,17.5 81.5,17.6" fill="none" stroke="#d4d4d4" stroke-width="0.5"/><polyline points="102.1,66.4 102.9,61.5 106.0,57.4 108.7,55.7 115.7,51.1 122.0,49.5" fill="none" stroke="#ecd4b4" stroke-width="0.3"/><polyline points="70.5,74.0 68.6,79.9 69.1,84.9 68.4,91.8 68.6,99.6 71.2,103.6" fill="none" stroke="#e8c4bc" stroke-width="0.4"/><polyline points="90.3,13.1 88.8,9.7 87.6,4.2 84.9,-0.3 84.3,-5.8" fill="none" stroke="#e8c4bc" stroke-width="0.5"/><polyline points="52.1,52.9 50.9,59.5 49.3,64.9 47.5,67.4" fill="none" stroke="#d4d4d4" stroke-width="0.4"/><polyline points="3.5,20.4 4.7,12.8 9.5,5.5 10.9,0.5 13.6,-2.6" fill="none" stroke="#d4d4d4" stroke-width="0.6"/><polyline points="20.0,35.0 21.6,42.9 25.7,48.7 27.8,55.4 25.7,63.4" fill="none" stroke="#ecd4b4" stroke-width="0.5"/><polyline points="33.5,53.2 35.5,50.8 41.7,44.9 45.6,36.9" fill="none" stroke="#ecd4b4" stroke-width="0.5"/><polyline points="95.9,84.9 99.1,78.4 103.2,70.6 106.6,66.2" fill="none" stroke="#e0bcbc" stroke-width="0.5"/><polyline points="57.1,4.6 55.0,1.6 52.8,-1.1" fill="none" stroke="#e0bcbc" stroke-width="0.3"/><polyline points="56.1,28.1 51.3,30.4 47.7,31.0 40.9,33.5 32.0,33.0" fill="none" stroke="#e0bcbc" stroke-width="0.4"/><polyline points="99.8,83.7 101.5,88.5 100.6,93.5 98.0,101.0 97.4,108.7" fill="none" stroke="#e8c4bc" stroke-width="0.6"/><polyline points="4.8,75.0 2.3,73.0 -4.1,69.9" fill="none" stroke="#ecd4b4" stroke-width="0.6"/><polyline points="93.2,59.1 100.3,63.7 104.6,65.3 110.0,65.3" fill="none" stroke="#e0bcbc" stroke-width="0.5"/><polyline points="80.2,23.2 74.6,28.3 70.7,36.1 66.0,43.1 62.1,49.2" fill="none" stroke="#ecd4b4" stroke-width="0.4"/><polyline points="67.7,93.3 70.0,86.3 72.6,78.3 72.0,72.0 67.9,65.3 67.0,62.3" fill="none" stroke="#e0bcbc" stroke-width="0.5"/><polyline points="79.4,0.2 81.4,-4.9 88.1,-9.6 93.8,-11.2 99.2,-14.6 107.4,-17.9" fill="none" stroke="#e0bcbc" stroke-width="0.3"/><polyline points="100.3,15.2 93.5,18.7 87.5,23.1 83.1,27.3 76.6,29.2" fill="none" stroke="#ecd4b4" stroke-width="0.4"/><polyline points="52.0,49.0 53.3,52.9 54.4,57.7 55.1,63.6 56.1,67.8 54.0,75.8" fill="none" stroke="#ecd4b4" stroke-width="0.5"/><polyline points="107.5,50.2 111.6,49.9 117.1,51.9" fill="none" stroke="#d4d4d4" stroke-width="0.5"/><polyline points="27.3,24.4 33.1,21.8 38.3,14.5" fill="none" stroke="#ecd4b4" stroke-width="0.5"/><polyline points="56.2,52.7 63.3,52.5 70.1,56.9 76.1,59.9" fill="none" stroke="#ecd4b4" stroke-width="0.4"/><polyline points="1.7,27.7 -4.9,29.8 -11.0,33.9 -16.0,35.9" fill="none" stroke="#e0bcbc" stroke-width="0.5"/><polyline points="98.3,5.7 92.4,7.6 88.0,8.9 81.7,14.3 78.2,15.3" fill="none" stroke="#ecd4b4" stroke-width="0.4"/><polyline points="63.9,29.9 60.9,31.2 53.1,32.7" fill="none" stroke="#d4d4d4" stroke-width="0.5"/><polyline points="18.5,37.7 24.8,31.4 27.9,23.4 29.4,16.8 27.9,9.1 26.7,5.6" fill="none" stroke="#ecd4b4" stroke-width="0.5"/><polyline points="91.2,9.4 95.6,6.5 101.4,4.0" fill="none" stroke="#f0dcc0" stroke-width="0.4"/><polyline points="89.3,87.0 95.4,86.4 102.1,82.0 106.5,78.8 111.1,75.1" fill="none" stroke="#e0bcbc" stroke-width="0.6"/><polyline points="88.1,39.1 85.7,32.1 84.6,27.7" fill="none" stroke="#e0bcbc" stroke-width="0.4"/><polyline points="87.5,40.5 87.7,35.5 92.4,28.5 93.5,23.4 97.5,17.0 99.1,11.6" fill="none" stroke="#e8c4bc" stroke-width="0.6"/><polyline points="7.7,11.2 -0.2,13.0 -5.2,14.7 -8.6,15.7 -12.6,15.1 -15.7,13.7" fill="none" stroke="#e0bcbc" stroke-width="0.5"/><polyline points="58.3,91.8 52.6,94.1 49.1,93.8 40.7,91.8 33.1,87.7 25.4,86.7" fill="none" stroke="#ecd4b4" stroke-width="0.4"/><polyline points="22.7,16.0 21.0,10.9 20.6,6.7" fill="none" stroke="#e8c4bc" stroke-width="0.6"/><polyline points="30.9,8.8 26.7,2.6 19.8,-0.4 14.1,-6.8 12.0,-11.9" fill="none" stroke="#e8c4bc" stroke-width="0.4"/><polyline points="52.6,62.1 58.0,59.8 63.3,60.6 67.8,64.2" fill="none" stroke="#e8c4bc" stroke-width="0.5"/><polyline points="29.7,59.7 37.0,60.3 43.1,58.0 45.5,55.8 49.6,48.9" fill="none" stroke="#f0dcc0" stroke-width="0.5"/><polyline points="24.8,2.4 30.4,7.7 32.7,12.2 36.3,19.0 40.5,23.1 45.3,29.7" fill="none" stroke="#ecd4b4" stroke-width="0.5"/><polyline points="37.1,0.1 40.0,-2.6 44.5,-6.4 49.2,-13.5 49.9,-18.0 47.3,-24.3" fill="none" stroke="#d4d4d4" stroke-width="0.4"/><polyline points="101.4,60.3 100.8,65.2 98.8,68.4 96.8,73.5 93.0,76.4" fill="none" stroke="#f0dcc0" stroke-width="0.4"/><polyline points="95.5,57.0 98.5,55.9 103.0,55.9 109.0,54.0 113.3,54.5" fill="none" stroke="#d4d4d4" stroke-width="0.4"/><polyline points="17.1,0.8 15.0,-2.5 13.1,-7.9" fill="none" stroke="#d4d4d4" stroke-width="0.3"/><polyline points="106.2,41.5 100.1,35.9 97.7,33.7 91.3,27.9" fill="none" stroke="#d4d4d4" stroke-width="0.4"/><polyline points="29.2,89.0 29.5,93.8 28.2,97.7" fill="none" stroke="#e0bcbc" stroke-width="0.4"/><polyline points="80.0,32.7 84.8,39.1 90.5,43.0 96.9,44.5 103.6,43.9 106.8,45.1" fill="none" stroke="#ecd4b4" stroke-width="0.3"/><polyline points="97.3,76.7 98.8,67.9 100.0,59.1 98.1,54.1 95.9,46.5" fill="none" stroke="#d4d4d4" stroke-width="0.3"/><polyline points="35.6,28.4 32.7,27.4 30.1,25.8 26.6,24.7 23.3,22.4" fill="none" stroke="#e8c4bc" stroke-width="0.3"/><polyline points="26.1,64.1 23.3,67.2 19.4,72.3 13.5,76.2 11.0,78.2 6.8,81.8" fill="none" stroke="#d4d4d4" stroke-width="0.4"/><polyline points="85.9,80.6 89.5,78.6 97.9,77.3 106.0,78.5 110.7,79.3" fill="none" stroke="#f0dcc0" stroke-width="0.4"/><polyline points="43.6,68.1 43.9,76.7 46.3,80.4 50.6,82.4 57.1,85.4 60.3,89.0" fill="none" stroke="#d4d4d4" stroke-width="0.4"/><polyline points="78.4,50.5 83.9,52.5 90.5,57.5" fill="none" stroke="#e0bcbc" stroke-width="0.3"/><polyline points="108.9,32.2 116.0,33.8 123.2,37.0" fill="none" stroke="#e0bcbc" stroke-width="0.3"/><rect x="43.2" y="13.7" width="0.9" height="1.0" fill="#dcd4cc"/><rect x="20.3" y="43.6" width="1.6" height="1.8" fill="#dcd4cc"/><rect x="56.0" y="24.6" width="1.5" height="1.0" fill="#dcd4cc"/><rect x="4.0" y="75.7" width="0.9" height="0.9" fill="#dcd4cc"/><rect x="86.9" y="61.3" width="1.9" height="1.8" fill="#dcd4cc"/><rect x="23.6" y="21.9" width="1.4" height="1.9" fill="#dcd4cc"/><rect x="19.8" y="27.0" width="1.8" height="1.0" fill="#dcd4cc"/><rect x="97.0" y="14.4" width="1.5" height="0.8" fill="#dcd4cc"/><rect x="95.6" y="75.3" width="1.1" height="1.3" fill="#dcd4cc"/><rect x="42.3" y="41.6" width="1.0" height="1.6" fill="#dcd4cc"/><rect x="94.6" y="80.5" width="0.9" height="1.8" fill="#dcd4cc"/><rect x="49.6" y="68.5" width="0.9" height="1.5" fill="#dcd4cc"/><rect x="93.1" y="87.2" width="1.5" height="1.1" fill="#dcd4cc"/><rect x="21.3" y="61.1" width="0.9" height="1.1" fill="#dcd4cc"/><rect x="70.5" y="58.8" width="1.9" height="1.9" fill="#dcd4cc"/><rect x="83.3" y="52.4" width="1.2" height="1.4" fill="#dcd4cc"/><rect x="55.9" y="94.4" width="1.8" height="1.2" fill="#dcd4cc"/><rect x="104.6" y="75.8" width="0.8" height="1.7" fill="#dcd4cc"/><rect x="69.0" y="81.5" width="1.3" height="1.9" fill="#dcd4cc"/><rect x="107.0" y="41.5" width="2.0" height="1.9" fill="#dcd4cc"/><rect x="56.7" y="82.7" width="1.8" height="1.0" fill="#dcd4cc"/><rect x="88.0" y="26.1" width="1.9" height="1.0" fill="#dcd4cc"/><rect x="27.2" y="14.2" width="1.2" height="1.8" fill="#dcd4cc"/><rect x="20.3" y="37.0" width="1.4" height="1.9" fill="#dcd4cc"/><rect x="82.6" y="11.6" width="1.1" height="1.5" fill="#dcd4cc"/><rect x="9.2" y="10.2" width="1.0" height="1.3" fill="#dcd4cc"/><rect x="101.9" y="55.5" width="1.7" height="1.6" fill="#dcd4cc"/><rect x="54.0" y="11.4" width="0.8" height="0.9" fill="#dcd4cc"/><rect x="69.5" y="50.3" width="1.9" height="0.8" fill="#dcd4cc"/><rect x="87.3" y="17.6" width="1.6" height="1.1" fill="#dcd4cc"/>
<g fill="#d4e8b8" opacity="0.9">
<path d="M29,9 L43,10 L42,22.6 L30,22 Z"/>
<path d="M79,13.6 L90.5,14 L90,31.7 L80,31 Z"/>
<path d="M95,29.4 L110,29 L110,47.5 L96,46 Z"/>
<path d="M63,47.5 L79,48 L78,63.4 L64,62 Z"/>
<path d="M86,59 L110,60 L110,81.5 L88,80 Z" opacity="0.7"/>
<path d="M10,6 L24,5 L22,18 L12,16 Z" opacity="0.6"/>
<path d="M48,18 L60,16 L62,32 L50,34 Z" opacity="0.6"/>
</g>
<g fill="#c2e0a0"><path d="M82,16 L88,18 L88,28 L83,27 Z"/><path d="M32,12 L40,13 L39,20 L33,19 Z"/><path d="M66,50 L75,51 L74,60 L67,58 Z"/></g>
<path d="M0,18 L4.5,24.9 L13.6,29.4 L22.6,34 L29.4,39.6 L34,52 L40.7,61 L47.5,65.6 L52,72.4 L58.8,81.5 L65.6,90.5 L70,95 L0,95 Z" fill="#abd3de"/>
<path d="M29.4,39.6 L36,42 L44,48 L50,56 L52,66 L47.5,65.6 L40.7,61 L34,52 Z" fill="#cfe6b0" opacity="0.8"/>
<path d="M2.3,52 Q8,58 13.6,63.4 Q20,69 27,74.7 Q33,80 38.5,86 L45,95" fill="none" stroke="#8fb2c2" stroke-width="0.7"/>
<g fill="none" stroke="#e6c8c4" stroke-width="0.6" opacity="0.9">
<path d="M8,8 Q40,25 60,20 T110,30"/><path d="M45,0 L55,40 L50,66"/><path d="M60,30 L110,55"/><path d="M70,40 L75,95"/><path d="M25,40 L60,45 L100,85"/><path d="M0,12 L30,30"/>
</g>
<g fill="#b8a848">
<rect x="57" y="5.6" width="11" height="1"/><rect x="22.6" y="33.4" width="17" height="1"/>
<rect x="68" y="25.3" width="36" height="1"/><rect x="65.6" y="29.3" width="9" height="1"/>
<rect x="78" y="33.4" width="12.5" height="1"/><rect x="65.6" y="86" width="11.4" height="1"/>
</g>
<g fill="#a0d040"><circle cx="57.5" cy="6" r="1"/><circle cx="68" cy="25.5" r="1"/><circle cx="78" cy="33.8" r="1.1"/><circle cx="66" cy="29.8" r="0.9"/></g>
<rect x="0.5" y="0.5" width="109" height="94" fill="none" stroke="#b4c0cc" stroke-width="1"/></svg></div>
<div class="thumb" style="left:256px;top:215.7px"><svg viewBox="0 0 110 95" preserveAspectRatio="none">
<defs>
<pattern id="hg" width="3" height="3" patternUnits="userSpaceOnUse" patternTransform="rotate(45)"><rect width="3" height="3" fill="#bfe4b8"/><rect width="1.4" height="3" fill="#58b888"/></pattern>
<pattern id="hb" width="3.2" height="3.2" patternUnits="userSpaceOnUse" patternTransform="rotate(45)"><rect width="3.2" height="3.2" fill="#e8eef8"/><rect width="1.6" height="3.2" fill="#4a86d8"/></pattern>
<pattern id="hm" width="3.4" height="3.4" patternUnits="userSpaceOnUse" patternTransform="rotate(45)"><rect width="3.4" height="3.4" fill="#e8dcec"/><rect width="1.6" height="3.4" fill="#d62ac8"/></pattern>
<pattern id="dots" width="3" height="3" patternUnits="userSpaceOnUse"><rect width="3" height="3" fill="#eef0c8"/><rect width="1.5" height="1.5" fill="#f0b088"/></pattern>
</defs>
<rect width="110" height="95" fill="#e9f0c2"/>
<rect x="18" y="0" width="11" height="3.4" fill="#c0d8f0"/>
<rect x="95" y="13.6" width="15" height="18" fill="url(#dots)"/>
<path d="M0,13.6 L9,18 L15.8,27 L17,36 L13.6,45 L6.8,52 L0,54 Z" fill="url(#hg)"/>
<path d="M9,59 L18,59 L18,68 L9,68 Z" fill="#b8e6e8"/>
<path d="M49.8,0 L72.4,0 L73.6,18 L68,22.6 L56.6,15.8 L48.7,9 Z" fill="url(#hb)"/>
<path d="M36,0 L50,0 L48.7,9 L44,13.6 L37,13.6 Z" fill="#f2c676" stroke="#e85a28" stroke-width="0.6"/>
<path d="M34,15.8 L44,15.8 L47.5,34 L47.5,63.4 L49.8,74.7 L47.5,88.3 L38.5,90.5 L29.4,81.5 L25,68 L31.7,52 L34,34 Z" fill="url(#hb)"/>
<path d="M34,15.8 L44,15.8 L47.5,34 L47.5,63.4" fill="none" stroke="#3a6ad8" stroke-width="0.8"/>
<path d="M19,34 L25,22.6 L34,15.8 L36,29.4 L34,40.7 L29.4,43 Z" fill="#f2c676" stroke="#e85a28" stroke-width="0.9"/>
<path d="M49.8,31.7 L68,27 L79,29.4 L81.5,34 L81.5,40.7 L77,47.5 L79,59 L87,66 L60,66.5 L56.6,59 L52,45 Z" fill="url(#hm)"/>
<path d="M50.5,37 L50.5,31.7 L68,27 L79,29.4 L81.5,35" fill="none" stroke="#e02ad8" stroke-width="1.4"/>
<path d="M18,54.3 L27,52 L29.4,65.6 L20.4,65.6 Z" fill="url(#hm)"/>
<path d="M25,52 L31.7,52 L31.7,63.4 L27,63.4 Z" fill="#b8e8e8"/>
<g fill="#f2c070">
<path d="M29.4,56.6 L45,54.3 L49.8,68 L45,74.7 L34,77 L27,70 Z"/>
<path d="M47.5,45 L55,47.5 L58,60 L59.6,68 L54.3,70 L47.5,63.4 Z"/>
<path d="M77,38.5 L92.8,36 L99.6,40.7 L99.6,61 L90.5,65.6 L79,59 L77,47.5 Z"/>
<path d="M101.8,45 L110,40.7 L110,59 L99.6,61 Z"/>
<path d="M87,63 L110,60 L110,80 L92.7,83.4 L88.5,72 Z"/>
</g>
<g fill="none" stroke="#e8582a" stroke-width="0.7">
<path d="M92.8,36 L99.6,40.7 L99.6,50"/><path d="M104,44 L110,40.7"/><path d="M92.7,83.4 L110,80"/><path d="M29.4,56.6 L45,54.3"/>
</g>
<path d="M45,72 L59,68 L59,86 L47.5,90.5 Z" fill="url(#hb)"/>
<path d="M59,68 L83.7,65.6 L86,72.4 L81.5,79 L61,81.5 Z" fill="#b4a444"/>
<path d="M61,69 L67,68.5 L67,80.5 L61,81.5 Z" fill="#c8c070" opacity="0.8"/>
<path d="M45,86 L63.4,81.5 L86,79 L90.5,86 L88.3,95 L49.8,95 Z" fill="#8ed494"/>
<path d="M97,58 L109,54 L109,60 L98,62 Z" fill="#a8dc98"/><path d="M88,71 L92.7,72 L92.7,91 L88,91 Z" fill="#90d890"/>
<path d="M0,22.6 Q8,36 12.4,43 Q16,50 15.8,54.3 Q17,62 18,68 Q20,76 22.6,79 Q27,84 34,86 Q44,90 52,92.8" fill="none" stroke="#5a6262" stroke-width="2.8"/>
<path d="M0,22.6 Q8,36 12.4,43 Q16,50 15.8,54.3 Q17,62 18,68 Q20,76 22.6,79 Q27,84 34,86 Q44,90 52,92.8" fill="none" stroke="#dce2d8" stroke-width="1.3"/>
<circle cx="6" cy="40" r="2.2" fill="none" stroke="#9aa098" stroke-width="0.7"/><circle cx="11" cy="44" r="2" fill="none" stroke="#9aa098" stroke-width="0.7"/>
<path d="M45,12 Q58,20 75,26 Q90,32 100,38" fill="none" stroke="#7a8a78" stroke-width="0.6"/>
<path d="M79,0 L80,27" fill="none" stroke="#7a8a78" stroke-width="0.6"/>
<path d="M0,86 L29.4,74.7 L45,68" fill="none" stroke="#8a88d8" stroke-width="0.7"/>
<circle cx="13.6" cy="79" r="1.8" fill="#f0b850"/>
<path d="M0,55 L8,62 L12,70" fill="none" stroke="#8a9090" stroke-width="0.6"/>
<rect x="0.5" y="0.5" width="109" height="94" fill="none" stroke="#b4c0cc" stroke-width="1"/></svg></div>
<div class="thumb" style="left:372.2px;top:215.7px"><svg viewBox="0 0 110 95" preserveAspectRatio="none">
<rect width="110" height="95" fill="#f7f7f7"/>
<defs><clipPath id="t7c"><path d="M9,4.5 L19,4.5 L19,20.4 L6,20.4 Z M22.6,4.5 L38.5,4.5 L38.5,20.4 L22.6,20.4 Z M42,4.5 L54,4.5 L54,21.5 L42,21.5 Z M55.5,4.5 L64.5,4.5 L64.5,12.4 L55.5,12.4 Z M55.5,13.6 L64.5,13.6 L65,21.5 L55.5,21.5 Z M10,22.6 L19,22.6 L19,37 L14,38 Z M21.5,22.6 L36,22.6 L36,40.7 L21.5,40.7 Z M38.5,25 L52,25 L52,42 L38.5,42 Z M54.3,24 L65,24 L65,34 L54.3,34 Z M53,36 L63,36 L61,44 L53,44 Z M19,44 L47.5,43.5 L50,46 L38,52 L22,53 Z M50,47.5 L60,46 L57,56.6 L49,56.6 Z M0,46 L13,40 L27,84 L4,88 L0,86 Z M28,58 L48,50 L56,58 L44,70 L32,80 Z M97,6.8 L110,6.8 L110,95 L82,95 L92,70 Z"/></clipPath></defs>
<g fill="#c2c2c2">
<path d="M9,4.5 L19,4.5 L19,20.4 L6,20.4 Z"/>
<path d="M22.6,4.5 L38.5,4.5 L38.5,20.4 L22.6,20.4 Z"/>
<path d="M42,4.5 L54,4.5 L54,21.5 L42,21.5 Z"/>
<path d="M55.5,4.5 L64.5,4.5 L64.5,12.4 L55.5,12.4 Z"/>
<path d="M55.5,13.6 L64.5,13.6 L65,21.5 L55.5,21.5 Z"/>
<path d="M10,22.6 L19,22.6 L19,37 L14,38 Z"/>
<path d="M21.5,22.6 L36,22.6 L36,40.7 L21.5,40.7 Z"/>
<path d="M38.5,25 L52,25 L52,42 L38.5,42 Z"/>
<path d="M54.3,24 L65,24 L65,34 L54.3,34 Z"/>
<path d="M53,36 L63,36 L61,44 L53,44 Z"/>
<path d="M19,44 L47.5,43.5 L50,46 L38,52 L22,53 Z"/>
<path d="M50,47.5 L60,46 L57,56.6 L49,56.6 Z"/>
<path d="M0,24 L6,22 L12,40 L0,44 Z" fill="#d4d4d4"/>
<path d="M0,46 L13,40 L27,84 L4,88 L0,86 Z" fill="#bdbdbd"/>
<path d="M28,58 L48,50 L56,58 L44,70 L32,80 Z"/>
<path d="M25,54 L47,46 L28,57 Z" fill="#c0c0c0"/>
<path d="M97,6.8 L110,6.8 L110,95 L82,95 L92,70 Z" fill="#cbcbcb"/>
</g>
<g clip-path="url(#t7c)"><rect x="50.9" y="35.5" width="1.0" height="2.0" fill="#9a9a9a"/><rect x="37.2" y="44.1" width="1.6" height="1.3" fill="#9a9a9a"/><rect x="80.1" y="16.1" width="2.1" height="2.1" fill="#b4b4b4"/><rect x="17.3" y="22.6" width="1.0" height="1.5" fill="#9a9a9a"/><rect x="85.2" y="36.4" width="1.8" height="0.9" fill="#e8e8e8"/><rect x="22.5" y="21.3" width="1.9" height="2.0" fill="#e8e8e8"/><rect x="100.3" y="37.7" width="1.3" height="0.9" fill="#9a9a9a"/><rect x="96.7" y="5.2" width="1.3" height="1.5" fill="#9a9a9a"/><rect x="26.0" y="69.9" width="2.0" height="2.1" fill="#9a9a9a"/><rect x="13.3" y="55.0" width="2.1" height="1.1" fill="#9a9a9a"/><rect x="98.2" y="12.7" width="2.1" height="1.5" fill="#b4b4b4"/><rect x="59.1" y="18.8" width="0.9" height="1.1" fill="#9a9a9a"/><rect x="77.1" y="13.8" width="2.1" height="1.8" fill="#9a9a9a"/><rect x="6.0" y="52.7" width="1.6" height="1.0" fill="#e8e8e8"/><rect x="81.1" y="54.7" width="0.8" height="2.0" fill="#b4b4b4"/><rect x="104.6" y="22.5" width="1.7" height="0.9" fill="#e8e8e8"/><rect x="93.0" y="49.6" width="1.6" height="1.8" fill="#e8e8e8"/><rect x="12.1" y="83.8" width="1.3" height="1.1" fill="#a8a8a8"/><rect x="108.5" y="54.6" width="0.8" height="1.9" fill="#e8e8e8"/><rect x="0.1" y="10.6" width="1.1" height="1.2" fill="#9a9a9a"/><rect x="33.8" y="27.1" width="1.5" height="0.9" fill="#b4b4b4"/><rect x="85.9" y="76.7" width="1.5" height="1.8" fill="#a8a8a8"/><rect x="62.3" y="6.3" width="1.7" height="0.9" fill="#b4b4b4"/><rect x="56.1" y="90.8" width="1.6" height="1.0" fill="#e8e8e8"/><rect x="18.8" y="80.1" width="1.2" height="0.9" fill="#a8a8a8"/><rect x="28.9" y="15.6" width="1.0" height="1.0" fill="#9a9a9a"/><rect x="6.7" y="19.8" width="1.3" height="1.7" fill="#e8e8e8"/><rect x="31.4" y="45.7" width="1.2" height="2.1" fill="#e8e8e8"/><rect x="76.6" y="6.2" width="1.4" height="1.8" fill="#b4b4b4"/><rect x="64.7" y="76.3" width="1.7" height="1.2" fill="#b4b4b4"/><rect x="38.4" y="87.7" width="1.2" height="1.0" fill="#9a9a9a"/><rect x="17.8" y="75.0" width="2.0" height="1.1" fill="#b4b4b4"/><rect x="50.2" y="53.1" width="1.3" height="1.0" fill="#b4b4b4"/><rect x="65.2" y="24.9" width="0.9" height="1.7" fill="#b4b4b4"/><rect x="59.9" y="49.7" width="1.6" height="2.1" fill="#9a9a9a"/><rect x="96.5" y="54.5" width="2.1" height="0.9" fill="#a8a8a8"/><rect x="79.3" y="9.8" width="1.8" height="1.4" fill="#b4b4b4"/><rect x="97.8" y="69.1" width="1.8" height="0.8" fill="#a8a8a8"/><rect x="96.7" y="22.0" width="2.0" height="1.8" fill="#b4b4b4"/><rect x="96.3" y="3.4" width="1.6" height="1.7" fill="#b4b4b4"/><rect x="44.7" y="6.6" width="1.1" height="1.7" fill="#a8a8a8"/><rect x="9.3" y="2.8" width="1.7" height="1.6" fill="#b4b4b4"/><rect x="2.9" y="73.7" width="1.3" height="1.9" fill="#9a9a9a"/><rect x="51.0" y="42.7" width="1.0" height="1.3" fill="#b4b4b4"/><rect x="91.6" y="10.1" width="1.3" height="1.1" fill="#a8a8a8"/><rect x="21.1" y="21.0" width="1.0" height="1.0" fill="#9a9a9a"/><rect x="41.0" y="70.4" width="1.5" height="1.5" fill="#e8e8e8"/><rect x="96.2" y="7.7" width="0.8" height="1.9" fill="#a8a8a8"/><rect x="1.7" y="24.1" width="1.7" height="2.1" fill="#b4b4b4"/><rect x="6.4" y="23.9" width="2.0" height="1.6" fill="#a8a8a8"/><rect x="70.3" y="64.7" width="1.0" height="0.9" fill="#a8a8a8"/><rect x="107.3" y="74.7" width="2.1" height="2.1" fill="#e8e8e8"/><rect x="106.4" y="9.0" width="1.2" height="1.1" fill="#e8e8e8"/><rect x="54.1" y="33.0" width="2.0" height="1.4" fill="#a8a8a8"/><rect x="8.6" y="28.6" width="1.5" height="2.1" fill="#b4b4b4"/><rect x="48.4" y="17.7" width="1.4" height="1.3" fill="#a8a8a8"/><rect x="34.9" y="2.6" width="1.1" height="1.3" fill="#a8a8a8"/><rect x="103.8" y="8.2" width="2.2" height="2.1" fill="#b4b4b4"/><rect x="23.2" y="51.5" width="1.3" height="0.8" fill="#b4b4b4"/><rect x="51.8" y="82.4" width="1.3" height="2.0" fill="#9a9a9a"/><rect x="51.0" y="0.3" width="2.1" height="1.1" fill="#a8a8a8"/><rect x="1.2" y="87.5" width="0.9" height="1.0" fill="#a8a8a8"/><rect x="76.3" y="48.4" width="1.9" height="1.4" fill="#b4b4b4"/><rect x="42.8" y="55.7" width="2.0" height="1.5" fill="#e8e8e8"/><rect x="39.5" y="25.6" width="1.2" height="1.3" fill="#a8a8a8"/><rect x="87.9" y="73.8" width="1.0" height="1.0" fill="#e8e8e8"/><rect x="75.3" y="1.9" width="1.5" height="2.0" fill="#b4b4b4"/><rect x="99.9" y="71.7" width="1.2" height="1.0" fill="#b4b4b4"/><rect x="52.7" y="94.4" width="1.1" height="1.0" fill="#e8e8e8"/><rect x="81.8" y="4.8" width="1.2" height="1.3" fill="#a8a8a8"/><rect x="59.2" y="90.3" width="1.9" height="1.4" fill="#e8e8e8"/><rect x="23.2" y="51.6" width="2.1" height="1.1" fill="#a8a8a8"/><rect x="92.3" y="54.0" width="0.8" height="1.6" fill="#9a9a9a"/><rect x="103.0" y="68.0" width="1.5" height="0.9" fill="#b4b4b4"/><rect x="97.5" y="41.6" width="1.8" height="1.1" fill="#9a9a9a"/><rect x="101.0" y="91.6" width="0.9" height="1.3" fill="#a8a8a8"/><rect x="84.4" y="92.1" width="1.1" height="1.5" fill="#e8e8e8"/><rect x="73.7" y="92.6" width="1.0" height="0.9" fill="#a8a8a8"/><rect x="72.3" y="32.2" width="1.8" height="1.3" fill="#b4b4b4"/><rect x="4.0" y="38.6" width="1.9" height="1.4" fill="#9a9a9a"/><rect x="34.6" y="79.7" width="2.0" height="1.8" fill="#b4b4b4"/><rect x="92.9" y="75.0" width="2.1" height="1.0" fill="#b4b4b4"/><rect x="3.6" y="94.9" width="1.0" height="1.4" fill="#a8a8a8"/><rect x="92.0" y="63.2" width="1.7" height="1.5" fill="#b4b4b4"/><rect x="57.2" y="24.1" width="1.7" height="2.1" fill="#e8e8e8"/><rect x="59.1" y="94.8" width="1.8" height="1.7" fill="#b4b4b4"/><rect x="34.3" y="80.9" width="1.1" height="0.8" fill="#b4b4b4"/><rect x="79.3" y="24.2" width="1.2" height="0.8" fill="#b4b4b4"/><rect x="103.0" y="35.2" width="1.7" height="1.3" fill="#a8a8a8"/><rect x="60.8" y="2.8" width="1.8" height="1.1" fill="#9a9a9a"/><rect x="23.2" y="24.5" width="2.0" height="1.4" fill="#e8e8e8"/><rect x="61.3" y="67.0" width="0.9" height="1.8" fill="#b4b4b4"/><rect x="103.7" y="5.6" width="1.6" height="1.5" fill="#b4b4b4"/><rect x="40.1" y="62.9" width="2.1" height="1.3" fill="#b4b4b4"/><rect x="3.8" y="92.5" width="1.2" height="1.4" fill="#e8e8e8"/><rect x="48.0" y="92.9" width="1.4" height="1.9" fill="#9a9a9a"/><rect x="96.8" y="78.0" width="1.8" height="1.1" fill="#e8e8e8"/><rect x="40.1" y="35.6" width="2.2" height="1.9" fill="#a8a8a8"/><rect x="7.0" y="11.2" width="1.8" height="1.3" fill="#b4b4b4"/><rect x="2.1" y="41.4" width="1.3" height="2.1" fill="#b4b4b4"/><rect x="18.6" y="2.8" width="1.2" height="0.8" fill="#9a9a9a"/><rect x="65.2" y="0.6" width="1.4" height="0.9" fill="#e8e8e8"/><rect x="76.0" y="84.3" width="2.2" height="0.9" fill="#e8e8e8"/><rect x="15.8" y="70.8" width="2.0" height="1.1" fill="#b4b4b4"/><rect x="31.3" y="69.3" width="1.9" height="1.5" fill="#e8e8e8"/><rect x="107.7" y="48.1" width="2.0" height="0.9" fill="#b4b4b4"/><rect x="90.3" y="7.7" width="1.9" height="2.0" fill="#e8e8e8"/><rect x="8.2" y="45.4" width="1.6" height="1.5" fill="#a8a8a8"/><rect x="109.1" y="46.4" width="1.4" height="1.5" fill="#9a9a9a"/><rect x="63.5" y="1.2" width="1.2" height="1.8" fill="#9a9a9a"/><rect x="94.6" y="54.1" width="1.2" height="1.6" fill="#e8e8e8"/><rect x="0.7" y="82.9" width="1.5" height="1.4" fill="#e8e8e8"/><rect x="35.6" y="16.7" width="1.8" height="1.2" fill="#e8e8e8"/><rect x="36.4" y="7.8" width="1.9" height="2.1" fill="#e8e8e8"/><rect x="100.0" y="91.3" width="1.2" height="1.9" fill="#b4b4b4"/><rect x="88.9" y="6.6" width="1.4" height="1.4" fill="#b4b4b4"/><rect x="49.7" y="4.0" width="1.1" height="2.0" fill="#9a9a9a"/><rect x="63.1" y="7.6" width="1.9" height="2.0" fill="#e8e8e8"/><rect x="1.0" y="84.5" width="1.9" height="1.4" fill="#a8a8a8"/><rect x="17.5" y="8.3" width="2.1" height="0.9" fill="#a8a8a8"/><rect x="27.6" y="35.4" width="1.1" height="1.8" fill="#a8a8a8"/><rect x="54.2" y="51.1" width="1.4" height="1.8" fill="#e8e8e8"/><rect x="51.3" y="38.3" width="0.9" height="1.2" fill="#a8a8a8"/><rect x="80.0" y="17.5" width="0.8" height="1.6" fill="#a8a8a8"/><rect x="50.1" y="11.6" width="0.9" height="1.7" fill="#b4b4b4"/><rect x="60.1" y="77.4" width="1.0" height="1.3" fill="#a8a8a8"/><rect x="39.4" y="88.4" width="0.9" height="0.9" fill="#e8e8e8"/><rect x="62.1" y="89.9" width="1.7" height="1.7" fill="#9a9a9a"/><rect x="68.9" y="24.4" width="1.6" height="1.0" fill="#9a9a9a"/><rect x="32.3" y="19.6" width="1.7" height="1.4" fill="#9a9a9a"/><rect x="2.9" y="53.7" width="1.9" height="0.8" fill="#a8a8a8"/><rect x="67.0" y="59.6" width="1.4" height="1.4" fill="#e8e8e8"/><rect x="64.7" y="45.5" width="1.4" height="1.2" fill="#a8a8a8"/><rect x="15.6" y="50.4" width="0.8" height="2.1" fill="#9a9a9a"/><rect x="62.4" y="61.3" width="1.7" height="0.8" fill="#b4b4b4"/><rect x="96.2" y="70.9" width="1.5" height="2.0" fill="#e8e8e8"/><rect x="21.9" y="64.2" width="1.7" height="1.8" fill="#9a9a9a"/><rect x="21.1" y="72.3" width="1.8" height="1.8" fill="#9a9a9a"/><rect x="93.6" y="67.7" width="0.9" height="1.8" fill="#a8a8a8"/><rect x="33.0" y="81.5" width="1.2" height="0.9" fill="#a8a8a8"/><rect x="73.9" y="48.7" width="0.9" height="0.9" fill="#e8e8e8"/><rect x="4.1" y="78.9" width="1.1" height="1.6" fill="#e8e8e8"/><rect x="65.1" y="9.4" width="2.1" height="2.0" fill="#e8e8e8"/><rect x="15.8" y="3.9" width="1.8" height="2.0" fill="#e8e8e8"/><rect x="76.7" y="88.4" width="2.1" height="1.6" fill="#a8a8a8"/><rect x="2.8" y="5.0" width="0.8" height="1.7" fill="#9a9a9a"/><rect x="14.4" y="94.4" width="1.7" height="1.6" fill="#b4b4b4"/><rect x="58.6" y="30.2" width="1.8" height="1.4" fill="#b4b4b4"/><rect x="24.7" y="44.7" width="1.2" height="0.9" fill="#a8a8a8"/><rect x="15.6" y="15.1" width="1.0" height="1.3" fill="#a8a8a8"/><rect x="36.8" y="59.2" width="1.7" height="1.0" fill="#e8e8e8"/><rect x="7.7" y="24.5" width="2.0" height="1.0" fill="#e8e8e8"/><rect x="48.5" y="20.2" width="1.9" height="1.4" fill="#e8e8e8"/><rect x="70.5" y="78.8" width="1.5" height="1.2" fill="#a8a8a8"/><rect x="21.9" y="83.4" width="2.0" height="1.3" fill="#9a9a9a"/><rect x="86.8" y="43.1" width="1.9" height="1.7" fill="#9a9a9a"/><rect x="82.0" y="17.3" width="1.8" height="1.4" fill="#9a9a9a"/><rect x="105.8" y="73.8" width="1.4" height="0.8" fill="#b4b4b4"/><rect x="5.6" y="40.7" width="1.3" height="1.7" fill="#9a9a9a"/><rect x="46.3" y="7.5" width="1.5" height="1.3" fill="#9a9a9a"/><rect x="77.6" y="82.3" width="1.4" height="0.9" fill="#e8e8e8"/><rect x="47.1" y="33.9" width="1.6" height="1.8" fill="#b4b4b4"/><rect x="37.5" y="90.6" width="0.8" height="1.1" fill="#9a9a9a"/><rect x="105.8" y="94.7" width="1.8" height="1.6" fill="#9a9a9a"/><rect x="38.3" y="45.9" width="1.7" height="2.1" fill="#e8e8e8"/><rect x="99.0" y="23.3" width="1.6" height="1.3" fill="#9a9a9a"/><rect x="103.6" y="6.4" width="1.6" height="1.2" fill="#a8a8a8"/><rect x="42.7" y="48.1" width="1.3" height="1.6" fill="#e8e8e8"/><rect x="20.0" y="5.7" width="1.9" height="2.0" fill="#e8e8e8"/><rect x="93.7" y="85.7" width="1.9" height="1.1" fill="#a8a8a8"/><rect x="102.9" y="64.4" width="1.6" height="1.6" fill="#e8e8e8"/><rect x="101.2" y="15.9" width="1.0" height="1.0" fill="#9a9a9a"/><rect x="2.2" y="90.2" width="1.1" height="1.1" fill="#b4b4b4"/><rect x="24.4" y="5.8" width="2.0" height="1.3" fill="#e8e8e8"/><rect x="85.8" y="81.0" width="1.9" height="1.1" fill="#e8e8e8"/><rect x="40.7" y="71.7" width="0.9" height="1.3" fill="#9a9a9a"/><rect x="71.9" y="60.5" width="0.8" height="1.0" fill="#a8a8a8"/><rect x="34.2" y="62.6" width="1.8" height="1.9" fill="#b4b4b4"/><rect x="81.8" y="61.0" width="1.4" height="2.2" fill="#b4b4b4"/><rect x="27.1" y="48.9" width="1.6" height="1.7" fill="#9a9a9a"/><rect x="79.2" y="4.8" width="1.5" height="1.5" fill="#9a9a9a"/><rect x="11.8" y="67.2" width="0.9" height="0.9" fill="#9a9a9a"/><rect x="103.0" y="61.4" width="2.1" height="1.6" fill="#b4b4b4"/><rect x="66.6" y="20.7" width="1.6" height="1.8" fill="#9a9a9a"/><rect x="26.3" y="16.2" width="1.1" height="0.9" fill="#9a9a9a"/><rect x="100.2" y="84.7" width="1.5" height="1.4" fill="#9a9a9a"/><rect x="31.2" y="2.5" width="0.8" height="2.0" fill="#e8e8e8"/><rect x="61.5" y="36.7" width="1.3" height="0.9" fill="#9a9a9a"/><rect x="68.6" y="11.1" width="1.3" height="1.0" fill="#9a9a9a"/><rect x="80.3" y="71.7" width="1.0" height="1.7" fill="#a8a8a8"/><rect x="107.5" y="4.6" width="1.3" height="1.1" fill="#9a9a9a"/><rect x="23.6" y="33.2" width="1.2" height="1.8" fill="#b4b4b4"/><rect x="103.1" y="83.0" width="2.1" height="0.9" fill="#9a9a9a"/><rect x="36.5" y="34.2" width="1.1" height="1.9" fill="#a8a8a8"/><rect x="50.4" y="47.1" width="1.5" height="1.6" fill="#a8a8a8"/><rect x="100.4" y="7.4" width="1.5" height="1.0" fill="#9a9a9a"/><rect x="92.6" y="35.7" width="0.8" height="0.9" fill="#a8a8a8"/><rect x="90.1" y="48.9" width="0.9" height="0.9" fill="#a8a8a8"/><rect x="50.4" y="3.3" width="1.9" height="2.1" fill="#e8e8e8"/><rect x="64.6" y="65.3" width="0.9" height="2.2" fill="#9a9a9a"/><rect x="7.0" y="66.6" width="1.7" height="1.4" fill="#e8e8e8"/><rect x="102.5" y="64.8" width="1.5" height="2.2" fill="#e8e8e8"/><rect x="85.4" y="52.8" width="1.9" height="1.9" fill="#b4b4b4"/><rect x="82.9" y="83.7" width="1.0" height="1.5" fill="#b4b4b4"/><rect x="4.2" y="88.2" width="2.1" height="1.0" fill="#a8a8a8"/><rect x="2.8" y="84.7" width="1.4" height="1.1" fill="#a8a8a8"/><rect x="29.9" y="50.6" width="0.8" height="2.2" fill="#a8a8a8"/><rect x="79.0" y="79.9" width="1.4" height="1.4" fill="#a8a8a8"/><rect x="59.1" y="0.7" width="1.5" height="2.0" fill="#9a9a9a"/><rect x="20.8" y="53.7" width="0.8" height="1.8" fill="#a8a8a8"/><rect x="106.6" y="86.9" width="2.0" height="1.2" fill="#b4b4b4"/><rect x="96.0" y="0.8" width="0.9" height="2.2" fill="#9a9a9a"/><rect x="77.5" y="75.4" width="1.1" height="2.1" fill="#a8a8a8"/><rect x="97.0" y="61.5" width="1.0" height="2.0" fill="#e8e8e8"/><rect x="47.7" y="32.3" width="1.7" height="1.8" fill="#e8e8e8"/><rect x="79.3" y="38.5" width="1.9" height="1.8" fill="#a8a8a8"/><rect x="66.3" y="64.2" width="1.2" height="2.1" fill="#b4b4b4"/><rect x="95.1" y="74.6" width="1.8" height="1.0" fill="#b4b4b4"/><rect x="30.3" y="3.3" width="1.6" height="1.6" fill="#e8e8e8"/><rect x="96.6" y="1.6" width="1.6" height="1.0" fill="#9a9a9a"/><rect x="48.1" y="80.3" width="1.4" height="1.9" fill="#b4b4b4"/><rect x="51.2" y="22.3" width="1.8" height="2.0" fill="#b4b4b4"/><rect x="39.0" y="43.8" width="1.1" height="1.0" fill="#e8e8e8"/><rect x="94.1" y="38.6" width="1.7" height="1.6" fill="#b4b4b4"/><rect x="43.4" y="64.0" width="2.1" height="0.9" fill="#e8e8e8"/><rect x="76.0" y="41.8" width="0.9" height="1.5" fill="#a8a8a8"/><rect x="97.0" y="41.5" width="1.7" height="1.8" fill="#e8e8e8"/><rect x="2.8" y="31.3" width="1.0" height="1.6" fill="#e8e8e8"/><rect x="83.3" y="9.9" width="2.1" height="1.7" fill="#9a9a9a"/><rect x="49.5" y="63.0" width="1.6" height="1.4" fill="#b4b4b4"/><rect x="99.6" y="60.0" width="1.9" height="1.3" fill="#e8e8e8"/><rect x="70.9" y="60.9" width="1.4" height="1.0" fill="#b4b4b4"/><rect x="20.0" y="24.3" width="1.1" height="0.9" fill="#a8a8a8"/><rect x="70.4" y="90.4" width="1.8" height="1.9" fill="#9a9a9a"/><rect x="109.9" y="52.2" width="1.3" height="1.7" fill="#9a9a9a"/><rect x="102.9" y="79.0" width="2.0" height="0.8" fill="#e8e8e8"/><rect x="67.3" y="71.5" width="1.0" height="1.8" fill="#b4b4b4"/><rect x="3.4" y="22.7" width="1.4" height="1.7" fill="#b4b4b4"/><rect x="97.6" y="48.3" width="1.2" height="2.0" fill="#a8a8a8"/><rect x="73.4" y="59.9" width="1.4" height="1.6" fill="#e8e8e8"/><rect x="82.3" y="47.6" width="1.8" height="1.4" fill="#9a9a9a"/><rect x="72.7" y="64.0" width="2.1" height="2.0" fill="#b4b4b4"/><rect x="43.3" y="55.5" width="1.0" height="1.8" fill="#9a9a9a"/><rect x="33.1" y="44.4" width="1.4" height="1.6" fill="#9a9a9a"/><rect x="102.0" y="57.3" width="1.3" height="1.0" fill="#9a9a9a"/><rect x="3.7" y="2.9" width="1.4" height="1.1" fill="#9a9a9a"/><rect x="89.5" y="86.0" width="2.2" height="2.1" fill="#a8a8a8"/><rect x="4.0" y="54.9" width="1.9" height="1.9" fill="#9a9a9a"/><rect x="69.6" y="93.3" width="1.3" height="1.4" fill="#a8a8a8"/><rect x="74.2" y="89.9" width="1.2" height="1.2" fill="#9a9a9a"/><rect x="71.3" y="11.3" width="1.6" height="1.0" fill="#e8e8e8"/><rect x="27.5" y="4.8" width="1.4" height="1.1" fill="#a8a8a8"/><rect x="82.4" y="94.7" width="1.7" height="1.5" fill="#b4b4b4"/><rect x="5.1" y="11.3" width="2.0" height="1.3" fill="#e8e8e8"/><rect x="70.6" y="8.4" width="2.2" height="1.3" fill="#b4b4b4"/><rect x="10.9" y="9.4" width="1.4" height="1.9" fill="#b4b4b4"/><rect x="77.3" y="16.4" width="2.1" height="1.0" fill="#a8a8a8"/><rect x="51.8" y="52.6" width="1.6" height="1.3" fill="#b4b4b4"/><rect x="106.8" y="74.2" width="1.6" height="1.5" fill="#a8a8a8"/><rect x="105.8" y="38.3" width="1.2" height="1.8" fill="#a8a8a8"/><rect x="106.7" y="93.1" width="1.9" height="2.0" fill="#b4b4b4"/><rect x="34.1" y="1.3" width="0.9" height="1.3" fill="#e8e8e8"/><rect x="63.2" y="66.3" width="2.0" height="1.0" fill="#a8a8a8"/><rect x="50.9" y="83.3" width="1.0" height="1.9" fill="#e8e8e8"/><rect x="99.3" y="7.4" width="2.2" height="1.4" fill="#b4b4b4"/><rect x="42.1" y="89.1" width="1.9" height="1.8" fill="#9a9a9a"/><rect x="75.3" y="37.7" width="1.9" height="1.3" fill="#9a9a9a"/><rect x="1.4" y="43.1" width="1.2" height="1.0" fill="#e8e8e8"/><rect x="102.9" y="11.7" width="1.9" height="0.9" fill="#a8a8a8"/><rect x="21.5" y="31.5" width="1.1" height="1.9" fill="#9a9a9a"/><rect x="99.4" y="22.6" width="2.1" height="1.7" fill="#9a9a9a"/><rect x="101.2" y="15.1" width="1.4" height="1.6" fill="#9a9a9a"/><rect x="108.5" y="22.4" width="1.2" height="1.9" fill="#e8e8e8"/><rect x="64.1" y="26.6" width="1.9" height="1.2" fill="#a8a8a8"/><rect x="59.8" y="74.2" width="1.7" height="1.7" fill="#9a9a9a"/><rect x="16.6" y="77.4" width="1.3" height="1.7" fill="#a8a8a8"/><rect x="101.2" y="18.9" width="2.0" height="1.2" fill="#9a9a9a"/><rect x="57.2" y="62.8" width="1.6" height="1.8" fill="#a8a8a8"/><rect x="24.3" y="94.4" width="1.3" height="2.1" fill="#9a9a9a"/><rect x="8.5" y="22.1" width="1.7" height="0.8" fill="#a8a8a8"/><rect x="43.4" y="11.1" width="2.2" height="1.2" fill="#9a9a9a"/><rect x="40.0" y="34.6" width="1.0" height="1.6" fill="#e8e8e8"/><rect x="82.1" y="82.0" width="2.0" height="1.3" fill="#a8a8a8"/><rect x="71.1" y="90.4" width="1.9" height="1.5" fill="#e8e8e8"/><rect x="97.5" y="2.8" width="1.7" height="1.9" fill="#e8e8e8"/><rect x="79.8" y="45.1" width="1.9" height="1.8" fill="#e8e8e8"/><rect x="98.4" y="32.4" width="1.7" height="2.1" fill="#a8a8a8"/><rect x="23.6" y="31.5" width="2.1" height="0.8" fill="#b4b4b4"/><rect x="58.5" y="54.1" width="1.3" height="1.8" fill="#e8e8e8"/><rect x="7.3" y="38.6" width="1.5" height="1.3" fill="#b4b4b4"/><rect x="78.9" y="61.7" width="0.9" height="0.9" fill="#a8a8a8"/><rect x="87.2" y="6.7" width="2.0" height="1.2" fill="#9a9a9a"/><rect x="20.6" y="62.0" width="1.6" height="1.9" fill="#e8e8e8"/><rect x="49.9" y="17.8" width="1.0" height="1.3" fill="#b4b4b4"/><rect x="70.8" y="44.2" width="1.9" height="1.5" fill="#a8a8a8"/><rect x="101.0" y="3.0" width="2.1" height="1.9" fill="#a8a8a8"/><rect x="105.7" y="15.1" width="1.6" height="1.3" fill="#e8e8e8"/><rect x="16.2" y="22.0" width="1.8" height="0.8" fill="#9a9a9a"/><rect x="74.1" y="69.5" width="1.2" height="1.0" fill="#9a9a9a"/><rect x="6.5" y="1.6" width="1.5" height="1.4" fill="#e8e8e8"/><rect x="14.7" y="19.2" width="1.6" height="1.6" fill="#b4b4b4"/><rect x="37.3" y="26.6" width="1.3" height="1.1" fill="#b4b4b4"/><rect x="3.8" y="37.7" width="1.3" height="2.0" fill="#e8e8e8"/><rect x="23.4" y="46.5" width="1.2" height="1.2" fill="#a8a8a8"/><rect x="92.2" y="77.9" width="2.0" height="2.0" fill="#a8a8a8"/><rect x="82.4" y="53.7" width="2.1" height="1.4" fill="#e8e8e8"/><rect x="46.2" y="70.9" width="2.0" height="2.1" fill="#a8a8a8"/><rect x="76.4" y="33.6" width="1.0" height="1.3" fill="#e8e8e8"/><rect x="52.9" y="59.7" width="0.8" height="1.5" fill="#b4b4b4"/><rect x="48.4" y="60.9" width="2.0" height="1.9" fill="#b4b4b4"/><rect x="97.6" y="36.2" width="1.8" height="1.5" fill="#b4b4b4"/><rect x="35.0" y="57.9" width="2.2" height="2.0" fill="#a8a8a8"/><rect x="104.9" y="80.0" width="2.2" height="1.4" fill="#b4b4b4"/><rect x="61.3" y="2.8" width="2.1" height="2.0" fill="#a8a8a8"/><rect x="98.0" y="76.4" width="2.0" height="1.2" fill="#e8e8e8"/><rect x="78.0" y="15.7" width="1.9" height="1.9" fill="#b4b4b4"/><rect x="30.2" y="14.9" width="1.0" height="1.2" fill="#a8a8a8"/><rect x="47.7" y="1.2" width="0.9" height="2.1" fill="#a8a8a8"/><rect x="53.8" y="86.7" width="2.0" height="1.5" fill="#b4b4b4"/><rect x="10.6" y="15.1" width="1.3" height="1.1" fill="#e8e8e8"/><rect x="51.5" y="2.0" width="1.3" height="1.7" fill="#e8e8e8"/><rect x="12.8" y="28.7" width="2.1" height="1.2" fill="#9a9a9a"/><rect x="65.6" y="37.1" width="1.0" height="1.5" fill="#a8a8a8"/><rect x="3.8" y="35.5" width="1.2" height="1.9" fill="#e8e8e8"/><rect x="11.6" y="8.6" width="1.4" height="1.3" fill="#e8e8e8"/><rect x="102.9" y="44.1" width="1.8" height="2.2" fill="#a8a8a8"/><rect x="91.3" y="30.2" width="1.5" height="1.0" fill="#a8a8a8"/><rect x="78.0" y="92.4" width="1.0" height="1.6" fill="#b4b4b4"/><rect x="38.6" y="54.4" width="2.1" height="1.3" fill="#a8a8a8"/><rect x="90.2" y="33.4" width="2.1" height="1.6" fill="#a8a8a8"/><rect x="55.5" y="66.1" width="1.4" height="1.8" fill="#9a9a9a"/><rect x="46.2" y="68.3" width="2.0" height="1.8" fill="#a8a8a8"/><rect x="4.0" y="62.6" width="0.9" height="1.0" fill="#b4b4b4"/><rect x="92.1" y="90.7" width="0.9" height="1.2" fill="#9a9a9a"/><rect x="63.5" y="71.4" width="2.0" height="2.0" fill="#a8a8a8"/><rect x="77.5" y="12.0" width="1.9" height="1.7" fill="#e8e8e8"/><rect x="70.6" y="74.3" width="1.8" height="1.3" fill="#e8e8e8"/><rect x="104.7" y="77.3" width="1.6" height="1.4" fill="#9a9a9a"/><rect x="18.8" y="73.8" width="1.1" height="1.3" fill="#a8a8a8"/><rect x="23.9" y="27.0" width="1.7" height="0.9" fill="#e8e8e8"/><rect x="108.5" y="25.6" width="1.8" height="1.5" fill="#b4b4b4"/><rect x="24.2" y="18.2" width="2.2" height="1.3" fill="#e8e8e8"/><rect x="30.8" y="17.2" width="1.3" height="0.9" fill="#b4b4b4"/><rect x="44.7" y="3.8" width="1.6" height="2.0" fill="#9a9a9a"/><rect x="109.5" y="29.9" width="1.2" height="1.8" fill="#b4b4b4"/><rect x="43.3" y="24.8" width="1.6" height="1.3" fill="#e8e8e8"/><rect x="33.5" y="38.9" width="1.4" height="1.5" fill="#e8e8e8"/><rect x="75.5" y="47.6" width="1.5" height="0.9" fill="#b4b4b4"/><rect x="24.9" y="12.6" width="0.9" height="1.6" fill="#9a9a9a"/><rect x="88.3" y="82.6" width="1.1" height="1.9" fill="#e8e8e8"/><rect x="53.5" y="53.8" width="2.0" height="1.5" fill="#e8e8e8"/><rect x="54.3" y="72.5" width="1.5" height="1.3" fill="#b4b4b4"/><rect x="47.0" y="11.3" width="1.7" height="1.7" fill="#9a9a9a"/><rect x="88.0" y="31.5" width="1.7" height="1.0" fill="#9a9a9a"/><rect x="31.8" y="28.9" width="1.3" height="1.0" fill="#a8a8a8"/><rect x="10.3" y="28.3" width="0.8" height="1.9" fill="#9a9a9a"/><rect x="81.4" y="23.4" width="1.3" height="1.7" fill="#9a9a9a"/><rect x="85.7" y="70.0" width="1.8" height="1.1" fill="#e8e8e8"/><rect x="96.2" y="63.9" width="1.5" height="1.0" fill="#a8a8a8"/><rect x="56.3" y="65.5" width="0.9" height="2.1" fill="#a8a8a8"/><rect x="95.8" y="8.3" width="0.9" height="1.8" fill="#b4b4b4"/><rect x="41.9" y="4.1" width="1.3" height="2.0" fill="#b4b4b4"/><rect x="5.4" y="49.9" width="1.7" height="1.6" fill="#b4b4b4"/><rect x="101.0" y="85.0" width="1.2" height="0.8" fill="#9a9a9a"/><rect x="107.7" y="79.8" width="1.9" height="1.9" fill="#9a9a9a"/><rect x="0.6" y="45.9" width="1.1" height="1.3" fill="#e8e8e8"/><rect x="58.6" y="25.9" width="0.9" height="1.4" fill="#9a9a9a"/><rect x="44.0" y="49.2" width="0.9" height="1.5" fill="#a8a8a8"/><rect x="27.2" y="92.9" width="1.8" height="1.2" fill="#a8a8a8"/><rect x="58.4" y="84.6" width="1.5" height="2.0" fill="#9a9a9a"/><rect x="96.6" y="46.5" width="1.9" height="2.0" fill="#b4b4b4"/><rect x="69.3" y="64.6" width="2.1" height="1.7" fill="#b4b4b4"/><rect x="62.6" y="76.0" width="2.0" height="1.0" fill="#e8e8e8"/><rect x="43.6" y="61.3" width="1.9" height="0.9" fill="#b4b4b4"/><rect x="57.3" y="64.7" width="1.4" height="1.5" fill="#b4b4b4"/><rect x="105.3" y="63.2" width="1.8" height="1.6" fill="#b4b4b4"/><rect x="94.4" y="48.4" width="0.9" height="1.4" fill="#e8e8e8"/><rect x="97.8" y="9.3" width="1.1" height="1.9" fill="#9a9a9a"/><rect x="58.5" y="45.5" width="0.8" height="1.4" fill="#a8a8a8"/><rect x="96.4" y="52.2" width="1.1" height="2.1" fill="#a8a8a8"/><rect x="49.0" y="62.0" width="2.0" height="0.9" fill="#e8e8e8"/><rect x="29.1" y="0.0" width="1.9" height="1.5" fill="#a8a8a8"/><rect x="15.4" y="2.0" width="1.9" height="2.1" fill="#e8e8e8"/><rect x="79.4" y="15.4" width="1.2" height="1.6" fill="#a8a8a8"/><rect x="19.8" y="89.4" width="1.2" height="1.0" fill="#e8e8e8"/><rect x="58.6" y="52.3" width="1.8" height="1.6" fill="#b4b4b4"/><rect x="9.0" y="93.9" width="1.9" height="1.3" fill="#b4b4b4"/><rect x="10.1" y="76.8" width="0.9" height="1.7" fill="#a8a8a8"/><rect x="93.4" y="63.5" width="1.4" height="1.1" fill="#9a9a9a"/><rect x="43.8" y="10.7" width="0.9" height="1.7" fill="#a8a8a8"/><rect x="101.8" y="52.6" width="0.9" height="1.8" fill="#9a9a9a"/><rect x="94.5" y="36.1" width="1.9" height="1.5" fill="#9a9a9a"/><rect x="30.6" y="83.2" width="0.9" height="1.0" fill="#e8e8e8"/><rect x="99.9" y="64.2" width="2.1" height="1.1" fill="#e8e8e8"/><rect x="33.2" y="49.3" width="0.9" height="1.2" fill="#b4b4b4"/><rect x="107.7" y="53.9" width="2.1" height="1.2" fill="#b4b4b4"/><rect x="83.0" y="89.9" width="1.1" height="1.6" fill="#9a9a9a"/><rect x="84.1" y="57.0" width="1.4" height="2.0" fill="#e8e8e8"/><rect x="18.3" y="79.2" width="1.2" height="1.9" fill="#a8a8a8"/><rect x="30.8" y="36.6" width="1.6" height="1.9" fill="#a8a8a8"/><rect x="11.5" y="6.6" width="1.9" height="1.6" fill="#9a9a9a"/><rect x="47.1" y="41.9" width="2.1" height="1.5" fill="#e8e8e8"/><rect x="0.1" y="39.9" width="1.1" height="1.8" fill="#e8e8e8"/><rect x="45.3" y="36.8" width="0.8" height="1.4" fill="#9a9a9a"/><rect x="10.1" y="40.7" width="1.5" height="1.3" fill="#b4b4b4"/><rect x="64.6" y="20.9" width="1.4" height="1.4" fill="#e8e8e8"/><rect x="14.3" y="52.4" width="2.1" height="1.6" fill="#a8a8a8"/><rect x="11.3" y="89.4" width="1.6" height="0.9" fill="#9a9a9a"/><rect x="76.0" y="47.2" width="1.1" height="2.1" fill="#e8e8e8"/><rect x="102.0" y="45.2" width="0.9" height="1.9" fill="#b4b4b4"/><rect x="96.8" y="86.1" width="1.5" height="1.8" fill="#e8e8e8"/><rect x="79.3" y="71.0" width="1.4" height="1.7" fill="#e8e8e8"/><rect x="65.7" y="6.6" width="2.2" height="1.6" fill="#a8a8a8"/><rect x="42.4" y="83.6" width="1.7" height="1.8" fill="#b4b4b4"/><rect x="100.3" y="2.1" width="2.0" height="1.5" fill="#b4b4b4"/><rect x="4.0" y="2.1" width="1.8" height="1.9" fill="#9a9a9a"/><rect x="100.7" y="44.5" width="1.0" height="1.2" fill="#b4b4b4"/><rect x="98.5" y="49.1" width="1.0" height="0.8" fill="#e8e8e8"/><rect x="7.8" y="36.7" width="1.0" height="1.2" fill="#e8e8e8"/><rect x="80.4" y="12.5" width="1.4" height="1.5" fill="#a8a8a8"/><rect x="87.2" y="42.0" width="1.1" height="2.1" fill="#9a9a9a"/><rect x="78.7" y="88.9" width="1.5" height="1.2" fill="#9a9a9a"/><rect x="42.6" y="19.9" width="1.9" height="1.1" fill="#e8e8e8"/><rect x="2.6" y="55.8" width="0.9" height="1.1" fill="#b4b4b4"/><rect x="93.0" y="47.9" width="2.0" height="2.0" fill="#9a9a9a"/><rect x="102.1" y="45.5" width="1.0" height="1.9" fill="#e8e8e8"/><rect x="106.0" y="94.0" width="1.3" height="1.0" fill="#e8e8e8"/><rect x="37.0" y="82.5" width="1.9" height="1.5" fill="#e8e8e8"/><rect x="66.9" y="12.1" width="1.6" height="1.2" fill="#e8e8e8"/><rect x="106.4" y="85.5" width="1.4" height="1.8" fill="#a8a8a8"/><rect x="48.2" y="83.7" width="1.9" height="2.1" fill="#a8a8a8"/><rect x="9.2" y="57.4" width="1.2" height="1.3" fill="#b4b4b4"/><rect x="63.9" y="26.6" width="1.0" height="1.6" fill="#9a9a9a"/><rect x="13.0" y="81.1" width="2.1" height="1.3" fill="#b4b4b4"/><rect x="26.8" y="66.5" width="2.1" height="2.0" fill="#e8e8e8"/><rect x="69.7" y="59.8" width="1.5" height="2.1" fill="#e8e8e8"/><rect x="60.0" y="53.9" width="1.3" height="1.0" fill="#b4b4b4"/><rect x="100.1" y="83.2" width="1.3" height="2.2" fill="#9a9a9a"/><rect x="30.7" y="52.5" width="1.4" height="1.7" fill="#e8e8e8"/><rect x="8.9" y="70.2" width="2.1" height="1.0" fill="#b4b4b4"/><rect x="41.5" y="75.2" width="1.1" height="1.1" fill="#e8e8e8"/><rect x="3.5" y="9.3" width="1.0" height="0.9" fill="#a8a8a8"/><rect x="30.4" y="27.7" width="1.8" height="0.8" fill="#9a9a9a"/><rect x="81.2" y="88.5" width="0.9" height="1.4" fill="#e8e8e8"/><rect x="50.5" y="30.2" width="1.0" height="1.1" fill="#9a9a9a"/><rect x="12.0" y="16.4" width="1.1" height="1.8" fill="#9a9a9a"/><rect x="96.4" y="31.0" width="1.5" height="1.6" fill="#a8a8a8"/><rect x="53.7" y="53.4" width="2.0" height="1.0" fill="#9a9a9a"/><rect x="106.3" y="34.5" width="0.9" height="2.0" fill="#e8e8e8"/><rect x="59.1" y="54.3" width="1.0" height="1.0" fill="#e8e8e8"/><rect x="2.5" y="82.8" width="1.7" height="1.1" fill="#9a9a9a"/><rect x="49.6" y="64.3" width="1.3" height="1.6" fill="#e8e8e8"/><rect x="42.9" y="43.3" width="1.7" height="0.9" fill="#e8e8e8"/><rect x="59.7" y="29.0" width="1.3" height="2.2" fill="#9a9a9a"/><rect x="36.9" y="81.3" width="1.1" height="2.2" fill="#e8e8e8"/><rect x="13.1" y="1.0" width="1.9" height="1.0" fill="#9a9a9a"/><rect x="14.3" y="91.9" width="1.6" height="1.0" fill="#e8e8e8"/><rect x="108.1" y="42.3" width="1.6" height="1.1" fill="#b4b4b4"/><rect x="23.5" y="73.5" width="2.1" height="2.1" fill="#9a9a9a"/><rect x="2.5" y="5.5" width="1.5" height="1.1" fill="#b4b4b4"/><rect x="57.6" y="13.1" width="2.0" height="1.7" fill="#e8e8e8"/><rect x="74.7" y="72.3" width="2.1" height="1.2" fill="#b4b4b4"/><rect x="42.9" y="39.8" width="1.6" height="1.5" fill="#e8e8e8"/><rect x="62.9" y="3.1" width="1.7" height="2.0" fill="#9a9a9a"/><rect x="18.7" y="93.9" width="1.7" height="1.9" fill="#9a9a9a"/><rect x="91.3" y="25.8" width="1.0" height="1.5" fill="#a8a8a8"/><rect x="85.6" y="71.8" width="1.7" height="0.9" fill="#e8e8e8"/><rect x="96.5" y="27.2" width="1.2" height="1.7" fill="#9a9a9a"/><rect x="67.7" y="56.6" width="2.0" height="1.9" fill="#9a9a9a"/><rect x="79.6" y="79.7" width="2.2" height="1.6" fill="#e8e8e8"/><rect x="99.0" y="28.5" width="1.1" height="1.2" fill="#9a9a9a"/><rect x="99.8" y="94.8" width="1.7" height="1.4" fill="#a8a8a8"/><rect x="9.4" y="49.6" width="1.9" height="0.9" fill="#a8a8a8"/><rect x="73.2" y="85.8" width="1.8" height="1.8" fill="#e8e8e8"/><rect x="98.5" y="50.1" width="1.7" height="0.8" fill="#e8e8e8"/><rect x="40.4" y="39.3" width="1.3" height="1.9" fill="#e8e8e8"/><rect x="81.9" y="77.1" width="2.1" height="1.2" fill="#a8a8a8"/><rect x="62.7" y="2.3" width="1.6" height="0.8" fill="#a8a8a8"/><rect x="47.8" y="65.8" width="1.0" height="1.7" fill="#9a9a9a"/><rect x="13.6" y="22.2" width="1.5" height="2.1" fill="#b4b4b4"/><rect x="12.6" y="66.8" width="1.9" height="1.3" fill="#a8a8a8"/><rect x="34.2" y="57.9" width="1.8" height="1.4" fill="#a8a8a8"/><rect x="43.1" y="49.9" width="1.0" height="1.2" fill="#e8e8e8"/><rect x="91.4" y="71.3" width="2.0" height="1.7" fill="#b4b4b4"/><rect x="60.9" y="14.6" width="1.0" height="1.3" fill="#b4b4b4"/><rect x="94.7" y="62.5" width="1.6" height="1.2" fill="#9a9a9a"/><rect x="25.7" y="16.2" width="1.3" height="1.1" fill="#b4b4b4"/><rect x="68.8" y="38.4" width="1.9" height="1.9" fill="#9a9a9a"/><rect x="39.5" y="85.6" width="1.9" height="1.8" fill="#a8a8a8"/><rect x="96.1" y="30.4" width="1.0" height="1.8" fill="#a8a8a8"/><rect x="35.1" y="15.2" width="1.3" height="1.9" fill="#9a9a9a"/><rect x="31.5" y="76.0" width="1.0" height="1.7" fill="#9a9a9a"/><rect x="88.7" y="70.7" width="2.1" height="1.5" fill="#b4b4b4"/><rect x="104.0" y="23.4" width="2.2" height="0.8" fill="#b4b4b4"/><rect x="18.7" y="3.3" width="1.2" height="1.3" fill="#9a9a9a"/><rect x="52.9" y="36.5" width="2.1" height="0.8" fill="#9a9a9a"/><rect x="12.0" y="17.4" width="1.0" height="2.2" fill="#a8a8a8"/><rect x="26.6" y="86.0" width="1.3" height="0.9" fill="#9a9a9a"/><rect x="54.6" y="4.2" width="1.5" height="1.4" fill="#a8a8a8"/><rect x="69.6" y="43.2" width="1.7" height="2.0" fill="#e8e8e8"/><rect x="105.9" y="36.6" width="1.2" height="1.3" fill="#9a9a9a"/><rect x="50.3" y="50.2" width="1.4" height="1.4" fill="#b4b4b4"/><rect x="45.3" y="32.4" width="0.8" height="1.5" fill="#a8a8a8"/><rect x="70.0" y="6.3" width="1.8" height="0.9" fill="#b4b4b4"/><rect x="15.7" y="53.5" width="1.5" height="1.9" fill="#b4b4b4"/><rect x="82.3" y="84.1" width="1.0" height="1.3" fill="#9a9a9a"/><rect x="92.6" y="61.5" width="1.0" height="1.2" fill="#b4b4b4"/><rect x="36.4" y="87.8" width="2.2" height="0.9" fill="#9a9a9a"/><rect x="40.2" y="90.1" width="2.0" height="1.1" fill="#a8a8a8"/><rect x="98.7" y="10.7" width="2.0" height="1.2" fill="#a8a8a8"/><rect x="80.3" y="42.6" width="1.6" height="1.9" fill="#a8a8a8"/><rect x="63.8" y="9.2" width="1.3" height="1.9" fill="#a8a8a8"/><rect x="40.3" y="60.7" width="1.9" height="1.5" fill="#a8a8a8"/><rect x="79.6" y="49.5" width="2.2" height="1.1" fill="#e8e8e8"/><rect x="45.2" y="64.0" width="1.3" height="1.5" fill="#a8a8a8"/><rect x="67.8" y="47.0" width="1.3" height="1.5" fill="#e8e8e8"/><rect x="67.0" y="80.2" width="1.3" height="2.2" fill="#b4b4b4"/><rect x="98.4" y="74.8" width="1.2" height="0.8" fill="#b4b4b4"/><rect x="49.2" y="66.6" width="1.4" height="1.0" fill="#a8a8a8"/><rect x="104.9" y="84.9" width="1.0" height="0.9" fill="#e8e8e8"/><rect x="76.5" y="22.1" width="1.2" height="1.8" fill="#a8a8a8"/><rect x="91.7" y="62.3" width="1.3" height="1.1" fill="#e8e8e8"/><rect x="79.4" y="75.1" width="1.8" height="2.1" fill="#9a9a9a"/><rect x="17.8" y="30.6" width="1.0" height="1.9" fill="#9a9a9a"/><rect x="37.1" y="89.8" width="2.1" height="1.0" fill="#a8a8a8"/><rect x="89.9" y="57.2" width="2.2" height="2.0" fill="#9a9a9a"/><rect x="32.2" y="71.4" width="1.5" height="2.1" fill="#a8a8a8"/><rect x="22.8" y="45.2" width="0.9" height="1.7" fill="#e8e8e8"/><rect x="42.7" y="23.9" width="1.1" height="0.9" fill="#9a9a9a"/><rect x="26.3" y="51.2" width="1.2" height="1.7" fill="#b4b4b4"/><rect x="96.7" y="53.7" width="2.1" height="0.8" fill="#b4b4b4"/><rect x="8.7" y="44.2" width="0.9" height="1.7" fill="#e8e8e8"/><rect x="31.2" y="30.4" width="2.0" height="0.9" fill="#e8e8e8"/><rect x="23.5" y="40.7" width="0.9" height="0.9" fill="#a8a8a8"/><rect x="1.4" y="83.4" width="1.0" height="1.1" fill="#b4b4b4"/><rect x="12.0" y="38.8" width="1.5" height="2.0" fill="#e8e8e8"/><rect x="47.9" y="79.6" width="1.3" height="1.2" fill="#a8a8a8"/><rect x="6.0" y="25.7" width="1.2" height="1.8" fill="#a8a8a8"/><rect x="82.7" y="60.8" width="0.8" height="1.6" fill="#9a9a9a"/><rect x="52.8" y="45.6" width="1.0" height="2.1" fill="#9a9a9a"/><rect x="12.7" y="3.6" width="1.8" height="2.2" fill="#a8a8a8"/><rect x="105.0" y="92.4" width="2.2" height="1.6" fill="#9a9a9a"/><rect x="84.8" y="9.8" width="2.1" height="1.6" fill="#e8e8e8"/><rect x="41.3" y="81.0" width="1.0" height="2.0" fill="#9a9a9a"/><rect x="106.6" y="9.3" width="1.3" height="1.6" fill="#9a9a9a"/><rect x="24.1" y="78.0" width="1.6" height="1.3" fill="#9a9a9a"/><rect x="57.8" y="65.8" width="1.4" height="1.1" fill="#b4b4b4"/><rect x="25.1" y="23.7" width="1.8" height="1.2" fill="#b4b4b4"/><rect x="73.8" y="84.8" width="2.0" height="1.1" fill="#b4b4b4"/><rect x="30.3" y="48.0" width="1.6" height="1.2" fill="#e8e8e8"/><rect x="39.3" y="65.7" width="1.0" height="1.5" fill="#b4b4b4"/><rect x="48.4" y="8.7" width="0.9" height="1.7" fill="#9a9a9a"/><rect x="88.5" y="82.3" width="0.9" height="1.7" fill="#b4b4b4"/><rect x="8.0" y="30.0" width="1.7" height="0.9" fill="#e8e8e8"/><rect x="66.2" y="63.6" width="1.8" height="0.9" fill="#a8a8a8"/><rect x="16.2" y="45.0" width="1.0" height="2.0" fill="#a8a8a8"/><rect x="31.6" y="47.2" width="1.9" height="1.1" fill="#e8e8e8"/><rect x="68.9" y="21.7" width="1.3" height="2.0" fill="#a8a8a8"/><rect x="102.1" y="13.2" width="1.8" height="1.1" fill="#a8a8a8"/><rect x="102.5" y="33.0" width="2.2" height="1.5" fill="#9a9a9a"/><rect x="88.0" y="89.2" width="1.7" height="1.6" fill="#e8e8e8"/><rect x="82.0" y="82.5" width="1.7" height="0.9" fill="#b4b4b4"/><rect x="88.4" y="7.1" width="0.9" height="1.7" fill="#9a9a9a"/><rect x="6.3" y="41.7" width="1.8" height="0.9" fill="#b4b4b4"/><rect x="106.3" y="67.7" width="1.8" height="1.5" fill="#a8a8a8"/><rect x="75.8" y="36.4" width="2.2" height="1.9" fill="#e8e8e8"/><rect x="56.9" y="65.1" width="1.2" height="1.2" fill="#e8e8e8"/><rect x="33.8" y="54.6" width="1.6" height="1.4" fill="#e8e8e8"/><rect x="76.7" y="63.0" width="1.4" height="1.8" fill="#e8e8e8"/><rect x="70.9" y="89.2" width="1.4" height="1.9" fill="#b4b4b4"/><rect x="26.8" y="50.4" width="2.2" height="1.9" fill="#b4b4b4"/><rect x="68.3" y="35.8" width="1.1" height="1.5" fill="#9a9a9a"/><rect x="6.3" y="78.6" width="1.7" height="2.1" fill="#a8a8a8"/><rect x="52.6" y="82.3" width="1.8" height="1.2" fill="#9a9a9a"/><rect x="102.8" y="36.3" width="2.1" height="2.0" fill="#e8e8e8"/><rect x="77.5" y="26.4" width="0.9" height="1.5" fill="#a8a8a8"/><rect x="106.2" y="59.4" width="1.0" height="1.8" fill="#e8e8e8"/><rect x="24.4" y="87.3" width="1.8" height="0.9" fill="#a8a8a8"/><rect x="13.2" y="4.1" width="0.9" height="1.7" fill="#a8a8a8"/><rect x="21.1" y="6.2" width="2.1" height="1.9" fill="#b4b4b4"/><rect x="18.5" y="77.7" width="0.8" height="1.0" fill="#9a9a9a"/><rect x="33.1" y="36.6" width="0.9" height="1.7" fill="#e8e8e8"/><rect x="4.8" y="85.5" width="2.1" height="1.2" fill="#a8a8a8"/><rect x="105.4" y="12.3" width="1.9" height="1.9" fill="#b4b4b4"/><rect x="93.7" y="50.9" width="2.2" height="0.8" fill="#e8e8e8"/><rect x="29.2" y="52.0" width="1.0" height="2.1" fill="#e8e8e8"/><rect x="83.4" y="19.8" width="2.1" height="2.0" fill="#b4b4b4"/><rect x="50.9" y="45.6" width="1.5" height="1.4" fill="#9a9a9a"/><rect x="108.8" y="30.4" width="1.2" height="1.4" fill="#a8a8a8"/><rect x="7.9" y="3.0" width="1.1" height="0.9" fill="#b4b4b4"/><rect x="5.2" y="40.6" width="1.8" height="2.2" fill="#e8e8e8"/><rect x="19.8" y="32.4" width="1.0" height="1.7" fill="#9a9a9a"/><rect x="35.2" y="51.7" width="0.9" height="2.0" fill="#e8e8e8"/><rect x="105.5" y="71.8" width="0.8" height="1.5" fill="#a8a8a8"/><rect x="92.3" y="26.0" width="1.3" height="1.7" fill="#e8e8e8"/><rect x="16.5" y="54.8" width="1.5" height="1.3" fill="#a8a8a8"/><rect x="29.1" y="58.0" width="1.8" height="1.3" fill="#e8e8e8"/><rect x="31.8" y="59.7" width="1.3" height="2.0" fill="#e8e8e8"/><rect x="49.0" y="70.5" width="1.8" height="1.2" fill="#a8a8a8"/><rect x="76.2" y="11.8" width="1.2" height="1.6" fill="#a8a8a8"/><rect x="42.0" y="15.7" width="1.5" height="1.8" fill="#a8a8a8"/><rect x="71.0" y="36.6" width="1.8" height="2.1" fill="#e8e8e8"/><rect x="4.7" y="46.9" width="1.6" height="1.4" fill="#a8a8a8"/><rect x="14.3" y="47.9" width="1.8" height="1.7" fill="#9a9a9a"/><rect x="29.5" y="81.4" width="1.9" height="0.9" fill="#b4b4b4"/><rect x="77.9" y="59.7" width="1.1" height="1.6" fill="#9a9a9a"/><rect x="16.9" y="73.5" width="1.2" height="1.8" fill="#b4b4b4"/><rect x="18.1" y="92.0" width="1.2" height="2.1" fill="#e8e8e8"/><rect x="41.6" y="18.0" width="1.0" height="1.8" fill="#9a9a9a"/><rect x="8.9" y="41.3" width="2.2" height="1.5" fill="#a8a8a8"/><rect x="42.3" y="74.2" width="1.5" height="2.1" fill="#b4b4b4"/><rect x="82.1" y="39.0" width="0.8" height="1.6" fill="#b4b4b4"/><rect x="19.3" y="69.3" width="2.0" height="2.0" fill="#e8e8e8"/><rect x="7.6" y="75.2" width="2.2" height="1.3" fill="#a8a8a8"/><rect x="64.4" y="38.4" width="1.5" height="1.9" fill="#e8e8e8"/><rect x="7.5" y="72.6" width="1.4" height="0.9" fill="#9a9a9a"/><rect x="65.8" y="20.7" width="1.6" height="1.0" fill="#b4b4b4"/><rect x="61.9" y="77.1" width="1.3" height="1.8" fill="#a8a8a8"/><rect x="64.9" y="88.9" width="0.9" height="1.4" fill="#b4b4b4"/><rect x="0.3" y="54.0" width="1.4" height="1.1" fill="#e8e8e8"/><rect x="65.9" y="2.7" width="1.0" height="1.6" fill="#e8e8e8"/><rect x="4.5" y="41.6" width="1.8" height="1.4" fill="#a8a8a8"/><rect x="28.2" y="67.1" width="1.9" height="0.9" fill="#b4b4b4"/><rect x="48.1" y="80.1" width="1.4" height="1.6" fill="#a8a8a8"/><rect x="84.0" y="34.1" width="0.9" height="1.3" fill="#9a9a9a"/><rect x="99.7" y="27.8" width="1.5" height="1.0" fill="#a8a8a8"/><rect x="50.4" y="86.9" width="0.9" height="0.8" fill="#9a9a9a"/><rect x="35.1" y="15.7" width="0.8" height="2.0" fill="#b4b4b4"/><rect x="69.4" y="28.7" width="0.9" height="1.7" fill="#b4b4b4"/><rect x="43.4" y="33.5" width="1.7" height="1.1" fill="#a8a8a8"/><rect x="73.2" y="8.8" width="1.8" height="1.6" fill="#a8a8a8"/><rect x="49.8" y="79.3" width="1.3" height="1.1" fill="#9a9a9a"/><rect x="98.7" y="39.6" width="1.6" height="1.4" fill="#b4b4b4"/><rect x="35.0" y="35.0" width="1.1" height="1.1" fill="#e8e8e8"/><rect x="24.5" y="25.1" width="1.9" height="1.3" fill="#b4b4b4"/><rect x="88.2" y="39.5" width="2.2" height="1.0" fill="#b4b4b4"/><rect x="76.3" y="59.6" width="0.9" height="1.9" fill="#e8e8e8"/><rect x="13.6" y="72.1" width="1.1" height="1.0" fill="#9a9a9a"/><rect x="103.5" y="63.2" width="1.9" height="1.2" fill="#e8e8e8"/><rect x="11.1" y="41.2" width="1.7" height="0.9" fill="#b4b4b4"/><rect x="64.0" y="23.3" width="1.5" height="1.6" fill="#a8a8a8"/><rect x="31.1" y="50.9" width="1.6" height="0.9" fill="#b4b4b4"/><rect x="80.0" y="6.9" width="2.1" height="1.9" fill="#e8e8e8"/><rect x="64.1" y="49.2" width="0.8" height="1.7" fill="#9a9a9a"/><rect x="75.5" y="50.3" width="1.3" height="1.2" fill="#e8e8e8"/><rect x="90.6" y="3.7" width="1.8" height="1.8" fill="#e8e8e8"/><rect x="10.7" y="53.5" width="1.9" height="0.9" fill="#9a9a9a"/><rect x="51.5" y="25.4" width="1.3" height="2.0" fill="#e8e8e8"/><rect x="81.5" y="57.8" width="2.1" height="0.9" fill="#e8e8e8"/><rect x="62.6" y="66.2" width="1.1" height="1.4" fill="#b4b4b4"/><rect x="103.0" y="39.8" width="1.2" height="2.0" fill="#a8a8a8"/><rect x="30.1" y="82.7" width="1.6" height="1.7" fill="#b4b4b4"/><rect x="45.3" y="46.0" width="2.1" height="2.0" fill="#b4b4b4"/><rect x="62.1" y="31.9" width="2.0" height="1.1" fill="#a8a8a8"/><rect x="8.7" y="31.9" width="2.1" height="1.1" fill="#b4b4b4"/><rect x="21.8" y="21.5" width="2.1" height="1.0" fill="#b4b4b4"/><rect x="96.4" y="68.1" width="2.1" height="1.0" fill="#9a9a9a"/><rect x="64.4" y="20.6" width="1.7" height="0.9" fill="#9a9a9a"/><rect x="66.4" y="59.0" width="0.8" height="1.9" fill="#9a9a9a"/><rect x="0.7" y="74.2" width="1.7" height="1.3" fill="#a8a8a8"/><rect x="14.2" y="43.5" width="2.1" height="1.1" fill="#a8a8a8"/><rect x="53.9" y="32.2" width="1.4" height="1.2" fill="#a8a8a8"/><rect x="61.0" y="13.2" width="1.5" height="2.0" fill="#a8a8a8"/><rect x="82.2" y="59.9" width="1.5" height="1.3" fill="#a8a8a8"/><rect x="6.0" y="50.5" width="1.1" height="1.4" fill="#a8a8a8"/><rect x="17.9" y="47.1" width="2.0" height="0.9" fill="#9a9a9a"/><rect x="90.0" y="83.1" width="1.5" height="1.4" fill="#b4b4b4"/><rect x="90.9" y="39.0" width="1.4" height="1.3" fill="#e8e8e8"/><rect x="55.8" y="72.1" width="1.0" height="1.2" fill="#a8a8a8"/><rect x="78.5" y="46.9" width="0.9" height="1.5" fill="#a8a8a8"/><rect x="39.7" y="66.4" width="2.1" height="1.9" fill="#a8a8a8"/><rect x="14.4" y="73.7" width="1.0" height="1.3" fill="#9a9a9a"/><rect x="38.9" y="11.6" width="1.1" height="1.3" fill="#b4b4b4"/><rect x="61.2" y="34.5" width="1.3" height="1.9" fill="#e8e8e8"/><rect x="74.6" y="76.2" width="1.2" height="1.2" fill="#e8e8e8"/><rect x="11.4" y="42.5" width="0.9" height="1.6" fill="#e8e8e8"/><rect x="93.2" y="33.2" width="1.6" height="1.3" fill="#9a9a9a"/><rect x="27.7" y="49.6" width="1.8" height="1.1" fill="#a8a8a8"/><rect x="4.6" y="3.8" width="2.1" height="0.8" fill="#e8e8e8"/><rect x="39.1" y="79.8" width="1.4" height="2.0" fill="#9a9a9a"/><rect x="34.3" y="40.5" width="1.4" height="1.8" fill="#9a9a9a"/><rect x="81.2" y="26.5" width="1.0" height="1.7" fill="#9a9a9a"/><rect x="106.3" y="39.0" width="1.0" height="1.4" fill="#a8a8a8"/><rect x="19.7" y="8.6" width="0.8" height="1.2" fill="#b4b4b4"/><rect x="33.6" y="61.3" width="1.5" height="2.0" fill="#9a9a9a"/><rect x="62.7" y="20.8" width="2.1" height="2.0" fill="#a8a8a8"/><rect x="95.8" y="56.4" width="1.7" height="1.8" fill="#e8e8e8"/><rect x="48.3" y="49.4" width="1.9" height="2.2" fill="#a8a8a8"/><rect x="5.7" y="86.2" width="2.2" height="1.5" fill="#b4b4b4"/><rect x="21.3" y="40.4" width="1.7" height="1.0" fill="#a8a8a8"/><rect x="102.4" y="66.9" width="2.0" height="1.4" fill="#9a9a9a"/><rect x="48.7" y="1.7" width="1.2" height="2.1" fill="#b4b4b4"/><rect x="7.8" y="6.1" width="1.4" height="1.4" fill="#a8a8a8"/><rect x="23.2" y="51.6" width="0.9" height="2.2" fill="#e8e8e8"/><rect x="70.7" y="26.5" width="2.0" height="1.1" fill="#a8a8a8"/><rect x="72.3" y="51.4" width="1.3" height="1.0" fill="#b4b4b4"/><rect x="28.0" y="38.8" width="2.0" height="1.3" fill="#e8e8e8"/><rect x="4.8" y="87.9" width="1.2" height="1.6" fill="#a8a8a8"/><rect x="79.3" y="7.2" width="1.0" height="1.1" fill="#e8e8e8"/><rect x="65.5" y="84.9" width="1.0" height="1.2" fill="#b4b4b4"/></g>
<g fill="#ececec">
<circle cx="9" cy="54" r="1.6"/><circle cx="12" cy="62" r="1.6"/><circle cx="15" cy="70" r="1.6"/><circle cx="18" cy="78" r="1.6"/>
<circle cx="33" cy="28" r="1.1"/><circle cx="28" cy="34" r="1.1"/><circle cx="14" cy="12" r="1.1"/><circle cx="46" cy="8" r="1.2"/><circle cx="60" cy="18" r="1.1"/>
<circle cx="36" cy="66" r="1"/><circle cx="42" cy="60" r="1"/><path d="M2,72 L8,74 L6,80 L2,80 Z"/>
</g>
<path d="M65.6,0 Q69,22 65.6,40.7 Q62,50 58.8,54.3 Q52,62 45,70 Q38,77 31.7,83.7 L25,90.5" fill="none" stroke="#c2c2c2" stroke-width="2.4"/>
<path d="M65.6,0 Q69,22 65.6,40.7 Q62,50 58.8,54.3 Q52,62 45,70 Q38,77 31.7,83.7 L25,90.5" fill="none" stroke="#f4f4f4" stroke-width="1"/>
<path d="M92.8,0 Q96,22 92.8,54.3 Q89,66 86,74.7 Q82,84 79,90.5" fill="none" stroke="#bcbcbc" stroke-width="2.2"/>
<path d="M92.8,0 Q96,22 92.8,54.3 Q89,66 86,74.7 Q82,84 79,90.5" fill="none" stroke="#f4f4f4" stroke-width="0.8"/>
<path d="M66,47.5 L96,47.5 L96,52 L64,52 Z" fill="#dedede"/>
<path d="M66.5,48.6 L95,48.6 L95,50.9 L65,50.9 Z" fill="#f8f8f8"/>
<rect x="73" y="25" width="3" height="17" fill="#e4e4e4"/>
<g fill="none" stroke="#f2f2f2" stroke-width="1.3"><path d="M104,52 L96,95"/><path d="M108,60 L103,95"/><path d="M99,30 L110,28"/></g>
<path d="M0,86 L30,84 L110,88 L110,95 L0,95 Z" fill="#f0f0f0"/>
<path d="M0,88 L26,84" stroke="#c8c8c8" stroke-width="0.8"/>
<rect x="0.5" y="0.5" width="109" height="94" fill="none" stroke="#b0bccc" stroke-width="1"/></svg></div>
<div class="thumb" style="left:489px;top:215.7px"><svg viewBox="0 0 110 95" preserveAspectRatio="none">
<rect width="110" height="95" fill="#efebe2"/>
<ellipse cx="62.7" cy="60.1" rx="2.2" ry="2.8" fill="#d8ecc4"/><ellipse cx="58.6" cy="50.1" rx="3.4" ry="2.1" fill="#d8ecc4"/><ellipse cx="49.0" cy="89.6" rx="1.8" ry="1.6" fill="#cfe6b4"/><ellipse cx="54.6" cy="5.0" rx="3.0" ry="1.6" fill="#b8dc98"/><ellipse cx="35.1" cy="72.7" rx="1.3" ry="1.1" fill="#c2e0a2"/><ellipse cx="107.8" cy="27.0" rx="3.5" ry="1.1" fill="#c2e0a2"/><ellipse cx="40.2" cy="62.1" rx="2.3" ry="1.6" fill="#c2e0a2"/><ellipse cx="38.9" cy="62.6" rx="2.0" ry="2.4" fill="#b8dc98"/><ellipse cx="96.7" cy="34.6" rx="1.2" ry="1.2" fill="#cfe6b4"/><ellipse cx="88.9" cy="0.3" rx="1.7" ry="1.4" fill="#b8dc98"/><ellipse cx="21.2" cy="62.1" rx="2.5" ry="2.6" fill="#b8dc98"/><ellipse cx="64.9" cy="43.2" rx="2.2" ry="1.0" fill="#d8ecc4"/><ellipse cx="41.8" cy="72.0" rx="1.3" ry="2.7" fill="#d8ecc4"/><ellipse cx="1.6" cy="51.5" rx="2.8" ry="2.7" fill="#b8dc98"/><ellipse cx="92.8" cy="82.0" rx="2.8" ry="2.0" fill="#b8dc98"/><ellipse cx="76.0" cy="84.1" rx="2.2" ry="1.8" fill="#d8ecc4"/><ellipse cx="55.8" cy="24.8" rx="2.0" ry="2.5" fill="#b8dc98"/><ellipse cx="34.9" cy="90.9" rx="1.3" ry="1.4" fill="#c2e0a2"/><ellipse cx="78.3" cy="59.1" rx="3.3" ry="1.3" fill="#d8ecc4"/><ellipse cx="79.7" cy="33.6" rx="2.1" ry="2.6" fill="#b8dc98"/><ellipse cx="101.8" cy="82.5" rx="3.1" ry="2.3" fill="#cfe6b4"/><ellipse cx="79.3" cy="21.7" rx="3.0" ry="2.7" fill="#cfe6b4"/><ellipse cx="8.6" cy="11.2" rx="1.5" ry="2.2" fill="#c2e0a2"/><ellipse cx="7.1" cy="64.6" rx="2.4" ry="3.0" fill="#cfe6b4"/><ellipse cx="74.8" cy="0.6" rx="2.0" ry="2.8" fill="#c2e0a2"/><ellipse cx="89.5" cy="13.1" rx="3.0" ry="2.2" fill="#cfe6b4"/><ellipse cx="23.1" cy="52.9" rx="1.8" ry="1.2" fill="#cfe6b4"/><ellipse cx="98.2" cy="47.4" rx="3.4" ry="2.5" fill="#d8ecc4"/><ellipse cx="91.9" cy="1.6" rx="2.2" ry="1.6" fill="#cfe6b4"/><ellipse cx="36.2" cy="49.9" rx="1.2" ry="1.8" fill="#d8ecc4"/><ellipse cx="82.7" cy="25.8" rx="2.3" ry="2.7" fill="#cfe6b4"/><ellipse cx="28.4" cy="16.5" rx="1.3" ry="2.0" fill="#c2e0a2"/><ellipse cx="51.0" cy="30.8" rx="1.0" ry="1.0" fill="#c2e0a2"/><ellipse cx="16.4" cy="17.7" rx="1.6" ry="2.2" fill="#d8ecc4"/><ellipse cx="89.7" cy="47.1" rx="2.4" ry="2.9" fill="#b8dc98"/><ellipse cx="29.6" cy="72.4" rx="1.4" ry="3.0" fill="#d8ecc4"/><ellipse cx="38.0" cy="11.1" rx="2.6" ry="2.9" fill="#c2e0a2"/><ellipse cx="36.5" cy="76.9" rx="3.1" ry="2.3" fill="#cfe6b4"/><ellipse cx="14.2" cy="15.2" rx="2.5" ry="2.5" fill="#b8dc98"/><ellipse cx="93.0" cy="47.3" rx="3.2" ry="2.6" fill="#c2e0a2"/><ellipse cx="94.3" cy="67.3" rx="2.8" ry="2.8" fill="#d8ecc4"/><ellipse cx="69.0" cy="22.3" rx="3.0" ry="1.9" fill="#b8dc98"/><ellipse cx="43.9" cy="9.4" rx="1.4" ry="1.4" fill="#b8dc98"/><ellipse cx="3.6" cy="15.6" rx="1.8" ry="2.8" fill="#b8dc98"/><ellipse cx="91.8" cy="12.5" rx="1.2" ry="1.3" fill="#c2e0a2"/><ellipse cx="57.5" cy="85.9" rx="3.0" ry="1.8" fill="#cfe6b4"/><ellipse cx="10.3" cy="53.7" rx="2.0" ry="2.2" fill="#b8dc98"/><ellipse cx="87.0" cy="94.5" rx="1.5" ry="2.7" fill="#b8dc98"/><ellipse cx="19.8" cy="93.2" rx="1.7" ry="1.9" fill="#b8dc98"/><ellipse cx="100.7" cy="22.4" rx="1.0" ry="1.3" fill="#d8ecc4"/><ellipse cx="53.2" cy="91.9" rx="3.3" ry="2.8" fill="#cfe6b4"/><ellipse cx="88.5" cy="18.5" rx="1.1" ry="2.9" fill="#b8dc98"/><ellipse cx="27.7" cy="41.2" rx="1.9" ry="1.2" fill="#d8ecc4"/><ellipse cx="3.4" cy="30.1" rx="2.6" ry="3.0" fill="#d8ecc4"/><ellipse cx="82.3" cy="92.2" rx="3.1" ry="1.5" fill="#d8ecc4"/><ellipse cx="3.2" cy="72.1" rx="3.0" ry="2.8" fill="#c2e0a2"/><ellipse cx="3.4" cy="68.1" rx="3.1" ry="2.0" fill="#cfe6b4"/><ellipse cx="35.2" cy="10.3" rx="3.0" ry="1.7" fill="#d8ecc4"/><ellipse cx="105.7" cy="56.6" rx="2.8" ry="2.3" fill="#b8dc98"/><ellipse cx="28.5" cy="93.9" rx="1.8" ry="2.2" fill="#cfe6b4"/><ellipse cx="79.4" cy="36.8" rx="2.8" ry="1.3" fill="#c2e0a2"/><ellipse cx="19.5" cy="76.9" rx="1.9" ry="2.5" fill="#d8ecc4"/><ellipse cx="31.6" cy="63.3" rx="1.8" ry="2.2" fill="#cfe6b4"/><ellipse cx="7.0" cy="50.8" rx="1.5" ry="1.3" fill="#d8ecc4"/><ellipse cx="54.3" cy="12.0" rx="1.4" ry="2.3" fill="#c2e0a2"/><ellipse cx="31.8" cy="15.7" rx="2.7" ry="2.0" fill="#c2e0a2"/><ellipse cx="13.6" cy="58.2" rx="1.4" ry="2.1" fill="#c2e0a2"/><ellipse cx="30.6" cy="58.2" rx="2.9" ry="1.7" fill="#b8dc98"/><ellipse cx="103.5" cy="16.5" rx="1.3" ry="1.1" fill="#cfe6b4"/><ellipse cx="3.1" cy="16.3" rx="2.4" ry="1.8" fill="#c2e0a2"/><polyline points="69.3,61.6 64.6,54.4 61.1,46.9" fill="none" stroke="#f0dcc0" stroke-width="0.4"/><polyline points="88.3,34.7 95.3,29.9 100.8,27.8" fill="none" stroke="#e0bcbc" stroke-width="0.6"/><polyline points="35.2,78.9 33.7,75.4 28.8,71.5 26.7,67.5" fill="none" stroke="#ecd4b4" stroke-width="0.3"/><polyline points="23.0,51.9 20.1,46.1 16.7,42.4 14.4,39.9 13.1,36.2 8.6,30.0" fill="none" stroke="#e8c4bc" stroke-width="0.6"/><polyline points="71.6,39.0 75.1,33.7 77.5,31.1" fill="none" stroke="#f0dcc0" stroke-width="0.5"/><polyline points="37.4,80.7 35.7,83.9 34.6,87.8 37.1,95.9 37.8,99.0" fill="none" stroke="#d4d4d4" stroke-width="0.6"/><polyline points="62.5,40.7 62.1,33.1 61.9,29.6 60.6,21.8 61.7,14.6 65.3,10.7" fill="none" stroke="#e0bcbc" stroke-width="0.5"/><polyline points="101.7,82.7 104.4,78.6 106.0,74.0 107.4,66.5 112.0,60.6" fill="none" stroke="#e0bcbc" stroke-width="0.5"/><polyline points="43.5,48.9 42.8,55.1 39.6,60.3" fill="none" stroke="#d4d4d4" stroke-width="0.5"/><polyline points="72.6,71.8 80.6,68.0 85.2,60.7 87.9,54.7" fill="none" stroke="#e0bcbc" stroke-width="0.4"/><polyline points="20.5,40.5 21.8,37.8 25.1,30.0 31.1,24.7 32.5,20.7" fill="none" stroke="#ecd4b4" stroke-width="0.4"/><polyline points="35.1,91.3 39.2,94.1 42.8,95.4 45.9,99.4 48.1,104.7 47.7,111.8" fill="none" stroke="#e8c4bc" stroke-width="0.5"/><polyline points="82.4,24.5 87.3,25.9 90.7,25.1 97.5,20.5" fill="none" stroke="#e8c4bc" stroke-width="0.5"/><polyline points="8.8,45.6 8.6,40.6 8.1,34.9 12.3,27.3 11.7,20.6" fill="none" stroke="#ecd4b4" stroke-width="0.5"/><polyline points="80.6,65.7 76.5,68.1 73.0,70.1 67.7,73.5" fill="none" stroke="#e0bcbc" stroke-width="0.5"/><polyline points="96.0,91.8 92.5,85.7 88.2,82.2 82.6,79.7 80.1,76.4 74.6,73.3" fill="none" stroke="#e0bcbc" stroke-width="0.3"/><polyline points="98.7,34.1 102.2,35.1 107.6,34.4" fill="none" stroke="#d4d4d4" stroke-width="0.6"/><polyline points="30.6,32.8 34.2,33.6 41.0,31.5 44.2,29.7 47.0,25.6" fill="none" stroke="#e0bcbc" stroke-width="0.5"/><polyline points="43.6,72.7 51.6,74.3 57.7,80.3 64.7,82.8 68.8,86.0" fill="none" stroke="#e8c4bc" stroke-width="0.6"/><polyline points="17.0,71.5 20.3,71.5 27.7,76.1 34.9,78.9 38.4,83.2 43.5,87.5" fill="none" stroke="#e8c4bc" stroke-width="0.4"/><polyline points="76.8,90.7 74.6,96.8 70.9,100.8 68.7,104.9" fill="none" stroke="#e0bcbc" stroke-width="0.5"/><polyline points="8.8,87.9 13.4,87.8 21.9,87.2 25.7,85.9" fill="none" stroke="#d4d4d4" stroke-width="0.4"/><polyline points="97.3,53.3 103.7,50.2 108.1,43.8 109.1,40.9" fill="none" stroke="#e0bcbc" stroke-width="0.4"/><polyline points="64.1,49.9 64.5,45.9 68.3,40.8" fill="none" stroke="#d4d4d4" stroke-width="0.5"/><polyline points="50.2,90.7 48.7,85.1 44.9,81.3" fill="none" stroke="#ecd4b4" stroke-width="0.4"/><polyline points="90.4,15.3 84.5,20.7 79.8,27.7 78.3,36.4 78.8,43.4" fill="none" stroke="#ecd4b4" stroke-width="0.6"/><polyline points="9.6,91.9 15.7,96.4 19.7,101.7" fill="none" stroke="#f0dcc0" stroke-width="0.4"/><polyline points="100.1,76.6 104.7,81.2 111.1,87.5 113.9,89.1 116.6,93.7 123.3,98.4" fill="none" stroke="#f0dcc0" stroke-width="0.6"/><polyline points="77.4,70.5 78.1,75.4 76.6,80.9 72.8,87.3 67.0,92.6" fill="none" stroke="#e8c4bc" stroke-width="0.5"/><polyline points="90.8,31.6 86.2,27.1 83.6,24.0 82.0,16.3 81.0,10.2 81.8,6.9" fill="none" stroke="#d4d4d4" stroke-width="0.5"/><polyline points="72.6,65.7 75.8,72.7 77.4,75.9 81.4,82.4 81.7,87.8 80.0,94.7" fill="none" stroke="#e0bcbc" stroke-width="0.4"/><polyline points="64.9,43.2 71.1,44.4 76.6,43.9" fill="none" stroke="#e0bcbc" stroke-width="0.4"/><polyline points="9.8,49.6 5.3,56.0 -0.2,59.8 -3.8,60.4 -11.9,61.7" fill="none" stroke="#f0dcc0" stroke-width="0.3"/><polyline points="91.9,16.0 87.8,16.2 82.0,18.0 76.3,18.4 67.4,16.9 62.3,18.8" fill="none" stroke="#ecd4b4" stroke-width="0.5"/><polyline points="105.1,32.0 102.9,37.8 103.6,45.0 104.8,47.9 109.0,50.7" fill="none" stroke="#e0bcbc" stroke-width="0.4"/><polyline points="63.2,75.6 62.8,71.4 62.2,65.3 60.6,60.0" fill="none" stroke="#ecd4b4" stroke-width="0.5"/><polyline points="29.3,82.2 33.8,87.2 39.0,94.3 39.5,99.2 41.9,104.0" fill="none" stroke="#e8c4bc" stroke-width="0.4"/><polyline points="79.4,21.7 86.7,25.7 92.8,31.0 97.0,33.4" fill="none" stroke="#e0bcbc" stroke-width="0.5"/><polyline points="39.5,21.2 38.6,12.3 36.5,6.6" fill="none" stroke="#d4d4d4" stroke-width="0.5"/><polyline points="61.5,49.1 59.8,46.5 55.9,38.6 56.6,32.6 55.4,29.3 50.0,25.3" fill="none" stroke="#d4d4d4" stroke-width="0.4"/><polyline points="63.8,48.6 59.7,46.9 52.1,45.3 47.5,44.1 42.3,39.5" fill="none" stroke="#ecd4b4" stroke-width="0.3"/><polyline points="29.7,27.8 33.5,27.9 40.5,26.1 48.5,24.9 56.8,22.0 63.0,21.3" fill="none" stroke="#e0bcbc" stroke-width="0.5"/><polyline points="83.9,49.3 76.3,51.3 71.5,51.7" fill="none" stroke="#e8c4bc" stroke-width="0.4"/><polyline points="100.9,78.2 99.4,74.6 96.9,71.3" fill="none" stroke="#e8c4bc" stroke-width="0.4"/><polyline points="99.1,35.6 102.2,38.1 104.6,44.4" fill="none" stroke="#ecd4b4" stroke-width="0.4"/><polyline points="96.1,74.3 102.4,79.5 105.7,83.5 108.4,85.8 110.0,89.6 112.0,96.5" fill="none" stroke="#d4d4d4" stroke-width="0.5"/><polyline points="33.8,7.1 36.0,10.1 39.8,12.0 43.5,16.9 45.4,24.8 43.8,29.8" fill="none" stroke="#f0dcc0" stroke-width="0.4"/><polyline points="93.4,26.9 97.0,25.2 102.9,25.5" fill="none" stroke="#e0bcbc" stroke-width="0.4"/><polyline points="58.0,2.8 64.5,1.6 68.9,1.6" fill="none" stroke="#e8c4bc" stroke-width="0.4"/><polyline points="54.3,90.5 56.2,92.9 59.3,98.4 59.8,102.3 58.1,108.1 54.2,115.9" fill="none" stroke="#e0bcbc" stroke-width="0.3"/><polyline points="5.6,42.7 8.5,37.7 9.2,32.8 8.7,26.2 5.2,19.4" fill="none" stroke="#ecd4b4" stroke-width="0.6"/><polyline points="1.7,0.4 4.7,1.4 10.3,0.4 15.9,-1.9 20.0,-6.5" fill="none" stroke="#e8c4bc" stroke-width="0.6"/><polyline points="21.7,67.1 20.4,63.6 16.1,57.9 13.0,56.4" fill="none" stroke="#ecd4b4" stroke-width="0.5"/><polyline points="46.2,16.1 45.8,23.7 45.9,29.3 45.1,35.6 42.4,40.2" fill="none" stroke="#e8c4bc" stroke-width="0.4"/><polyline points="50.6,36.5 44.6,42.9 40.6,45.3 36.1,48.5" fill="none" stroke="#f0dcc0" stroke-width="0.6"/><polyline points="6.3,32.7 10.2,37.9 11.2,43.6 11.6,50.6 12.9,53.8" fill="none" stroke="#f0dcc0" stroke-width="0.6"/><polyline points="33.7,15.8 30.5,23.7 29.4,31.2" fill="none" stroke="#d4d4d4" stroke-width="0.4"/><polyline points="91.1,15.6 83.3,19.9 75.9,24.9 67.1,26.0 62.5,27.6 57.1,26.5" fill="none" stroke="#e8c4bc" stroke-width="0.4"/><polyline points="83.2,78.4 79.6,74.3 76.0,71.1" fill="none" stroke="#f0dcc0" stroke-width="0.4"/><polyline points="70.1,37.3 75.2,37.7 80.5,35.7 85.6,35.3 89.9,34.0 94.2,35.2" fill="none" stroke="#f0dcc0" stroke-width="0.6"/><rect x="12.7" y="87.1" width="1.5" height="1.4" fill="#dcd4cc"/><rect x="46.4" y="80.5" width="1.3" height="1.1" fill="#dcd4cc"/><rect x="92.2" y="84.3" width="1.3" height="0.9" fill="#dcd4cc"/><rect x="34.4" y="33.7" width="1.0" height="1.7" fill="#dcd4cc"/><rect x="54.7" y="31.3" width="1.7" height="1.6" fill="#dcd4cc"/><rect x="94.6" y="45.2" width="1.1" height="0.9" fill="#dcd4cc"/><rect x="104.1" y="34.9" width="1.5" height="0.9" fill="#dcd4cc"/><rect x="29.3" y="45.9" width="1.7" height="1.6" fill="#dcd4cc"/><rect x="18.7" y="33.7" width="1.3" height="1.0" fill="#dcd4cc"/><rect x="22.0" y="80.6" width="1.6" height="1.7" fill="#dcd4cc"/><rect x="48.2" y="46.5" width="1.4" height="1.3" fill="#dcd4cc"/><rect x="61.7" y="31.6" width="1.4" height="1.6" fill="#dcd4cc"/><rect x="46.4" y="47.5" width="1.0" height="1.8" fill="#dcd4cc"/><rect x="44.3" y="81.3" width="2.0" height="1.7" fill="#dcd4cc"/><rect x="38.3" y="20.7" width="1.9" height="0.9" fill="#dcd4cc"/><rect x="24.6" y="30.4" width="1.0" height="0.8" fill="#dcd4cc"/><rect x="16.3" y="79.2" width="1.8" height="1.1" fill="#dcd4cc"/><rect x="95.6" y="80.2" width="1.8" height="1.8" fill="#dcd4cc"/><rect x="3.7" y="30.8" width="1.3" height="1.0" fill="#dcd4cc"/><rect x="98.5" y="10.2" width="1.9" height="2.0" fill="#dcd4cc"/><rect x="48.3" y="49.9" width="1.0" height="1.3" fill="#dcd4cc"/><rect x="24.9" y="49.4" width="1.2" height="1.6" fill="#dcd4cc"/><rect x="56.2" y="92.2" width="1.4" height="0.9" fill="#dcd4cc"/><rect x="69.7" y="37.0" width="1.9" height="1.6" fill="#dcd4cc"/><rect x="4.3" y="85.9" width="1.5" height="0.9" fill="#dcd4cc"/><rect x="35.6" y="44.2" width="1.5" height="1.3" fill="#dcd4cc"/><rect x="98.5" y="79.8" width="1.8" height="1.6" fill="#dcd4cc"/><rect x="82.0" y="38.4" width="1.6" height="0.9" fill="#dcd4cc"/><rect x="9.2" y="78.7" width="1.0" height="0.9" fill="#dcd4cc"/><rect x="95.3" y="72.3" width="1.9" height="1.2" fill="#dcd4cc"/>
<g fill="#d6e8c0" opacity="0.95">
<path d="M0,4 L14,4 L14,20 L8,27 L0,26 Z"/>
<path d="M14,0 L43,0 L40,11 L18,12 Z"/>
<path d="M74,40 L88,40 L90,52 L76,52 Z"/>
<path d="M40,40 L52,38 L54,60 L44,58 Z"/>
<path d="M86,20 L96,18 L96,30 L88,32 Z"/>
</g>
<path d="M18,0 L30,0 L29,11 L20,12 Z" fill="#a8d088"/>
<path d="M63.4,15.8 L74,17 L77,26 L72,34 L64,32 Z" fill="#b4dc98"/>
<path d="M97,4.5 L108,4 L110,10 L110,25 L100,24 Z" fill="#c4c070"/>
<path d="M99.6,25 L108.6,25 L108,34 L100,33 Z" fill="#b4dc98"/>
<path d="M42,0 L59,0 L57.7,13.6 L56.6,34 L52,34 L45,27 L43,13.6 Z" fill="#cdb862"/>
<path d="M0,34 L6.8,37.3 L13.6,45 L18,58.8 L22.6,68 L34,79 L45,90.5 L48.7,95 L0,95 Z" fill="#aad2de"/>
<path d="M5.7,36 L18,39.6 L29.4,43 L32.8,49.8 L31.7,56.6 L25,61 L20.4,58.8 L15.8,47.5 Z" fill="#7e9444"/>
<path d="M20.4,61 L45,60 L47.5,65.6 L38,67 L44,69 L47.5,68 L49.8,86 L47.5,90.5 L38.5,81.5 L27,72.4 L20.4,68 Z" fill="#7e9444"/>
<path d="M25,44 L32.8,46 L32.8,53 L26,53 Z" fill="#8cc47a"/>
<path d="M49.8,68 L58,69 L59,83.7 L52,84 Z" fill="#a4d890"/>
<path d="M59,49.8 L65.6,52 L70,63.4 L72.4,70 L68,72.4 L63.4,63.4 L60,56.6 Z" fill="#cdb862"/>
<path d="M79,63.4 L92.8,61 L101.8,65.6 L99.6,74.7 L106.4,77 L95,86 L86,83.7 L79,74.7 Z" fill="#cdb862"/>
<path d="M77,70 L88,72 L90.5,81.5 L82,82 Z" fill="#a4d890"/>
<path d="M97,72 L106,73 L107,79 L99,80 Z" fill="#a4d890"/>
<g fill="none" stroke="#e6c4c4" stroke-width="0.6" opacity="0.9">
<path d="M30,20 L60,40 L110,42"/><path d="M61,0 L62,50 L58,95"/><path d="M70,50 L110,60"/><path d="M40,30 L100,95"/><path d="M0,30 Q30,28 45,45"/>
</g>
<rect x="0.5" y="0.5" width="109" height="94" fill="none" stroke="#b4c0cc" stroke-width="1"/></svg></div>

<div id="btn" class="abs"></div>
<div id="btntxt" class="t">Vai al catalogo cartografico</div>

<svg class="abs" id="shot" style="left:136px;top:368px" width="182" height="52" viewBox="0 0 182 52">
<defs><clipPath id="c1"><rect x="3" y="22.5" width="51" height="21"/></clipPath><clipPath id="c2"><rect x="58" y="22.5" width="51" height="21"/></clipPath><clipPath id="c3"><rect x="112.5" y="22.5" width="51" height="21"/></clipPath><linearGradient id="hdr" x1="0" y1="0" x2="0" y2="1"><stop offset="0" stop-color="#e8eef8"/><stop offset="1" stop-color="#c8d4e6"/></linearGradient></defs>
<rect width="182" height="52" fill="#dfe6f1"/>
<rect width="182" height="10" fill="url(#hdr)"/>
<rect x="9" y="1.5" width="19" height="7.5" fill="#2a4a7a"/>
<path d="M11,8 L13,3 L15,8 Z" fill="#e8c030"/>
<rect x="20" y="4" width="6" height="1" fill="#a8b8d0"/><rect x="20" y="6" width="6" height="1" fill="#a8b8d0"/>
<text x="36" y="6.6" font-family="Liberation Sans" font-weight="bold" font-size="4.6" fill="#1e2636" stroke="#1e2636" stroke-width="0.15" textLength="100" lengthAdjust="spacingAndGlyphs">Piatt di predizione e prevenzione dei Rischi CM di Roma Capitale</text>
<rect x="0" y="10" width="182" height="3" fill="#d2dcec"/>
<rect x="1" y="12" width="12" height="1" fill="#6080b0"/>
<rect x="1" y="15" width="40" height="1.2" fill="#b8c0a8"/>
<rect x="50" y="15" width="30" height="1.2" fill="#c8ccd4"/>
<rect x="95" y="15" width="20" height="1.2" fill="#d0c080"/>
<rect x="1" y="19" width="180" height="0.8" fill="#ccd6e6"/>
<g fill="#9aa8c0"><rect x="5" y="20" width="24" height="0.8"/><rect x="58" y="20" width="40" height="0.8"/><rect x="114" y="20" width="20" height="0.8"/><rect x="168" y="20" width="14" height="0.8"/></g>
<rect x="3" y="22.5" width="51" height="21" fill="#7aa8c0"/>
<path d="M3,22.5 L30,22.5 L26,43.5 L3,40 Z" fill="#88c888" opacity="0.9"/>
<path d="M38,22.5 L54,22.5 L54,43.5 L36,43.5 Z" fill="#6a88c0" opacity="0.8"/>
<g fill="none" stroke="#e0303a" clip-path="url(#c1)"><circle cx="28" cy="33" r="4" stroke-width="1.6"/><circle cx="28" cy="33" r="8" stroke-width="1.6"/><circle cx="28" cy="33" r="12.5" stroke-width="1.4" opacity="0.9"/><circle cx="28" cy="33" r="17" stroke-width="1.2" opacity="0.7"/></g>
<rect x="25.5" y="30" width="5" height="5.5" fill="#fff"/><circle cx="28" cy="32.5" r="1.5" fill="#e03040"/>
<rect x="58" y="22.5" width="51" height="21" fill="#7a6a58"/>
<path d="M58,22.5 L72,22.5 L70,43.5 L58,43.5 Z" fill="#4a4038"/>
<g fill="none" stroke="#30c8b8" clip-path="url(#c2)"><circle cx="82" cy="33" r="4.5" stroke-width="1.8"/><circle cx="82" cy="33" r="9" stroke-width="1.8"/><circle cx="82" cy="33" r="13" stroke-width="1.4" opacity="0.8"/></g>
<rect x="79.5" y="30.5" width="5" height="5" fill="#e8f0f8"/><rect x="80" y="33" width="4" height="2" fill="#3a90d0"/>
<rect x="105" y="28" width="3" height="6" fill="#e87030"/>
<rect x="112.5" y="22.5" width="51" height="21" fill="#b07060"/>
<path d="M130,22.5 L163.5,22.5 L163.5,36 L140,30 Z" fill="#d8a048"/>
<path d="M145,22.5 L160,22.5 L158,30 Z" fill="#c8d050"/>
<path d="M112.5,22.5 L125,22.5 L122,43.5 L112.5,43.5 Z" fill="#8a8078"/>
<g fill="none" stroke="#d04848" opacity="0.8" clip-path="url(#c3)"><circle cx="136" cy="33" r="5" stroke-width="1.4"/><circle cx="136" cy="33" r="9.5" stroke-width="1.4"/><circle cx="136" cy="33" r="14" stroke-width="1.2"/></g>
<rect x="133.5" y="30.5" width="5" height="5" fill="#f4ecec"/><rect x="134.5" y="32" width="3" height="2.5" fill="#d04040"/>
<rect x="167" y="22.5" width="15" height="21" fill="#8a98a8"/>
<path d="M170,22.5 L176,22.5 L174,43.5 L168,43.5 Z" fill="#c8d0d8"/>
<rect x="176" y="36" width="6" height="7.5" fill="#404850"/>
<g fill="#9aa8c0"><rect x="5" y="46.5" width="40" height="0.8"/><rect x="58" y="46.5" width="10" height="0.8"/><rect x="114" y="46.5" width="36" height="0.8"/></g>
<rect x="3" y="49.5" width="51" height="3" fill="#6a6060"/><rect x="40" y="49.5" width="14" height="3" fill="#c04a20"/>
<rect x="58" y="49.5" width="51" height="3" fill="#e8ecf0"/><rect x="58" y="49.5" width="2" height="3" fill="#404040"/>
<rect x="112.5" y="49.5" width="51" height="3" fill="#eef0f4"/>
<g fill="#e8b040"><rect x="115" y="50" width="4" height="2"/></g><rect x="125" y="50" width="4" height="2" fill="#e08080"/><rect x="135" y="50" width="4" height="2" fill="#3a7a90"/><rect x="148" y="50" width="4" height="2" fill="#d03030"/>
<rect x="167" y="49.5" width="15" height="3" fill="#e0e4ea"/>
</svg>
<div class="t nh" style="top:366.6px">Work in progress della Piattaforma prototipale di</div>
<div class="t nh" style="top:380.7px">supporto alla gestione delle emergenze di</div>
<div class="t nh" style="top:393.8px">protezione civile</div>
<div class="t ns" style="top:407.8px">Presentazione work in progress della Piattaforma per la Gestione delle Emergenze della Città</div>
<div class="t ns" style="top:418.4px">metropolitana di Roma Capitale</div>

<div id="sb" class="abs"></div>
<div id="sbthumb" class="abs"></div>
<svg class="abs" style="left:737.5px;top:0" width="9.5" height="420" viewBox="0 0 9.5 420">
<path d="M3.1,6.2 L4.8,3.9 L6.5,6.2 Z" fill="#505050"/>
<path d="M3.1,413.8 L4.8,416.1 L6.5,413.8 Z" fill="#505050"/>
</svg>
</body></html>
